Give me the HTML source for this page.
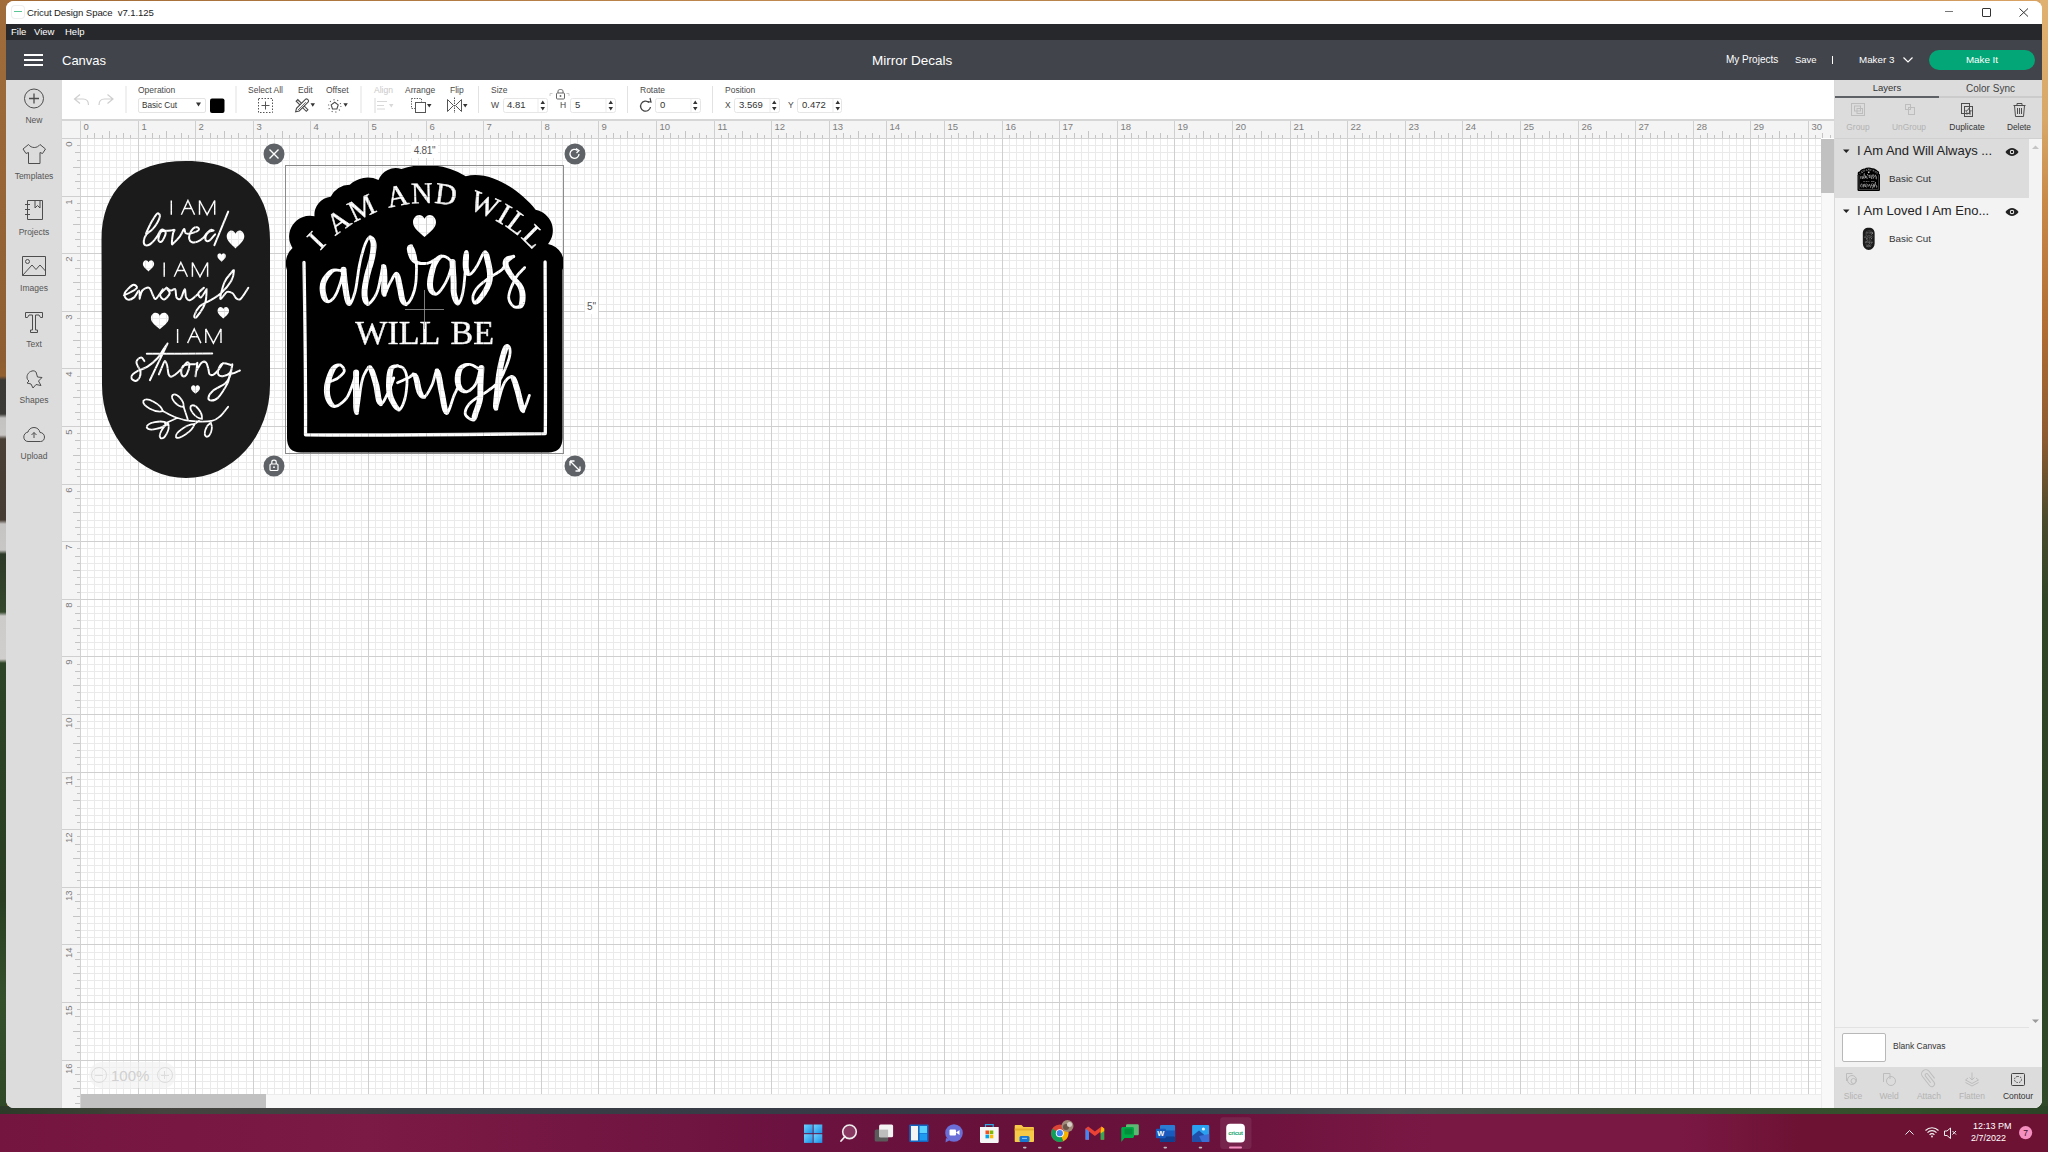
<!DOCTYPE html>
<html><head><meta charset="utf-8">
<style>
*{box-sizing:border-box;margin:0;padding:0}
html,body{width:2048px;height:1152px;overflow:hidden}
body{position:relative;font-family:"Liberation Sans",sans-serif;background:#5b4a3a}
.a{position:absolute}
.t{position:absolute;white-space:nowrap;line-height:1}
svg{position:absolute;overflow:visible}
#desk{left:0;top:0;width:2048px;height:1152px;background:linear-gradient(90deg,#a36a35 0%,#c08a50 40%,#b58048 60%,#c8905a 90%,#d9a565 100%)}
#deskL{left:0;top:0;width:7px;height:1152px;background:linear-gradient(180deg,#a06c3a 0px,#8e5e32 360px,#93602f 376px,#3a3936 380px,#3c3a37 414px,#c4c2c0 418px,#c8c6c4 435px,#4a4036 439px,#463c33 520px,#c6c4c2 524px,#c9c7c5 550px,#2e3a28 554px,#34482c 612px,#cdcbc9 616px,#d0cecc 659px,#2e4426 663px,#2a3f22 900px,#34502b 1000px,#2d4424 1152px)}
#deskR{left:2040px;top:0;width:8px;height:1152px;background:linear-gradient(180deg,#e0b070 0px,#d8a868 120px,#c98a48 200px,#b06c32 330px,#8c5a30 440px,#4a4a2c 520px,#304526 600px,#2c4224 900px,#324a2a 1152px)}
#deskB{left:0;top:1106px;width:2048px;height:10px;background:linear-gradient(90deg,#2c3a28 0%,#45443e 8%,#3a3d44 20%,#353a46 45%,#3c4048 62%,#4a4c4e 68%,#3d4a34 80%,#34502b 92%,#2c4426 100%)}
#win{left:6px;top:1px;width:2036px;height:1107px;border-radius:8px;background:#fff}
#title{left:6px;top:1px;width:2036px;height:23px;background:#fff;border-radius:8px 8px 0 0}
#menu{left:6px;top:24px;width:2036px;height:16px;background:#27282c}
#hdr{left:6px;top:40px;width:2036px;height:40px;background:#41444b}
#side{left:6px;top:80px;width:56px;height:1028px;background:#dcdcdc;border-radius:0 0 0 8px}
#tool{left:62px;top:80px;width:1773px;height:40px;background:#fff}
#panel{left:1835px;top:80px;width:207px;height:1028px;background:#f3f3f3;border-radius:0 0 8px 0}
#task{left:0;top:1114px;width:2048px;height:38px;background:#6c1232}
.wt{color:#fff}
.lbl{font-size:8.5px;color:#4a4a4a}
.sl{font-size:8.5px;color:#555;text-align:center;width:56px;left:6px}
</style></head><body>
<div class="a" id="desk"></div><div class="a" id="deskL"></div><div class="a" id="deskR"></div><div class="a" id="deskB"></div>
<div class="a" id="win"></div>
<div class="a" id="title"></div>
<div class="a" id="menu"></div>
<div class="a" id="hdr"></div>
<div class="a" id="side"></div>
<div class="a" id="tool"></div>
<div class="a" id="panel"></div>
<div class="a" id="task"></div>

<!-- title bar -->
<div class="a" style="left:12px;top:6px;width:12px;height:12px;border-radius:3px;background:#fff;box-shadow:0 0 0 1px #eee"></div>
<div class="a" style="left:14px;top:11px;width:8px;height:1.2px;background:#5cc596"></div>
<div class="t" style="left:27px;top:8px;font-size:9.6px;color:#222;letter-spacing:-0.1px">Cricut Design Space&nbsp; v7.1.125</div>
<div class="a" style="left:1945px;top:11px;width:8px;height:1px;background:#777"></div>
<div class="a" style="left:1982px;top:8px;width:9px;height:9px;border:1px solid #333;border-radius:1px"></div>
<svg style="left:2019px;top:8px" width="10" height="9"><path d="M0.5 0.5L9 8.5M9 0.5L0.5 8.5" stroke="#333" stroke-width="1"/></svg>
<!-- menu -->
<div class="t wt" style="left:11px;top:27px;font-size:9.5px">File</div>
<div class="t wt" style="left:34px;top:27px;font-size:9.5px">View</div>
<div class="t wt" style="left:65px;top:27px;font-size:9.5px">Help</div>
<!-- header -->
<div class="a" style="left:24px;top:54px;width:19px;height:2px;background:#fff"></div>
<div class="a" style="left:24px;top:59px;width:19px;height:2px;background:#fff"></div>
<div class="a" style="left:24px;top:64px;width:19px;height:2px;background:#fff"></div>
<div class="t wt" style="left:62px;top:54px;font-size:13px">Canvas</div>
<div class="t wt" style="left:872px;top:54px;font-size:13.5px">Mirror Decals</div>
<div class="t wt" style="left:1726px;top:55px;font-size:10px">My Projects</div>
<div class="t wt" style="left:1795px;top:55px;font-size:9.5px">Save</div>
<div class="a" style="left:1832px;top:56px;width:1px;height:8px;background:#fff"></div>
<div class="t wt" style="left:1859px;top:55px;font-size:9.8px">Maker 3</div>
<svg style="left:1903px;top:57px" width="10" height="6"><path d="M0.5 0.5L5 5L9.5 0.5" stroke="#fff" stroke-width="1.2" fill="none"/></svg>
<div class="a" style="left:1929px;top:50px;width:106px;height:20px;border-radius:10px;background:#03a676"></div>
<div class="t wt" style="left:1929px;top:55px;width:106px;text-align:center;font-size:9.8px">Make It</div>

<!-- left sidebar -->
<svg style="left:0;top:0" width="70" height="470" fill="none" stroke="#4d4d4d" stroke-width="1">
<circle cx="34" cy="98.5" r="9.5"/>
<path d="M34 93.5V103.5M29 98.5H39" stroke-width="1.3"/>
<path d="M28.5 144.5L23 149L26 153.5L28.5 152.5V163.5H40V152.5L42.5 153.5L45.5 149L40 144.5C38.5 146.5 36.5 147.5 34.25 147.5C32 147.5 30 146.5 28.5 144.5Z"/>
<path d="M27.5 200.5H42.5V219.5H27.5Z M25 204.5H30 M25 209.5H30 M25 214.5H30 M35 200.5V208L37.5 205.5L40 208V200.5"/>
<path d="M22.5 256.5H45.5V275.5H22.5Z M22.5 275.5L32 265L36 269.5L40 265L45.5 271"/>
<circle cx="27.5" cy="261.5" r="2"/>
<path d="M25.5 312.5H42.5V317.5H40.5L39 315H35.5V330H37.5V332.5H30.5V330H32.5V315H29L27.5 317.5H25.5Z"/>
<path d="M32 371C28 372 26 376 27.5 379.5L29 381L27 383L31 384L33 388L36 384.5L41 385.5L38.5 381L42 377.5L37.5 377L36 372C35 371 33.5 370.5 32 371Z"/>
<path d="M28 441.5H40.5C43 441.5 44.5 439.5 44.5 437C44.5 434.5 42.5 432.5 40 432.5C39.5 429.5 37 427.5 34 427.5C31 427.5 28.5 429.5 28 432C25.5 432.5 23.8 434.5 23.8 437C23.8 439.5 25.5 441.5 28 441.5Z M34 438V432.5 M31.5 435L34 432.5L36.5 435"/>
</svg>
<div class="t sl" style="top:116px">New</div>
<div class="t sl" style="top:172px">Templates</div>
<div class="t sl" style="top:228px">Projects</div>
<div class="t sl" style="top:284px">Images</div>
<div class="t sl" style="top:340px">Text</div>
<div class="t sl" style="top:396px">Shapes</div>
<div class="t sl" style="top:452px">Upload</div>

<!-- toolbar -->
<svg style="left:0;top:0" width="900" height="120" fill="none" stroke-width="1">
<path d="M80 94.5L74.5 99L80 103.5 M74.5 99H83C86.5 99 88.5 101 88.5 105" stroke="#cfcfcf" stroke-width="1.2"/>
<path d="M107.5 94.5L113 99L107.5 103.5 M113 99H104.5C101 99 99 101 99 105" stroke="#cfcfcf" stroke-width="1.2"/>
<rect x="125.5" y="86" width="1" height="27" fill="#e2e2e2" stroke="none"/>
<rect x="235.5" y="86" width="1" height="27" fill="#e2e2e2" stroke="none"/>
<rect x="360.5" y="86" width="1" height="27" fill="#e2e2e2" stroke="none"/>
<rect x="478" y="86" width="1" height="27" fill="#e2e2e2" stroke="none"/>
<rect x="627" y="86" width="1" height="27" fill="#e2e2e2" stroke="none"/>
<rect x="712" y="86" width="1" height="27" fill="#e2e2e2" stroke="none"/>
<!-- dropdown -->
<rect x="138.5" y="98.5" width="67" height="14" rx="1.5" stroke="#e4e4e4"/>
<path d="M196 102.5H201L198.5 106.5Z" fill="#333" stroke="none"/>
<rect x="210" y="98.5" width="14.5" height="14.5" rx="2" fill="#000" stroke="none"/>
<!-- select all -->
<rect x="258.5" y="98.5" width="14" height="14" stroke="#555" stroke-dasharray="1.5 1.5"/>
<path d="M265.5 101.5V109.5M261.5 105.5H269.5" stroke="#555"/>
<!-- edit: pencil & ruler crossed -->
<g stroke="#4a4a4a" stroke-width="1.1" fill="#fff">
<path d="M296.2 101.2L297.8 99.6L307.9 109.7L306.3 111.3Z"/>
<path d="M295.6 111.8L296.5 108.3L305.4 99.4C306 98.8 307 98.8 307.6 99.4L308.1 99.9C308.7 100.5 308.7 101.5 308.1 102.1L299.2 111Z"/>
</g>
<path d="M298 110L305.8 102.2 M297.5 100.2L298.7 101.4" stroke="#4a4a4a" stroke-width="0.8"/>
<path d="M310.5 103.2H315L312.75 106.8Z" fill="#333" stroke="none"/>
<!-- offset -->
<path d="M334.7 102.3L338.2 104.9L336.9 109H332.5L331.2 104.9Z" stroke="#4a4a4a" stroke-width="1.1"/>
<circle cx="334.7" cy="105.9" r="6.2" stroke="#4a4a4a" stroke-width="1.2" stroke-dasharray="0.9 3" />
<path d="M343.4 103.2H347.8L345.6 106.8Z" fill="#333" stroke="none"/>
<!-- align disabled -->
<path d="M375 98V113 M377 101.5H387 M377 105.5H384 M377 109H385" stroke="#d8d8d8"/>
<path d="M389 104H393.5L391.25 107.5Z" fill="#d8d8d8" stroke="none"/>
<!-- arrange -->
<rect x="411.5" y="98.5" width="10" height="10" stroke="#555" stroke-dasharray="1.3 1.3"/>
<rect x="415.5" y="102.5" width="10" height="10" fill="#fff" stroke="#555"/>
<path d="M427 104H431.5L429.25 107.5Z" fill="#333" stroke="none"/>
<!-- flip -->
<path d="M447.5 99.5L453.5 105.5L447.5 111.5Z M461.5 99.5L455.5 105.5L461.5 111.5Z" stroke="#555"/>
<path d="M454.5 97.5V113" stroke="#555" stroke-dasharray="1.5 1"/>
<path d="M463 104H467.5L465.25 107.5Z" fill="#333" stroke="none"/>
<!-- lock -->
<path d="M550 96V93.5H552.5 M569 96V93.5H566.5" stroke="#ccc"/>
<rect x="556.5" y="93" width="8" height="6" rx="1" stroke="#666"/>
<path d="M558 93V91C558 89 563 89 563 91V93" stroke="#666"/>
<circle cx="560.5" cy="96" r="0.9" fill="#666" stroke="none"/>
<!-- inputs -->
<rect x="503.5" y="98.5" width="44" height="14" rx="2" stroke="#e6e6e6"/>
<rect x="570.5" y="98.5" width="45" height="14" rx="2" stroke="#e6e6e6"/>
<rect x="655.5" y="98.5" width="45" height="14" rx="2" stroke="#e6e6e6"/>
<rect x="734.5" y="98.5" width="45" height="14" rx="2" stroke="#e6e6e6"/>
<rect x="797.5" y="98.5" width="44" height="14" rx="2" stroke="#e6e6e6"/>
<rect x="537.5" y="99" width="1" height="13" fill="#ececec" stroke="none"/>
<rect x="605.5" y="99" width="1" height="13" fill="#ececec" stroke="none"/>
<rect x="690.5" y="99" width="1" height="13" fill="#ececec" stroke="none"/>
<rect x="769.5" y="99" width="1" height="13" fill="#ececec" stroke="none"/>
<rect x="832.5" y="99" width="1" height="13" fill="#ececec" stroke="none"/>
<g fill="#333" stroke="none">
<path d="M540.5 104H545L542.75 100.5Z M540.5 107H545L542.75 110.5Z"/>
<path d="M608.5 104H613L610.75 100.5Z M608.5 107H613L610.75 110.5Z"/>
<path d="M693 104H697.5L695.25 100.5Z M693 107H697.5L695.25 110.5Z"/>
<path d="M772 104H776.5L774.25 100.5Z M772 107H776.5L774.25 110.5Z"/>
<path d="M835.5 104H840L837.75 100.5Z M835.5 107H840L837.75 110.5Z"/>
</g>
<!-- rotate icon -->
<path d="M649 102.5A5 5 0 1 0 650.5 107" stroke="#444" stroke-width="1.3"/>
<path d="M646.5 101.5L651 102L650 98" stroke="#444" stroke-width="1.2"/>
</svg>
<div class="t lbl" style="left:138px;top:86px">Operation</div>
<div class="t" style="left:142px;top:102px;font-size:8.2px;color:#333">Basic Cut</div>
<div class="t lbl" style="left:248px;top:86px">Select All</div>
<div class="t lbl" style="left:298px;top:86px">Edit</div>
<div class="t lbl" style="left:326px;top:86px">Offset</div>
<div class="t lbl" style="left:374px;top:86px;color:#c8c8c8">Align</div>
<div class="t lbl" style="left:405px;top:86px">Arrange</div>
<div class="t lbl" style="left:450px;top:86px">Flip</div>
<div class="t lbl" style="left:491px;top:86px">Size</div>
<div class="t lbl" style="left:640px;top:86px">Rotate</div>
<div class="t lbl" style="left:725px;top:86px">Position</div>
<div class="t" style="left:491px;top:101px;font-size:8.5px;color:#444">W</div>
<div class="t" style="left:507px;top:100px;font-size:9.5px;color:#333">4.81</div>
<div class="t" style="left:560px;top:101px;font-size:8.5px;color:#444">H</div>
<div class="t" style="left:575px;top:100px;font-size:9.5px;color:#333">5</div>
<div class="t" style="left:660px;top:100px;font-size:9.5px;color:#333">0</div>
<div class="t" style="left:725px;top:101px;font-size:8.5px;color:#444">X</div>
<div class="t" style="left:739px;top:100px;font-size:9.5px;color:#333">3.569</div>
<div class="t" style="left:788px;top:101px;font-size:8.5px;color:#444">Y</div>
<div class="t" style="left:802px;top:100px;font-size:9.5px;color:#333">0.472</div>

<div class="a" style="left:81px;top:138px;width:1740px;height:956px;background:#fff"></div>
<svg style="left:81px;top:139px" width="1740" height="955"><rect x="6" y="0" width="1" height="955" fill="#eaeaea"/><rect x="13" y="0" width="1" height="955" fill="#eaeaea"/><rect x="21" y="0" width="1" height="955" fill="#eaeaea"/><rect x="28" y="0" width="1" height="955" fill="#eaeaea"/><rect x="35" y="0" width="1" height="955" fill="#eaeaea"/><rect x="42" y="0" width="1" height="955" fill="#eaeaea"/><rect x="49" y="0" width="1" height="955" fill="#eaeaea"/><rect x="64" y="0" width="1" height="955" fill="#eaeaea"/><rect x="71" y="0" width="1" height="955" fill="#eaeaea"/><rect x="78" y="0" width="1" height="955" fill="#eaeaea"/><rect x="85" y="0" width="1" height="955" fill="#eaeaea"/><rect x="93" y="0" width="1" height="955" fill="#eaeaea"/><rect x="100" y="0" width="1" height="955" fill="#eaeaea"/><rect x="107" y="0" width="1" height="955" fill="#eaeaea"/><rect x="121" y="0" width="1" height="955" fill="#eaeaea"/><rect x="129" y="0" width="1" height="955" fill="#eaeaea"/><rect x="136" y="0" width="1" height="955" fill="#eaeaea"/><rect x="143" y="0" width="1" height="955" fill="#eaeaea"/><rect x="150" y="0" width="1" height="955" fill="#eaeaea"/><rect x="157" y="0" width="1" height="955" fill="#eaeaea"/><rect x="165" y="0" width="1" height="955" fill="#eaeaea"/><rect x="179" y="0" width="1" height="955" fill="#eaeaea"/><rect x="186" y="0" width="1" height="955" fill="#eaeaea"/><rect x="193" y="0" width="1" height="955" fill="#eaeaea"/><rect x="201" y="0" width="1" height="955" fill="#eaeaea"/><rect x="208" y="0" width="1" height="955" fill="#eaeaea"/><rect x="215" y="0" width="1" height="955" fill="#eaeaea"/><rect x="222" y="0" width="1" height="955" fill="#eaeaea"/><rect x="237" y="0" width="1" height="955" fill="#eaeaea"/><rect x="244" y="0" width="1" height="955" fill="#eaeaea"/><rect x="251" y="0" width="1" height="955" fill="#eaeaea"/><rect x="258" y="0" width="1" height="955" fill="#eaeaea"/><rect x="265" y="0" width="1" height="955" fill="#eaeaea"/><rect x="273" y="0" width="1" height="955" fill="#eaeaea"/><rect x="280" y="0" width="1" height="955" fill="#eaeaea"/><rect x="294" y="0" width="1" height="955" fill="#eaeaea"/><rect x="301" y="0" width="1" height="955" fill="#eaeaea"/><rect x="309" y="0" width="1" height="955" fill="#eaeaea"/><rect x="316" y="0" width="1" height="955" fill="#eaeaea"/><rect x="323" y="0" width="1" height="955" fill="#eaeaea"/><rect x="330" y="0" width="1" height="955" fill="#eaeaea"/><rect x="337" y="0" width="1" height="955" fill="#eaeaea"/><rect x="352" y="0" width="1" height="955" fill="#eaeaea"/><rect x="359" y="0" width="1" height="955" fill="#eaeaea"/><rect x="366" y="0" width="1" height="955" fill="#eaeaea"/><rect x="373" y="0" width="1" height="955" fill="#eaeaea"/><rect x="381" y="0" width="1" height="955" fill="#eaeaea"/><rect x="388" y="0" width="1" height="955" fill="#eaeaea"/><rect x="395" y="0" width="1" height="955" fill="#eaeaea"/><rect x="409" y="0" width="1" height="955" fill="#eaeaea"/><rect x="417" y="0" width="1" height="955" fill="#eaeaea"/><rect x="424" y="0" width="1" height="955" fill="#eaeaea"/><rect x="431" y="0" width="1" height="955" fill="#eaeaea"/><rect x="438" y="0" width="1" height="955" fill="#eaeaea"/><rect x="445" y="0" width="1" height="955" fill="#eaeaea"/><rect x="453" y="0" width="1" height="955" fill="#eaeaea"/><rect x="467" y="0" width="1" height="955" fill="#eaeaea"/><rect x="474" y="0" width="1" height="955" fill="#eaeaea"/><rect x="481" y="0" width="1" height="955" fill="#eaeaea"/><rect x="489" y="0" width="1" height="955" fill="#eaeaea"/><rect x="496" y="0" width="1" height="955" fill="#eaeaea"/><rect x="503" y="0" width="1" height="955" fill="#eaeaea"/><rect x="510" y="0" width="1" height="955" fill="#eaeaea"/><rect x="525" y="0" width="1" height="955" fill="#eaeaea"/><rect x="532" y="0" width="1" height="955" fill="#eaeaea"/><rect x="539" y="0" width="1" height="955" fill="#eaeaea"/><rect x="546" y="0" width="1" height="955" fill="#eaeaea"/><rect x="553" y="0" width="1" height="955" fill="#eaeaea"/><rect x="561" y="0" width="1" height="955" fill="#eaeaea"/><rect x="568" y="0" width="1" height="955" fill="#eaeaea"/><rect x="582" y="0" width="1" height="955" fill="#eaeaea"/><rect x="589" y="0" width="1" height="955" fill="#eaeaea"/><rect x="597" y="0" width="1" height="955" fill="#eaeaea"/><rect x="604" y="0" width="1" height="955" fill="#eaeaea"/><rect x="611" y="0" width="1" height="955" fill="#eaeaea"/><rect x="618" y="0" width="1" height="955" fill="#eaeaea"/><rect x="625" y="0" width="1" height="955" fill="#eaeaea"/><rect x="640" y="0" width="1" height="955" fill="#eaeaea"/><rect x="647" y="0" width="1" height="955" fill="#eaeaea"/><rect x="654" y="0" width="1" height="955" fill="#eaeaea"/><rect x="661" y="0" width="1" height="955" fill="#eaeaea"/><rect x="669" y="0" width="1" height="955" fill="#eaeaea"/><rect x="676" y="0" width="1" height="955" fill="#eaeaea"/><rect x="683" y="0" width="1" height="955" fill="#eaeaea"/><rect x="697" y="0" width="1" height="955" fill="#eaeaea"/><rect x="705" y="0" width="1" height="955" fill="#eaeaea"/><rect x="712" y="0" width="1" height="955" fill="#eaeaea"/><rect x="719" y="0" width="1" height="955" fill="#eaeaea"/><rect x="726" y="0" width="1" height="955" fill="#eaeaea"/><rect x="733" y="0" width="1" height="955" fill="#eaeaea"/><rect x="741" y="0" width="1" height="955" fill="#eaeaea"/><rect x="755" y="0" width="1" height="955" fill="#eaeaea"/><rect x="762" y="0" width="1" height="955" fill="#eaeaea"/><rect x="769" y="0" width="1" height="955" fill="#eaeaea"/><rect x="777" y="0" width="1" height="955" fill="#eaeaea"/><rect x="784" y="0" width="1" height="955" fill="#eaeaea"/><rect x="791" y="0" width="1" height="955" fill="#eaeaea"/><rect x="798" y="0" width="1" height="955" fill="#eaeaea"/><rect x="813" y="0" width="1" height="955" fill="#eaeaea"/><rect x="820" y="0" width="1" height="955" fill="#eaeaea"/><rect x="827" y="0" width="1" height="955" fill="#eaeaea"/><rect x="834" y="0" width="1" height="955" fill="#eaeaea"/><rect x="841" y="0" width="1" height="955" fill="#eaeaea"/><rect x="849" y="0" width="1" height="955" fill="#eaeaea"/><rect x="856" y="0" width="1" height="955" fill="#eaeaea"/><rect x="870" y="0" width="1" height="955" fill="#eaeaea"/><rect x="877" y="0" width="1" height="955" fill="#eaeaea"/><rect x="885" y="0" width="1" height="955" fill="#eaeaea"/><rect x="892" y="0" width="1" height="955" fill="#eaeaea"/><rect x="899" y="0" width="1" height="955" fill="#eaeaea"/><rect x="906" y="0" width="1" height="955" fill="#eaeaea"/><rect x="913" y="0" width="1" height="955" fill="#eaeaea"/><rect x="928" y="0" width="1" height="955" fill="#eaeaea"/><rect x="935" y="0" width="1" height="955" fill="#eaeaea"/><rect x="942" y="0" width="1" height="955" fill="#eaeaea"/><rect x="949" y="0" width="1" height="955" fill="#eaeaea"/><rect x="957" y="0" width="1" height="955" fill="#eaeaea"/><rect x="964" y="0" width="1" height="955" fill="#eaeaea"/><rect x="971" y="0" width="1" height="955" fill="#eaeaea"/><rect x="985" y="0" width="1" height="955" fill="#eaeaea"/><rect x="993" y="0" width="1" height="955" fill="#eaeaea"/><rect x="1000" y="0" width="1" height="955" fill="#eaeaea"/><rect x="1007" y="0" width="1" height="955" fill="#eaeaea"/><rect x="1014" y="0" width="1" height="955" fill="#eaeaea"/><rect x="1021" y="0" width="1" height="955" fill="#eaeaea"/><rect x="1029" y="0" width="1" height="955" fill="#eaeaea"/><rect x="1043" y="0" width="1" height="955" fill="#eaeaea"/><rect x="1050" y="0" width="1" height="955" fill="#eaeaea"/><rect x="1057" y="0" width="1" height="955" fill="#eaeaea"/><rect x="1065" y="0" width="1" height="955" fill="#eaeaea"/><rect x="1072" y="0" width="1" height="955" fill="#eaeaea"/><rect x="1079" y="0" width="1" height="955" fill="#eaeaea"/><rect x="1086" y="0" width="1" height="955" fill="#eaeaea"/><rect x="1101" y="0" width="1" height="955" fill="#eaeaea"/><rect x="1108" y="0" width="1" height="955" fill="#eaeaea"/><rect x="1115" y="0" width="1" height="955" fill="#eaeaea"/><rect x="1122" y="0" width="1" height="955" fill="#eaeaea"/><rect x="1129" y="0" width="1" height="955" fill="#eaeaea"/><rect x="1137" y="0" width="1" height="955" fill="#eaeaea"/><rect x="1144" y="0" width="1" height="955" fill="#eaeaea"/><rect x="1158" y="0" width="1" height="955" fill="#eaeaea"/><rect x="1165" y="0" width="1" height="955" fill="#eaeaea"/><rect x="1173" y="0" width="1" height="955" fill="#eaeaea"/><rect x="1180" y="0" width="1" height="955" fill="#eaeaea"/><rect x="1187" y="0" width="1" height="955" fill="#eaeaea"/><rect x="1194" y="0" width="1" height="955" fill="#eaeaea"/><rect x="1201" y="0" width="1" height="955" fill="#eaeaea"/><rect x="1216" y="0" width="1" height="955" fill="#eaeaea"/><rect x="1223" y="0" width="1" height="955" fill="#eaeaea"/><rect x="1230" y="0" width="1" height="955" fill="#eaeaea"/><rect x="1237" y="0" width="1" height="955" fill="#eaeaea"/><rect x="1245" y="0" width="1" height="955" fill="#eaeaea"/><rect x="1252" y="0" width="1" height="955" fill="#eaeaea"/><rect x="1259" y="0" width="1" height="955" fill="#eaeaea"/><rect x="1273" y="0" width="1" height="955" fill="#eaeaea"/><rect x="1281" y="0" width="1" height="955" fill="#eaeaea"/><rect x="1288" y="0" width="1" height="955" fill="#eaeaea"/><rect x="1295" y="0" width="1" height="955" fill="#eaeaea"/><rect x="1302" y="0" width="1" height="955" fill="#eaeaea"/><rect x="1309" y="0" width="1" height="955" fill="#eaeaea"/><rect x="1317" y="0" width="1" height="955" fill="#eaeaea"/><rect x="1331" y="0" width="1" height="955" fill="#eaeaea"/><rect x="1338" y="0" width="1" height="955" fill="#eaeaea"/><rect x="1345" y="0" width="1" height="955" fill="#eaeaea"/><rect x="1353" y="0" width="1" height="955" fill="#eaeaea"/><rect x="1360" y="0" width="1" height="955" fill="#eaeaea"/><rect x="1367" y="0" width="1" height="955" fill="#eaeaea"/><rect x="1374" y="0" width="1" height="955" fill="#eaeaea"/><rect x="1389" y="0" width="1" height="955" fill="#eaeaea"/><rect x="1396" y="0" width="1" height="955" fill="#eaeaea"/><rect x="1403" y="0" width="1" height="955" fill="#eaeaea"/><rect x="1410" y="0" width="1" height="955" fill="#eaeaea"/><rect x="1417" y="0" width="1" height="955" fill="#eaeaea"/><rect x="1425" y="0" width="1" height="955" fill="#eaeaea"/><rect x="1432" y="0" width="1" height="955" fill="#eaeaea"/><rect x="1446" y="0" width="1" height="955" fill="#eaeaea"/><rect x="1453" y="0" width="1" height="955" fill="#eaeaea"/><rect x="1461" y="0" width="1" height="955" fill="#eaeaea"/><rect x="1468" y="0" width="1" height="955" fill="#eaeaea"/><rect x="1475" y="0" width="1" height="955" fill="#eaeaea"/><rect x="1482" y="0" width="1" height="955" fill="#eaeaea"/><rect x="1489" y="0" width="1" height="955" fill="#eaeaea"/><rect x="1504" y="0" width="1" height="955" fill="#eaeaea"/><rect x="1511" y="0" width="1" height="955" fill="#eaeaea"/><rect x="1518" y="0" width="1" height="955" fill="#eaeaea"/><rect x="1525" y="0" width="1" height="955" fill="#eaeaea"/><rect x="1533" y="0" width="1" height="955" fill="#eaeaea"/><rect x="1540" y="0" width="1" height="955" fill="#eaeaea"/><rect x="1547" y="0" width="1" height="955" fill="#eaeaea"/><rect x="1561" y="0" width="1" height="955" fill="#eaeaea"/><rect x="1569" y="0" width="1" height="955" fill="#eaeaea"/><rect x="1576" y="0" width="1" height="955" fill="#eaeaea"/><rect x="1583" y="0" width="1" height="955" fill="#eaeaea"/><rect x="1590" y="0" width="1" height="955" fill="#eaeaea"/><rect x="1597" y="0" width="1" height="955" fill="#eaeaea"/><rect x="1605" y="0" width="1" height="955" fill="#eaeaea"/><rect x="1619" y="0" width="1" height="955" fill="#eaeaea"/><rect x="1626" y="0" width="1" height="955" fill="#eaeaea"/><rect x="1633" y="0" width="1" height="955" fill="#eaeaea"/><rect x="1641" y="0" width="1" height="955" fill="#eaeaea"/><rect x="1648" y="0" width="1" height="955" fill="#eaeaea"/><rect x="1655" y="0" width="1" height="955" fill="#eaeaea"/><rect x="1662" y="0" width="1" height="955" fill="#eaeaea"/><rect x="1677" y="0" width="1" height="955" fill="#eaeaea"/><rect x="1684" y="0" width="1" height="955" fill="#eaeaea"/><rect x="1691" y="0" width="1" height="955" fill="#eaeaea"/><rect x="1698" y="0" width="1" height="955" fill="#eaeaea"/><rect x="1705" y="0" width="1" height="955" fill="#eaeaea"/><rect x="1713" y="0" width="1" height="955" fill="#eaeaea"/><rect x="1720" y="0" width="1" height="955" fill="#eaeaea"/><rect x="1734" y="0" width="1" height="955" fill="#eaeaea"/><rect x="0" y="6" width="1740" height="1" fill="#eaeaea"/><rect x="0" y="13" width="1740" height="1" fill="#eaeaea"/><rect x="0" y="21" width="1740" height="1" fill="#eaeaea"/><rect x="0" y="28" width="1740" height="1" fill="#eaeaea"/><rect x="0" y="35" width="1740" height="1" fill="#eaeaea"/><rect x="0" y="42" width="1740" height="1" fill="#eaeaea"/><rect x="0" y="49" width="1740" height="1" fill="#eaeaea"/><rect x="0" y="64" width="1740" height="1" fill="#eaeaea"/><rect x="0" y="71" width="1740" height="1" fill="#eaeaea"/><rect x="0" y="78" width="1740" height="1" fill="#eaeaea"/><rect x="0" y="85" width="1740" height="1" fill="#eaeaea"/><rect x="0" y="93" width="1740" height="1" fill="#eaeaea"/><rect x="0" y="100" width="1740" height="1" fill="#eaeaea"/><rect x="0" y="107" width="1740" height="1" fill="#eaeaea"/><rect x="0" y="121" width="1740" height="1" fill="#eaeaea"/><rect x="0" y="129" width="1740" height="1" fill="#eaeaea"/><rect x="0" y="136" width="1740" height="1" fill="#eaeaea"/><rect x="0" y="143" width="1740" height="1" fill="#eaeaea"/><rect x="0" y="150" width="1740" height="1" fill="#eaeaea"/><rect x="0" y="157" width="1740" height="1" fill="#eaeaea"/><rect x="0" y="165" width="1740" height="1" fill="#eaeaea"/><rect x="0" y="179" width="1740" height="1" fill="#eaeaea"/><rect x="0" y="186" width="1740" height="1" fill="#eaeaea"/><rect x="0" y="193" width="1740" height="1" fill="#eaeaea"/><rect x="0" y="201" width="1740" height="1" fill="#eaeaea"/><rect x="0" y="208" width="1740" height="1" fill="#eaeaea"/><rect x="0" y="215" width="1740" height="1" fill="#eaeaea"/><rect x="0" y="222" width="1740" height="1" fill="#eaeaea"/><rect x="0" y="237" width="1740" height="1" fill="#eaeaea"/><rect x="0" y="244" width="1740" height="1" fill="#eaeaea"/><rect x="0" y="251" width="1740" height="1" fill="#eaeaea"/><rect x="0" y="258" width="1740" height="1" fill="#eaeaea"/><rect x="0" y="265" width="1740" height="1" fill="#eaeaea"/><rect x="0" y="273" width="1740" height="1" fill="#eaeaea"/><rect x="0" y="280" width="1740" height="1" fill="#eaeaea"/><rect x="0" y="294" width="1740" height="1" fill="#eaeaea"/><rect x="0" y="301" width="1740" height="1" fill="#eaeaea"/><rect x="0" y="309" width="1740" height="1" fill="#eaeaea"/><rect x="0" y="316" width="1740" height="1" fill="#eaeaea"/><rect x="0" y="323" width="1740" height="1" fill="#eaeaea"/><rect x="0" y="330" width="1740" height="1" fill="#eaeaea"/><rect x="0" y="337" width="1740" height="1" fill="#eaeaea"/><rect x="0" y="352" width="1740" height="1" fill="#eaeaea"/><rect x="0" y="359" width="1740" height="1" fill="#eaeaea"/><rect x="0" y="366" width="1740" height="1" fill="#eaeaea"/><rect x="0" y="373" width="1740" height="1" fill="#eaeaea"/><rect x="0" y="381" width="1740" height="1" fill="#eaeaea"/><rect x="0" y="388" width="1740" height="1" fill="#eaeaea"/><rect x="0" y="395" width="1740" height="1" fill="#eaeaea"/><rect x="0" y="409" width="1740" height="1" fill="#eaeaea"/><rect x="0" y="417" width="1740" height="1" fill="#eaeaea"/><rect x="0" y="424" width="1740" height="1" fill="#eaeaea"/><rect x="0" y="431" width="1740" height="1" fill="#eaeaea"/><rect x="0" y="438" width="1740" height="1" fill="#eaeaea"/><rect x="0" y="445" width="1740" height="1" fill="#eaeaea"/><rect x="0" y="453" width="1740" height="1" fill="#eaeaea"/><rect x="0" y="467" width="1740" height="1" fill="#eaeaea"/><rect x="0" y="474" width="1740" height="1" fill="#eaeaea"/><rect x="0" y="481" width="1740" height="1" fill="#eaeaea"/><rect x="0" y="489" width="1740" height="1" fill="#eaeaea"/><rect x="0" y="496" width="1740" height="1" fill="#eaeaea"/><rect x="0" y="503" width="1740" height="1" fill="#eaeaea"/><rect x="0" y="510" width="1740" height="1" fill="#eaeaea"/><rect x="0" y="525" width="1740" height="1" fill="#eaeaea"/><rect x="0" y="532" width="1740" height="1" fill="#eaeaea"/><rect x="0" y="539" width="1740" height="1" fill="#eaeaea"/><rect x="0" y="546" width="1740" height="1" fill="#eaeaea"/><rect x="0" y="553" width="1740" height="1" fill="#eaeaea"/><rect x="0" y="561" width="1740" height="1" fill="#eaeaea"/><rect x="0" y="568" width="1740" height="1" fill="#eaeaea"/><rect x="0" y="582" width="1740" height="1" fill="#eaeaea"/><rect x="0" y="589" width="1740" height="1" fill="#eaeaea"/><rect x="0" y="597" width="1740" height="1" fill="#eaeaea"/><rect x="0" y="604" width="1740" height="1" fill="#eaeaea"/><rect x="0" y="611" width="1740" height="1" fill="#eaeaea"/><rect x="0" y="618" width="1740" height="1" fill="#eaeaea"/><rect x="0" y="625" width="1740" height="1" fill="#eaeaea"/><rect x="0" y="640" width="1740" height="1" fill="#eaeaea"/><rect x="0" y="647" width="1740" height="1" fill="#eaeaea"/><rect x="0" y="654" width="1740" height="1" fill="#eaeaea"/><rect x="0" y="661" width="1740" height="1" fill="#eaeaea"/><rect x="0" y="669" width="1740" height="1" fill="#eaeaea"/><rect x="0" y="676" width="1740" height="1" fill="#eaeaea"/><rect x="0" y="683" width="1740" height="1" fill="#eaeaea"/><rect x="0" y="697" width="1740" height="1" fill="#eaeaea"/><rect x="0" y="705" width="1740" height="1" fill="#eaeaea"/><rect x="0" y="712" width="1740" height="1" fill="#eaeaea"/><rect x="0" y="719" width="1740" height="1" fill="#eaeaea"/><rect x="0" y="726" width="1740" height="1" fill="#eaeaea"/><rect x="0" y="733" width="1740" height="1" fill="#eaeaea"/><rect x="0" y="741" width="1740" height="1" fill="#eaeaea"/><rect x="0" y="755" width="1740" height="1" fill="#eaeaea"/><rect x="0" y="762" width="1740" height="1" fill="#eaeaea"/><rect x="0" y="769" width="1740" height="1" fill="#eaeaea"/><rect x="0" y="777" width="1740" height="1" fill="#eaeaea"/><rect x="0" y="784" width="1740" height="1" fill="#eaeaea"/><rect x="0" y="791" width="1740" height="1" fill="#eaeaea"/><rect x="0" y="798" width="1740" height="1" fill="#eaeaea"/><rect x="0" y="813" width="1740" height="1" fill="#eaeaea"/><rect x="0" y="820" width="1740" height="1" fill="#eaeaea"/><rect x="0" y="827" width="1740" height="1" fill="#eaeaea"/><rect x="0" y="834" width="1740" height="1" fill="#eaeaea"/><rect x="0" y="841" width="1740" height="1" fill="#eaeaea"/><rect x="0" y="849" width="1740" height="1" fill="#eaeaea"/><rect x="0" y="856" width="1740" height="1" fill="#eaeaea"/><rect x="0" y="870" width="1740" height="1" fill="#eaeaea"/><rect x="0" y="877" width="1740" height="1" fill="#eaeaea"/><rect x="0" y="885" width="1740" height="1" fill="#eaeaea"/><rect x="0" y="892" width="1740" height="1" fill="#eaeaea"/><rect x="0" y="899" width="1740" height="1" fill="#eaeaea"/><rect x="0" y="906" width="1740" height="1" fill="#eaeaea"/><rect x="0" y="913" width="1740" height="1" fill="#eaeaea"/><rect x="0" y="928" width="1740" height="1" fill="#eaeaea"/><rect x="0" y="935" width="1740" height="1" fill="#eaeaea"/><rect x="0" y="942" width="1740" height="1" fill="#eaeaea"/><rect x="0" y="949" width="1740" height="1" fill="#eaeaea"/><rect x="57" y="0" width="1" height="955" fill="#cfcfcf"/><rect x="114" y="0" width="1" height="955" fill="#cfcfcf"/><rect x="172" y="0" width="1" height="955" fill="#cfcfcf"/><rect x="229" y="0" width="1" height="955" fill="#cfcfcf"/><rect x="287" y="0" width="1" height="955" fill="#cfcfcf"/><rect x="345" y="0" width="1" height="955" fill="#cfcfcf"/><rect x="402" y="0" width="1" height="955" fill="#cfcfcf"/><rect x="460" y="0" width="1" height="955" fill="#cfcfcf"/><rect x="517" y="0" width="1" height="955" fill="#cfcfcf"/><rect x="575" y="0" width="1" height="955" fill="#cfcfcf"/><rect x="633" y="0" width="1" height="955" fill="#cfcfcf"/><rect x="690" y="0" width="1" height="955" fill="#cfcfcf"/><rect x="748" y="0" width="1" height="955" fill="#cfcfcf"/><rect x="805" y="0" width="1" height="955" fill="#cfcfcf"/><rect x="863" y="0" width="1" height="955" fill="#cfcfcf"/><rect x="921" y="0" width="1" height="955" fill="#cfcfcf"/><rect x="978" y="0" width="1" height="955" fill="#cfcfcf"/><rect x="1036" y="0" width="1" height="955" fill="#cfcfcf"/><rect x="1093" y="0" width="1" height="955" fill="#cfcfcf"/><rect x="1151" y="0" width="1" height="955" fill="#cfcfcf"/><rect x="1209" y="0" width="1" height="955" fill="#cfcfcf"/><rect x="1266" y="0" width="1" height="955" fill="#cfcfcf"/><rect x="1324" y="0" width="1" height="955" fill="#cfcfcf"/><rect x="1381" y="0" width="1" height="955" fill="#cfcfcf"/><rect x="1439" y="0" width="1" height="955" fill="#cfcfcf"/><rect x="1497" y="0" width="1" height="955" fill="#cfcfcf"/><rect x="1554" y="0" width="1" height="955" fill="#cfcfcf"/><rect x="1612" y="0" width="1" height="955" fill="#cfcfcf"/><rect x="1669" y="0" width="1" height="955" fill="#cfcfcf"/><rect x="1727" y="0" width="1" height="955" fill="#cfcfcf"/><rect x="0" y="57" width="1740" height="1" fill="#cfcfcf"/><rect x="0" y="114" width="1740" height="1" fill="#cfcfcf"/><rect x="0" y="172" width="1740" height="1" fill="#cfcfcf"/><rect x="0" y="229" width="1740" height="1" fill="#cfcfcf"/><rect x="0" y="287" width="1740" height="1" fill="#cfcfcf"/><rect x="0" y="345" width="1740" height="1" fill="#cfcfcf"/><rect x="0" y="402" width="1740" height="1" fill="#cfcfcf"/><rect x="0" y="460" width="1740" height="1" fill="#cfcfcf"/><rect x="0" y="517" width="1740" height="1" fill="#cfcfcf"/><rect x="0" y="575" width="1740" height="1" fill="#cfcfcf"/><rect x="0" y="633" width="1740" height="1" fill="#cfcfcf"/><rect x="0" y="690" width="1740" height="1" fill="#cfcfcf"/><rect x="0" y="748" width="1740" height="1" fill="#cfcfcf"/><rect x="0" y="805" width="1740" height="1" fill="#cfcfcf"/><rect x="0" y="863" width="1740" height="1" fill="#cfcfcf"/><rect x="0" y="921" width="1740" height="1" fill="#cfcfcf"/></svg>
<div class="a" style="left:62px;top:119px;width:1773px;height:2px;background:#d6d6d6"></div>
<div class="a" style="left:62px;top:121px;width:1772px;height:17px;background:#f4f4f4"></div>
<div class="a" style="left:62px;top:121px;width:18px;height:987px;background:#f4f4f4"></div>
<div class="a" style="left:62px;top:138px;width:1759px;height:1px;background:#d2d2d2"></div>
<div class="a" style="left:80px;top:121px;width:1px;height:987px;background:#d2d2d2"></div>
<div class="a" style="left:61px;top:119px;width:1px;height:989px;background:#d8d8d8"></div>
<svg style="left:0;top:0" width="2048" height="1152" font-family="Liberation Sans"><rect x="80" y="121" width="1" height="17" fill="#cfcfcf"/><text x="83.5" y="130" font-size="9.5" fill="#7d7d7d">0</text><rect x="87" y="135" width="1" height="3" fill="#c4c4c4"/><rect x="94" y="133" width="1" height="5" fill="#c4c4c4"/><rect x="102" y="135" width="1" height="3" fill="#c4c4c4"/><rect x="109" y="131" width="1" height="7" fill="#c4c4c4"/><rect x="116" y="135" width="1" height="3" fill="#c4c4c4"/><rect x="123" y="133" width="1" height="5" fill="#c4c4c4"/><rect x="130" y="135" width="1" height="3" fill="#c4c4c4"/><rect x="138" y="121" width="1" height="17" fill="#cfcfcf"/><text x="141.5" y="130" font-size="9.5" fill="#7d7d7d">1</text><rect x="145" y="135" width="1" height="3" fill="#c4c4c4"/><rect x="152" y="133" width="1" height="5" fill="#c4c4c4"/><rect x="159" y="135" width="1" height="3" fill="#c4c4c4"/><rect x="166" y="131" width="1" height="7" fill="#c4c4c4"/><rect x="174" y="135" width="1" height="3" fill="#c4c4c4"/><rect x="181" y="133" width="1" height="5" fill="#c4c4c4"/><rect x="188" y="135" width="1" height="3" fill="#c4c4c4"/><rect x="195" y="121" width="1" height="17" fill="#cfcfcf"/><text x="198.5" y="130" font-size="9.5" fill="#7d7d7d">2</text><rect x="202" y="135" width="1" height="3" fill="#c4c4c4"/><rect x="210" y="133" width="1" height="5" fill="#c4c4c4"/><rect x="217" y="135" width="1" height="3" fill="#c4c4c4"/><rect x="224" y="131" width="1" height="7" fill="#c4c4c4"/><rect x="231" y="135" width="1" height="3" fill="#c4c4c4"/><rect x="238" y="133" width="1" height="5" fill="#c4c4c4"/><rect x="246" y="135" width="1" height="3" fill="#c4c4c4"/><rect x="253" y="121" width="1" height="17" fill="#cfcfcf"/><text x="256.5" y="130" font-size="9.5" fill="#7d7d7d">3</text><rect x="260" y="135" width="1" height="3" fill="#c4c4c4"/><rect x="267" y="133" width="1" height="5" fill="#c4c4c4"/><rect x="274" y="135" width="1" height="3" fill="#c4c4c4"/><rect x="282" y="131" width="1" height="7" fill="#c4c4c4"/><rect x="289" y="135" width="1" height="3" fill="#c4c4c4"/><rect x="296" y="133" width="1" height="5" fill="#c4c4c4"/><rect x="303" y="135" width="1" height="3" fill="#c4c4c4"/><rect x="310" y="121" width="1" height="17" fill="#cfcfcf"/><text x="313.5" y="130" font-size="9.5" fill="#7d7d7d">4</text><rect x="318" y="135" width="1" height="3" fill="#c4c4c4"/><rect x="325" y="133" width="1" height="5" fill="#c4c4c4"/><rect x="332" y="135" width="1" height="3" fill="#c4c4c4"/><rect x="339" y="131" width="1" height="7" fill="#c4c4c4"/><rect x="346" y="135" width="1" height="3" fill="#c4c4c4"/><rect x="354" y="133" width="1" height="5" fill="#c4c4c4"/><rect x="361" y="135" width="1" height="3" fill="#c4c4c4"/><rect x="368" y="121" width="1" height="17" fill="#cfcfcf"/><text x="371.5" y="130" font-size="9.5" fill="#7d7d7d">5</text><rect x="375" y="135" width="1" height="3" fill="#c4c4c4"/><rect x="382" y="133" width="1" height="5" fill="#c4c4c4"/><rect x="390" y="135" width="1" height="3" fill="#c4c4c4"/><rect x="397" y="131" width="1" height="7" fill="#c4c4c4"/><rect x="404" y="135" width="1" height="3" fill="#c4c4c4"/><rect x="411" y="133" width="1" height="5" fill="#c4c4c4"/><rect x="418" y="135" width="1" height="3" fill="#c4c4c4"/><rect x="426" y="121" width="1" height="17" fill="#cfcfcf"/><text x="429.5" y="130" font-size="9.5" fill="#7d7d7d">6</text><rect x="433" y="135" width="1" height="3" fill="#c4c4c4"/><rect x="440" y="133" width="1" height="5" fill="#c4c4c4"/><rect x="447" y="135" width="1" height="3" fill="#c4c4c4"/><rect x="454" y="131" width="1" height="7" fill="#c4c4c4"/><rect x="462" y="135" width="1" height="3" fill="#c4c4c4"/><rect x="469" y="133" width="1" height="5" fill="#c4c4c4"/><rect x="476" y="135" width="1" height="3" fill="#c4c4c4"/><rect x="483" y="121" width="1" height="17" fill="#cfcfcf"/><text x="486.5" y="130" font-size="9.5" fill="#7d7d7d">7</text><rect x="490" y="135" width="1" height="3" fill="#c4c4c4"/><rect x="498" y="133" width="1" height="5" fill="#c4c4c4"/><rect x="505" y="135" width="1" height="3" fill="#c4c4c4"/><rect x="512" y="131" width="1" height="7" fill="#c4c4c4"/><rect x="519" y="135" width="1" height="3" fill="#c4c4c4"/><rect x="526" y="133" width="1" height="5" fill="#c4c4c4"/><rect x="534" y="135" width="1" height="3" fill="#c4c4c4"/><rect x="541" y="121" width="1" height="17" fill="#cfcfcf"/><text x="544.5" y="130" font-size="9.5" fill="#7d7d7d">8</text><rect x="548" y="135" width="1" height="3" fill="#c4c4c4"/><rect x="555" y="133" width="1" height="5" fill="#c4c4c4"/><rect x="562" y="135" width="1" height="3" fill="#c4c4c4"/><rect x="570" y="131" width="1" height="7" fill="#c4c4c4"/><rect x="577" y="135" width="1" height="3" fill="#c4c4c4"/><rect x="584" y="133" width="1" height="5" fill="#c4c4c4"/><rect x="591" y="135" width="1" height="3" fill="#c4c4c4"/><rect x="598" y="121" width="1" height="17" fill="#cfcfcf"/><text x="601.5" y="130" font-size="9.5" fill="#7d7d7d">9</text><rect x="606" y="135" width="1" height="3" fill="#c4c4c4"/><rect x="613" y="133" width="1" height="5" fill="#c4c4c4"/><rect x="620" y="135" width="1" height="3" fill="#c4c4c4"/><rect x="627" y="131" width="1" height="7" fill="#c4c4c4"/><rect x="634" y="135" width="1" height="3" fill="#c4c4c4"/><rect x="642" y="133" width="1" height="5" fill="#c4c4c4"/><rect x="649" y="135" width="1" height="3" fill="#c4c4c4"/><rect x="656" y="121" width="1" height="17" fill="#cfcfcf"/><text x="659.5" y="130" font-size="9.5" fill="#7d7d7d">10</text><rect x="663" y="135" width="1" height="3" fill="#c4c4c4"/><rect x="670" y="133" width="1" height="5" fill="#c4c4c4"/><rect x="678" y="135" width="1" height="3" fill="#c4c4c4"/><rect x="685" y="131" width="1" height="7" fill="#c4c4c4"/><rect x="692" y="135" width="1" height="3" fill="#c4c4c4"/><rect x="699" y="133" width="1" height="5" fill="#c4c4c4"/><rect x="706" y="135" width="1" height="3" fill="#c4c4c4"/><rect x="714" y="121" width="1" height="17" fill="#cfcfcf"/><text x="717.5" y="130" font-size="9.5" fill="#7d7d7d">11</text><rect x="721" y="135" width="1" height="3" fill="#c4c4c4"/><rect x="728" y="133" width="1" height="5" fill="#c4c4c4"/><rect x="735" y="135" width="1" height="3" fill="#c4c4c4"/><rect x="742" y="131" width="1" height="7" fill="#c4c4c4"/><rect x="750" y="135" width="1" height="3" fill="#c4c4c4"/><rect x="757" y="133" width="1" height="5" fill="#c4c4c4"/><rect x="764" y="135" width="1" height="3" fill="#c4c4c4"/><rect x="771" y="121" width="1" height="17" fill="#cfcfcf"/><text x="774.5" y="130" font-size="9.5" fill="#7d7d7d">12</text><rect x="778" y="135" width="1" height="3" fill="#c4c4c4"/><rect x="786" y="133" width="1" height="5" fill="#c4c4c4"/><rect x="793" y="135" width="1" height="3" fill="#c4c4c4"/><rect x="800" y="131" width="1" height="7" fill="#c4c4c4"/><rect x="807" y="135" width="1" height="3" fill="#c4c4c4"/><rect x="814" y="133" width="1" height="5" fill="#c4c4c4"/><rect x="822" y="135" width="1" height="3" fill="#c4c4c4"/><rect x="829" y="121" width="1" height="17" fill="#cfcfcf"/><text x="832.5" y="130" font-size="9.5" fill="#7d7d7d">13</text><rect x="836" y="135" width="1" height="3" fill="#c4c4c4"/><rect x="843" y="133" width="1" height="5" fill="#c4c4c4"/><rect x="850" y="135" width="1" height="3" fill="#c4c4c4"/><rect x="858" y="131" width="1" height="7" fill="#c4c4c4"/><rect x="865" y="135" width="1" height="3" fill="#c4c4c4"/><rect x="872" y="133" width="1" height="5" fill="#c4c4c4"/><rect x="879" y="135" width="1" height="3" fill="#c4c4c4"/><rect x="886" y="121" width="1" height="17" fill="#cfcfcf"/><text x="889.5" y="130" font-size="9.5" fill="#7d7d7d">14</text><rect x="894" y="135" width="1" height="3" fill="#c4c4c4"/><rect x="901" y="133" width="1" height="5" fill="#c4c4c4"/><rect x="908" y="135" width="1" height="3" fill="#c4c4c4"/><rect x="915" y="131" width="1" height="7" fill="#c4c4c4"/><rect x="922" y="135" width="1" height="3" fill="#c4c4c4"/><rect x="930" y="133" width="1" height="5" fill="#c4c4c4"/><rect x="937" y="135" width="1" height="3" fill="#c4c4c4"/><rect x="944" y="121" width="1" height="17" fill="#cfcfcf"/><text x="947.5" y="130" font-size="9.5" fill="#7d7d7d">15</text><rect x="951" y="135" width="1" height="3" fill="#c4c4c4"/><rect x="958" y="133" width="1" height="5" fill="#c4c4c4"/><rect x="966" y="135" width="1" height="3" fill="#c4c4c4"/><rect x="973" y="131" width="1" height="7" fill="#c4c4c4"/><rect x="980" y="135" width="1" height="3" fill="#c4c4c4"/><rect x="987" y="133" width="1" height="5" fill="#c4c4c4"/><rect x="994" y="135" width="1" height="3" fill="#c4c4c4"/><rect x="1002" y="121" width="1" height="17" fill="#cfcfcf"/><text x="1005.5" y="130" font-size="9.5" fill="#7d7d7d">16</text><rect x="1009" y="135" width="1" height="3" fill="#c4c4c4"/><rect x="1016" y="133" width="1" height="5" fill="#c4c4c4"/><rect x="1023" y="135" width="1" height="3" fill="#c4c4c4"/><rect x="1030" y="131" width="1" height="7" fill="#c4c4c4"/><rect x="1038" y="135" width="1" height="3" fill="#c4c4c4"/><rect x="1045" y="133" width="1" height="5" fill="#c4c4c4"/><rect x="1052" y="135" width="1" height="3" fill="#c4c4c4"/><rect x="1059" y="121" width="1" height="17" fill="#cfcfcf"/><text x="1062.5" y="130" font-size="9.5" fill="#7d7d7d">17</text><rect x="1066" y="135" width="1" height="3" fill="#c4c4c4"/><rect x="1074" y="133" width="1" height="5" fill="#c4c4c4"/><rect x="1081" y="135" width="1" height="3" fill="#c4c4c4"/><rect x="1088" y="131" width="1" height="7" fill="#c4c4c4"/><rect x="1095" y="135" width="1" height="3" fill="#c4c4c4"/><rect x="1102" y="133" width="1" height="5" fill="#c4c4c4"/><rect x="1110" y="135" width="1" height="3" fill="#c4c4c4"/><rect x="1117" y="121" width="1" height="17" fill="#cfcfcf"/><text x="1120.5" y="130" font-size="9.5" fill="#7d7d7d">18</text><rect x="1124" y="135" width="1" height="3" fill="#c4c4c4"/><rect x="1131" y="133" width="1" height="5" fill="#c4c4c4"/><rect x="1138" y="135" width="1" height="3" fill="#c4c4c4"/><rect x="1146" y="131" width="1" height="7" fill="#c4c4c4"/><rect x="1153" y="135" width="1" height="3" fill="#c4c4c4"/><rect x="1160" y="133" width="1" height="5" fill="#c4c4c4"/><rect x="1167" y="135" width="1" height="3" fill="#c4c4c4"/><rect x="1174" y="121" width="1" height="17" fill="#cfcfcf"/><text x="1177.5" y="130" font-size="9.5" fill="#7d7d7d">19</text><rect x="1182" y="135" width="1" height="3" fill="#c4c4c4"/><rect x="1189" y="133" width="1" height="5" fill="#c4c4c4"/><rect x="1196" y="135" width="1" height="3" fill="#c4c4c4"/><rect x="1203" y="131" width="1" height="7" fill="#c4c4c4"/><rect x="1210" y="135" width="1" height="3" fill="#c4c4c4"/><rect x="1218" y="133" width="1" height="5" fill="#c4c4c4"/><rect x="1225" y="135" width="1" height="3" fill="#c4c4c4"/><rect x="1232" y="121" width="1" height="17" fill="#cfcfcf"/><text x="1235.5" y="130" font-size="9.5" fill="#7d7d7d">20</text><rect x="1239" y="135" width="1" height="3" fill="#c4c4c4"/><rect x="1246" y="133" width="1" height="5" fill="#c4c4c4"/><rect x="1254" y="135" width="1" height="3" fill="#c4c4c4"/><rect x="1261" y="131" width="1" height="7" fill="#c4c4c4"/><rect x="1268" y="135" width="1" height="3" fill="#c4c4c4"/><rect x="1275" y="133" width="1" height="5" fill="#c4c4c4"/><rect x="1282" y="135" width="1" height="3" fill="#c4c4c4"/><rect x="1290" y="121" width="1" height="17" fill="#cfcfcf"/><text x="1293.5" y="130" font-size="9.5" fill="#7d7d7d">21</text><rect x="1297" y="135" width="1" height="3" fill="#c4c4c4"/><rect x="1304" y="133" width="1" height="5" fill="#c4c4c4"/><rect x="1311" y="135" width="1" height="3" fill="#c4c4c4"/><rect x="1318" y="131" width="1" height="7" fill="#c4c4c4"/><rect x="1326" y="135" width="1" height="3" fill="#c4c4c4"/><rect x="1333" y="133" width="1" height="5" fill="#c4c4c4"/><rect x="1340" y="135" width="1" height="3" fill="#c4c4c4"/><rect x="1347" y="121" width="1" height="17" fill="#cfcfcf"/><text x="1350.5" y="130" font-size="9.5" fill="#7d7d7d">22</text><rect x="1354" y="135" width="1" height="3" fill="#c4c4c4"/><rect x="1362" y="133" width="1" height="5" fill="#c4c4c4"/><rect x="1369" y="135" width="1" height="3" fill="#c4c4c4"/><rect x="1376" y="131" width="1" height="7" fill="#c4c4c4"/><rect x="1383" y="135" width="1" height="3" fill="#c4c4c4"/><rect x="1390" y="133" width="1" height="5" fill="#c4c4c4"/><rect x="1398" y="135" width="1" height="3" fill="#c4c4c4"/><rect x="1405" y="121" width="1" height="17" fill="#cfcfcf"/><text x="1408.5" y="130" font-size="9.5" fill="#7d7d7d">23</text><rect x="1412" y="135" width="1" height="3" fill="#c4c4c4"/><rect x="1419" y="133" width="1" height="5" fill="#c4c4c4"/><rect x="1426" y="135" width="1" height="3" fill="#c4c4c4"/><rect x="1434" y="131" width="1" height="7" fill="#c4c4c4"/><rect x="1441" y="135" width="1" height="3" fill="#c4c4c4"/><rect x="1448" y="133" width="1" height="5" fill="#c4c4c4"/><rect x="1455" y="135" width="1" height="3" fill="#c4c4c4"/><rect x="1462" y="121" width="1" height="17" fill="#cfcfcf"/><text x="1465.5" y="130" font-size="9.5" fill="#7d7d7d">24</text><rect x="1470" y="135" width="1" height="3" fill="#c4c4c4"/><rect x="1477" y="133" width="1" height="5" fill="#c4c4c4"/><rect x="1484" y="135" width="1" height="3" fill="#c4c4c4"/><rect x="1491" y="131" width="1" height="7" fill="#c4c4c4"/><rect x="1498" y="135" width="1" height="3" fill="#c4c4c4"/><rect x="1506" y="133" width="1" height="5" fill="#c4c4c4"/><rect x="1513" y="135" width="1" height="3" fill="#c4c4c4"/><rect x="1520" y="121" width="1" height="17" fill="#cfcfcf"/><text x="1523.5" y="130" font-size="9.5" fill="#7d7d7d">25</text><rect x="1527" y="135" width="1" height="3" fill="#c4c4c4"/><rect x="1534" y="133" width="1" height="5" fill="#c4c4c4"/><rect x="1542" y="135" width="1" height="3" fill="#c4c4c4"/><rect x="1549" y="131" width="1" height="7" fill="#c4c4c4"/><rect x="1556" y="135" width="1" height="3" fill="#c4c4c4"/><rect x="1563" y="133" width="1" height="5" fill="#c4c4c4"/><rect x="1570" y="135" width="1" height="3" fill="#c4c4c4"/><rect x="1578" y="121" width="1" height="17" fill="#cfcfcf"/><text x="1581.5" y="130" font-size="9.5" fill="#7d7d7d">26</text><rect x="1585" y="135" width="1" height="3" fill="#c4c4c4"/><rect x="1592" y="133" width="1" height="5" fill="#c4c4c4"/><rect x="1599" y="135" width="1" height="3" fill="#c4c4c4"/><rect x="1606" y="131" width="1" height="7" fill="#c4c4c4"/><rect x="1614" y="135" width="1" height="3" fill="#c4c4c4"/><rect x="1621" y="133" width="1" height="5" fill="#c4c4c4"/><rect x="1628" y="135" width="1" height="3" fill="#c4c4c4"/><rect x="1635" y="121" width="1" height="17" fill="#cfcfcf"/><text x="1638.5" y="130" font-size="9.5" fill="#7d7d7d">27</text><rect x="1642" y="135" width="1" height="3" fill="#c4c4c4"/><rect x="1650" y="133" width="1" height="5" fill="#c4c4c4"/><rect x="1657" y="135" width="1" height="3" fill="#c4c4c4"/><rect x="1664" y="131" width="1" height="7" fill="#c4c4c4"/><rect x="1671" y="135" width="1" height="3" fill="#c4c4c4"/><rect x="1678" y="133" width="1" height="5" fill="#c4c4c4"/><rect x="1686" y="135" width="1" height="3" fill="#c4c4c4"/><rect x="1693" y="121" width="1" height="17" fill="#cfcfcf"/><text x="1696.5" y="130" font-size="9.5" fill="#7d7d7d">28</text><rect x="1700" y="135" width="1" height="3" fill="#c4c4c4"/><rect x="1707" y="133" width="1" height="5" fill="#c4c4c4"/><rect x="1714" y="135" width="1" height="3" fill="#c4c4c4"/><rect x="1722" y="131" width="1" height="7" fill="#c4c4c4"/><rect x="1729" y="135" width="1" height="3" fill="#c4c4c4"/><rect x="1736" y="133" width="1" height="5" fill="#c4c4c4"/><rect x="1743" y="135" width="1" height="3" fill="#c4c4c4"/><rect x="1750" y="121" width="1" height="17" fill="#cfcfcf"/><text x="1753.5" y="130" font-size="9.5" fill="#7d7d7d">29</text><rect x="1758" y="135" width="1" height="3" fill="#c4c4c4"/><rect x="1765" y="133" width="1" height="5" fill="#c4c4c4"/><rect x="1772" y="135" width="1" height="3" fill="#c4c4c4"/><rect x="1779" y="131" width="1" height="7" fill="#c4c4c4"/><rect x="1786" y="135" width="1" height="3" fill="#c4c4c4"/><rect x="1794" y="133" width="1" height="5" fill="#c4c4c4"/><rect x="1801" y="135" width="1" height="3" fill="#c4c4c4"/><rect x="1808" y="121" width="1" height="17" fill="#cfcfcf"/><text x="1811.5" y="130" font-size="9.5" fill="#7d7d7d">30</text><rect x="1815" y="135" width="1" height="3" fill="#c4c4c4"/><rect x="1822" y="133" width="1" height="5" fill="#c4c4c4"/><rect x="1830" y="135" width="1" height="3" fill="#c4c4c4"/><rect x="62" y="138" width="18" height="1" fill="#cfcfcf"/><text transform="translate(72,141.5) rotate(-90)" font-size="9.5" fill="#7d7d7d" text-anchor="end">0</text><rect x="77" y="145" width="3" height="1" fill="#c4c4c4"/><rect x="75" y="152" width="5" height="1" fill="#c4c4c4"/><rect x="77" y="160" width="3" height="1" fill="#c4c4c4"/><rect x="73" y="167" width="7" height="1" fill="#c4c4c4"/><rect x="77" y="174" width="3" height="1" fill="#c4c4c4"/><rect x="75" y="181" width="5" height="1" fill="#c4c4c4"/><rect x="77" y="188" width="3" height="1" fill="#c4c4c4"/><rect x="62" y="196" width="18" height="1" fill="#cfcfcf"/><text transform="translate(72,199.5) rotate(-90)" font-size="9.5" fill="#7d7d7d" text-anchor="end">1</text><rect x="77" y="203" width="3" height="1" fill="#c4c4c4"/><rect x="75" y="210" width="5" height="1" fill="#c4c4c4"/><rect x="77" y="217" width="3" height="1" fill="#c4c4c4"/><rect x="73" y="224" width="7" height="1" fill="#c4c4c4"/><rect x="77" y="232" width="3" height="1" fill="#c4c4c4"/><rect x="75" y="239" width="5" height="1" fill="#c4c4c4"/><rect x="77" y="246" width="3" height="1" fill="#c4c4c4"/><rect x="62" y="253" width="18" height="1" fill="#cfcfcf"/><text transform="translate(72,256.5) rotate(-90)" font-size="9.5" fill="#7d7d7d" text-anchor="end">2</text><rect x="77" y="260" width="3" height="1" fill="#c4c4c4"/><rect x="75" y="268" width="5" height="1" fill="#c4c4c4"/><rect x="77" y="275" width="3" height="1" fill="#c4c4c4"/><rect x="73" y="282" width="7" height="1" fill="#c4c4c4"/><rect x="77" y="289" width="3" height="1" fill="#c4c4c4"/><rect x="75" y="296" width="5" height="1" fill="#c4c4c4"/><rect x="77" y="304" width="3" height="1" fill="#c4c4c4"/><rect x="62" y="311" width="18" height="1" fill="#cfcfcf"/><text transform="translate(72,314.5) rotate(-90)" font-size="9.5" fill="#7d7d7d" text-anchor="end">3</text><rect x="77" y="318" width="3" height="1" fill="#c4c4c4"/><rect x="75" y="325" width="5" height="1" fill="#c4c4c4"/><rect x="77" y="332" width="3" height="1" fill="#c4c4c4"/><rect x="73" y="340" width="7" height="1" fill="#c4c4c4"/><rect x="77" y="347" width="3" height="1" fill="#c4c4c4"/><rect x="75" y="354" width="5" height="1" fill="#c4c4c4"/><rect x="77" y="361" width="3" height="1" fill="#c4c4c4"/><rect x="62" y="368" width="18" height="1" fill="#cfcfcf"/><text transform="translate(72,371.5) rotate(-90)" font-size="9.5" fill="#7d7d7d" text-anchor="end">4</text><rect x="77" y="376" width="3" height="1" fill="#c4c4c4"/><rect x="75" y="383" width="5" height="1" fill="#c4c4c4"/><rect x="77" y="390" width="3" height="1" fill="#c4c4c4"/><rect x="73" y="397" width="7" height="1" fill="#c4c4c4"/><rect x="77" y="404" width="3" height="1" fill="#c4c4c4"/><rect x="75" y="412" width="5" height="1" fill="#c4c4c4"/><rect x="77" y="419" width="3" height="1" fill="#c4c4c4"/><rect x="62" y="426" width="18" height="1" fill="#cfcfcf"/><text transform="translate(72,429.5) rotate(-90)" font-size="9.5" fill="#7d7d7d" text-anchor="end">5</text><rect x="77" y="433" width="3" height="1" fill="#c4c4c4"/><rect x="75" y="440" width="5" height="1" fill="#c4c4c4"/><rect x="77" y="448" width="3" height="1" fill="#c4c4c4"/><rect x="73" y="455" width="7" height="1" fill="#c4c4c4"/><rect x="77" y="462" width="3" height="1" fill="#c4c4c4"/><rect x="75" y="469" width="5" height="1" fill="#c4c4c4"/><rect x="77" y="476" width="3" height="1" fill="#c4c4c4"/><rect x="62" y="484" width="18" height="1" fill="#cfcfcf"/><text transform="translate(72,487.5) rotate(-90)" font-size="9.5" fill="#7d7d7d" text-anchor="end">6</text><rect x="77" y="491" width="3" height="1" fill="#c4c4c4"/><rect x="75" y="498" width="5" height="1" fill="#c4c4c4"/><rect x="77" y="505" width="3" height="1" fill="#c4c4c4"/><rect x="73" y="512" width="7" height="1" fill="#c4c4c4"/><rect x="77" y="520" width="3" height="1" fill="#c4c4c4"/><rect x="75" y="527" width="5" height="1" fill="#c4c4c4"/><rect x="77" y="534" width="3" height="1" fill="#c4c4c4"/><rect x="62" y="541" width="18" height="1" fill="#cfcfcf"/><text transform="translate(72,544.5) rotate(-90)" font-size="9.5" fill="#7d7d7d" text-anchor="end">7</text><rect x="77" y="548" width="3" height="1" fill="#c4c4c4"/><rect x="75" y="556" width="5" height="1" fill="#c4c4c4"/><rect x="77" y="563" width="3" height="1" fill="#c4c4c4"/><rect x="73" y="570" width="7" height="1" fill="#c4c4c4"/><rect x="77" y="577" width="3" height="1" fill="#c4c4c4"/><rect x="75" y="584" width="5" height="1" fill="#c4c4c4"/><rect x="77" y="592" width="3" height="1" fill="#c4c4c4"/><rect x="62" y="599" width="18" height="1" fill="#cfcfcf"/><text transform="translate(72,602.5) rotate(-90)" font-size="9.5" fill="#7d7d7d" text-anchor="end">8</text><rect x="77" y="606" width="3" height="1" fill="#c4c4c4"/><rect x="75" y="613" width="5" height="1" fill="#c4c4c4"/><rect x="77" y="620" width="3" height="1" fill="#c4c4c4"/><rect x="73" y="628" width="7" height="1" fill="#c4c4c4"/><rect x="77" y="635" width="3" height="1" fill="#c4c4c4"/><rect x="75" y="642" width="5" height="1" fill="#c4c4c4"/><rect x="77" y="649" width="3" height="1" fill="#c4c4c4"/><rect x="62" y="656" width="18" height="1" fill="#cfcfcf"/><text transform="translate(72,659.5) rotate(-90)" font-size="9.5" fill="#7d7d7d" text-anchor="end">9</text><rect x="77" y="664" width="3" height="1" fill="#c4c4c4"/><rect x="75" y="671" width="5" height="1" fill="#c4c4c4"/><rect x="77" y="678" width="3" height="1" fill="#c4c4c4"/><rect x="73" y="685" width="7" height="1" fill="#c4c4c4"/><rect x="77" y="692" width="3" height="1" fill="#c4c4c4"/><rect x="75" y="700" width="5" height="1" fill="#c4c4c4"/><rect x="77" y="707" width="3" height="1" fill="#c4c4c4"/><rect x="62" y="714" width="18" height="1" fill="#cfcfcf"/><text transform="translate(72,717.5) rotate(-90)" font-size="9.5" fill="#7d7d7d" text-anchor="end">10</text><rect x="77" y="721" width="3" height="1" fill="#c4c4c4"/><rect x="75" y="728" width="5" height="1" fill="#c4c4c4"/><rect x="77" y="736" width="3" height="1" fill="#c4c4c4"/><rect x="73" y="743" width="7" height="1" fill="#c4c4c4"/><rect x="77" y="750" width="3" height="1" fill="#c4c4c4"/><rect x="75" y="757" width="5" height="1" fill="#c4c4c4"/><rect x="77" y="764" width="3" height="1" fill="#c4c4c4"/><rect x="62" y="772" width="18" height="1" fill="#cfcfcf"/><text transform="translate(72,775.5) rotate(-90)" font-size="9.5" fill="#7d7d7d" text-anchor="end">11</text><rect x="77" y="779" width="3" height="1" fill="#c4c4c4"/><rect x="75" y="786" width="5" height="1" fill="#c4c4c4"/><rect x="77" y="793" width="3" height="1" fill="#c4c4c4"/><rect x="73" y="800" width="7" height="1" fill="#c4c4c4"/><rect x="77" y="808" width="3" height="1" fill="#c4c4c4"/><rect x="75" y="815" width="5" height="1" fill="#c4c4c4"/><rect x="77" y="822" width="3" height="1" fill="#c4c4c4"/><rect x="62" y="829" width="18" height="1" fill="#cfcfcf"/><text transform="translate(72,832.5) rotate(-90)" font-size="9.5" fill="#7d7d7d" text-anchor="end">12</text><rect x="77" y="836" width="3" height="1" fill="#c4c4c4"/><rect x="75" y="844" width="5" height="1" fill="#c4c4c4"/><rect x="77" y="851" width="3" height="1" fill="#c4c4c4"/><rect x="73" y="858" width="7" height="1" fill="#c4c4c4"/><rect x="77" y="865" width="3" height="1" fill="#c4c4c4"/><rect x="75" y="872" width="5" height="1" fill="#c4c4c4"/><rect x="77" y="880" width="3" height="1" fill="#c4c4c4"/><rect x="62" y="887" width="18" height="1" fill="#cfcfcf"/><text transform="translate(72,890.5) rotate(-90)" font-size="9.5" fill="#7d7d7d" text-anchor="end">13</text><rect x="77" y="894" width="3" height="1" fill="#c4c4c4"/><rect x="75" y="901" width="5" height="1" fill="#c4c4c4"/><rect x="77" y="908" width="3" height="1" fill="#c4c4c4"/><rect x="73" y="916" width="7" height="1" fill="#c4c4c4"/><rect x="77" y="923" width="3" height="1" fill="#c4c4c4"/><rect x="75" y="930" width="5" height="1" fill="#c4c4c4"/><rect x="77" y="937" width="3" height="1" fill="#c4c4c4"/><rect x="62" y="944" width="18" height="1" fill="#cfcfcf"/><text transform="translate(72,947.5) rotate(-90)" font-size="9.5" fill="#7d7d7d" text-anchor="end">14</text><rect x="77" y="952" width="3" height="1" fill="#c4c4c4"/><rect x="75" y="959" width="5" height="1" fill="#c4c4c4"/><rect x="77" y="966" width="3" height="1" fill="#c4c4c4"/><rect x="73" y="973" width="7" height="1" fill="#c4c4c4"/><rect x="77" y="980" width="3" height="1" fill="#c4c4c4"/><rect x="75" y="988" width="5" height="1" fill="#c4c4c4"/><rect x="77" y="995" width="3" height="1" fill="#c4c4c4"/><rect x="62" y="1002" width="18" height="1" fill="#cfcfcf"/><text transform="translate(72,1005.5) rotate(-90)" font-size="9.5" fill="#7d7d7d" text-anchor="end">15</text><rect x="77" y="1009" width="3" height="1" fill="#c4c4c4"/><rect x="75" y="1016" width="5" height="1" fill="#c4c4c4"/><rect x="77" y="1024" width="3" height="1" fill="#c4c4c4"/><rect x="73" y="1031" width="7" height="1" fill="#c4c4c4"/><rect x="77" y="1038" width="3" height="1" fill="#c4c4c4"/><rect x="75" y="1045" width="5" height="1" fill="#c4c4c4"/><rect x="77" y="1052" width="3" height="1" fill="#c4c4c4"/><rect x="62" y="1060" width="18" height="1" fill="#cfcfcf"/><text transform="translate(72,1063.5) rotate(-90)" font-size="9.5" fill="#7d7d7d" text-anchor="end">16</text><rect x="77" y="1067" width="3" height="1" fill="#c4c4c4"/><rect x="75" y="1074" width="5" height="1" fill="#c4c4c4"/><rect x="77" y="1081" width="3" height="1" fill="#c4c4c4"/><rect x="73" y="1088" width="7" height="1" fill="#c4c4c4"/><rect x="77" y="1096" width="3" height="1" fill="#c4c4c4"/><rect x="75" y="1103" width="5" height="1" fill="#c4c4c4"/></svg>
<div class="a" style="left:1821px;top:139px;width:13px;height:969px;background:#f8f8f8;border-left:1px solid #ececec"></div>
<div class="a" style="left:1821px;top:139px;width:13px;height:54px;background:#c1c1c1"></div>
<div class="a" style="left:81px;top:1094px;width:1740px;height:14px;background:#f8f8f8;border-top:1px solid #ececec"></div>
<div class="a" style="left:81px;top:1094px;width:185px;height:14px;background:#c1c1c1"></div>
<div class="a" style="left:89px;top:1062px;width:87px;height:26px;border-radius:13px;background:rgba(240,240,240,0.6)"></div>
<div class="a" style="left:91px;top:1067px;width:16px;height:16px;border-radius:50%;border:1px solid #ddd"></div>
<div class="a" style="left:95px;top:1075px;width:8px;height:1px;background:#ddd"></div>
<div class="a" style="left:157px;top:1067px;width:16px;height:16px;border-radius:50%;border:1px solid #ddd"></div>
<div class="a" style="left:161px;top:1075px;width:8px;height:1px;background:#ddd"></div>
<div class="a" style="left:164px;top:1071px;width:1px;height:8px;background:#ddd"></div>
<div class="t" style="left:111px;top:1068px;font-size:15px;color:#d0d0d0">100%</div>
<svg style="left:0;top:0" width="2048" height="1152" font-family="Liberation Serif">
<defs>
<mask id="mL" maskUnits="userSpaceOnUse" x="0" y="0" width="700" height="600"><rect x="0" y="0" width="700" height="600" fill="#fff"/><g fill="#000">
<path d="M171.3 200.5V214.7 M181.3 214.7L187.95000000000002 200.5L194.60000000000002 214.7 M183.70000000000002 208.39999999999998H192.20000000000002 M199.5 214.7V200.5L207.1 214.7L214.7 200.5V214.7 M164.2 262.5V276.7 M174.2 276.7L180.85 262.5L187.5 276.7 M176.6 270.4H185.1 M192.39999999999998 276.7V262.5L199.99999999999997 276.7L207.59999999999997 262.5V276.7 M177.6 328.90000000000003V343.1 M187.6 343.1L194.25 328.90000000000003L200.9 343.1 M190.0 336.8H198.5 M205.79999999999998 343.1V328.90000000000003L213.39999999999998 343.1L220.99999999999997 328.90000000000003V343.1" fill="none" stroke="#000" stroke-width="1.45"/>
<path d="M146.0 233.5C146.8 231.8 149.1 226.5 150.8 223.3C152.5 220.2 154.9 216.2 156.2 214.6C157.5 213.0 157.8 213.2 158.4 213.5C159.0 213.8 160.1 214.8 159.9 216.4C159.7 218.0 158.3 221.1 157.0 223.3C155.7 225.6 153.7 228.1 151.9 229.9C150.1 231.7 147.8 232.5 146.4 234.3C145.1 236.1 144.0 239.0 143.8 240.8C143.6 242.6 144.3 244.6 145.3 245.2C146.3 245.8 148.2 245.3 149.7 244.5C151.2 243.7 153.0 241.7 154.4 240.1C155.8 238.5 157.0 236.6 158.0 235.0C159.0 233.4 159.7 231.4 160.6 230.6C161.5 229.8 162.7 229.4 163.5 229.9C164.3 230.4 166.0 231.6 165.7 233.5C165.4 235.4 162.9 240.5 161.7 241.6C160.5 242.7 158.7 241.4 158.4 240.1C158.1 238.8 159.4 235.0 159.9 233.5C160.4 232.0 160.7 231.8 161.7 231.3C162.7 230.9 164.5 230.9 166.0 230.8C167.5 230.7 169.4 230.8 170.8 230.6C172.2 230.4 174.1 229.4 174.5 229.9C174.9 230.4 173.4 231.2 173.0 233.5C172.6 235.8 171.8 242.1 171.9 243.7C172.0 245.3 172.4 244.2 173.7 243.0C175.0 241.8 178.2 238.7 179.9 236.4C181.6 234.1 183.1 229.8 184.0 229.2C184.9 228.6 184.7 232.0 185.4 232.8C186.1 233.6 187.2 233.7 188.0 233.8C188.8 233.9 188.8 233.9 190.3 233.5C191.8 233.1 195.5 232.0 196.9 231.3C198.3 230.6 199.0 229.9 199.0 229.2C199.0 228.5 197.9 227.4 196.9 227.3C195.9 227.2 194.4 227.4 193.2 228.4C192.0 229.4 190.6 231.7 189.9 233.5C189.2 235.3 188.8 237.5 189.2 239.0C189.6 240.5 190.7 241.9 192.1 242.3C193.5 242.7 195.8 242.3 197.6 241.6C199.4 240.9 201.6 239.2 203.1 237.9C204.6 236.6 205.4 234.8 206.7 233.5C208.0 232.2 209.5 230.4 210.7 229.9C211.8 229.4 213.1 230.5 213.6 230.6 M213.6 230.6C212.8 230.8 209.8 231.1 208.5 232.1C207.2 233.1 206.0 234.9 205.6 236.4C205.2 237.9 205.6 240.2 206.3 240.8C207.0 241.4 208.5 241.2 210.0 240.1C211.5 239.0 214.2 235.3 215.1 234.3 M228.2 211.6C225.9 217.2 216.7 239.6 214.4 245.2" fill="none" stroke="#000" stroke-width="2.0" stroke-linecap="round" stroke-linejoin="round"/>
<path d="M123.9 295.3C124.9 294.8 127.8 293.8 130.0 292.5C132.2 291.2 136.4 289.1 136.9 287.8C137.4 286.6 134.9 284.1 132.8 285.0C130.8 285.9 125.5 290.9 124.6 293.3C123.7 295.7 125.7 298.7 127.3 299.4C128.9 300.1 132.2 298.9 134.1 297.4C136.0 295.9 138.0 290.3 138.9 290.5C139.8 290.7 139.5 297.3 139.6 298.7 M139.6 298.7C140.1 297.3 140.7 292.3 142.3 290.5C143.9 288.7 147.4 286.9 149.2 287.8C151.0 288.7 152.2 294.2 153.3 296.0C154.4 297.8 154.4 299.8 156.0 298.7C157.6 297.6 161.7 290.8 162.8 289.2 M166.3 287.8C165.3 288.9 160.4 292.7 160.1 294.6C159.8 296.5 162.6 299.6 164.2 299.4C165.8 299.2 169.3 295.2 169.7 293.3C170.0 291.4 166.1 288.3 166.3 287.8C166.5 287.3 169.5 290.3 171.0 290.5C172.5 290.7 174.3 288.1 175.2 289.2C176.1 290.3 175.6 295.8 176.5 297.4C177.4 299.0 179.2 300.1 180.6 298.7C182.0 297.3 183.8 289.4 184.7 289.2C185.6 289.0 185.2 295.6 186.1 297.4C187.0 299.2 188.2 300.7 190.2 300.1C192.2 299.5 196.7 295.0 198.0 294.0 M203.9 287.8C203.0 288.7 198.9 291.7 198.4 293.3C197.9 294.9 199.7 298.1 201.1 297.4C202.5 296.7 205.7 290.6 206.6 289.2 M206.6 289.2C206.4 291.5 206.8 298.2 205.2 302.8C203.6 307.4 198.8 314.3 197.0 316.5C195.2 318.7 193.8 317.5 194.3 315.8C194.8 314.1 197.1 308.9 199.8 306.3C202.5 303.7 207.2 302.3 210.7 300.1C214.2 297.9 217.6 296.5 221.0 293.3C224.4 290.1 229.0 284.8 231.2 281.0C233.3 277.2 233.9 272.1 233.9 270.7C233.9 269.3 232.8 270.9 231.2 272.8C229.6 274.7 226.2 278.0 224.4 282.3C222.6 286.6 219.9 297.1 220.3 298.7C220.8 300.3 225.1 292.8 227.1 291.9C229.1 291.0 231.0 292.2 232.6 293.3C234.2 294.4 235.3 297.8 236.7 298.7C238.1 299.6 238.9 300.5 240.8 298.7C242.7 296.9 247.1 289.6 248.3 287.8" fill="none" stroke="#000" stroke-width="2.0" stroke-linecap="round" stroke-linejoin="round"/>
<path d="M146.8 353.7C157.7 353.7 201.3 353.6 212.2 353.6 M144.4 361.1C143.9 360.5 142.5 357.7 141.3 357.6C140.1 357.5 137.8 359.3 137.0 360.3C136.2 361.3 136.3 362.1 136.6 363.4C136.9 364.7 138.2 366.8 138.9 368.1C139.6 369.4 140.4 369.8 140.5 371.3C140.6 372.8 140.5 375.5 139.7 377.1C138.9 378.7 137.2 380.8 135.8 381.0C134.4 381.2 132.0 379.4 131.5 378.3C131.0 377.2 131.6 375.6 132.7 374.4C133.8 373.2 135.3 372.2 137.8 370.9C140.3 369.6 144.2 368.8 147.5 366.6C150.8 364.5 155.1 360.8 157.7 358.0C160.3 355.2 161.4 352.4 163.0 350.0C164.6 347.6 166.8 344.6 167.5 343.5 M167.5 343.5C164.6 349.6 152.8 374.1 149.9 380.2 M158.9 374.4C159.4 373.2 161.0 369.2 162.0 367.0C163.0 364.8 163.9 361.4 164.7 361.1C165.5 360.8 166.3 362.8 167.0 365.0C167.7 367.2 167.9 372.4 168.6 374.4C169.3 376.3 169.9 376.6 171.0 376.7C172.1 376.8 173.3 376.1 175.0 374.8C176.7 373.5 179.2 371.2 181.2 369.1C183.2 367.0 185.6 363.0 186.9 362.4C188.2 361.8 189.3 363.4 189.3 365.3C189.3 367.2 187.9 372.1 186.9 373.9C185.9 375.7 184.1 376.6 183.1 376.3C182.1 376.0 181.2 373.7 181.2 372.0C181.2 370.3 181.7 367.3 183.0 366.0C184.3 364.7 187.3 364.6 189.3 364.3C191.3 364.0 193.8 364.5 195.1 364.3C196.4 364.1 197.0 363.1 197.4 362.9 M197.4 362.9C197.1 365.1 195.8 374.1 195.5 376.3 M195.8 372.0C196.7 370.5 199.6 364.5 201.3 362.9C203.0 361.3 204.8 361.4 206.0 362.4C207.2 363.4 207.8 367.2 208.4 369.1C209.0 371.0 208.6 372.9 209.4 373.9C210.2 374.8 211.8 375.4 213.2 374.8C214.6 374.2 216.4 372.4 218.0 370.5C219.6 368.6 222.0 364.6 222.8 363.4 M232.3 365.3C230.7 365.0 225.0 362.9 222.8 363.4C220.5 363.9 219.7 366.4 218.9 368.1C218.1 369.9 217.4 372.5 218.0 373.9C218.6 375.3 220.8 376.5 222.8 376.3C224.7 376.1 228.3 374.7 229.9 372.9C231.5 371.1 231.9 366.6 232.3 365.3 M232.3 364.3C231.9 366.3 231.1 373.1 229.9 376.3C228.7 379.5 227.9 381.0 225.1 383.4C222.3 385.8 216.0 388.2 213.2 390.6C210.4 393.0 208.7 396.1 208.4 397.8C208.1 399.5 209.7 400.6 211.3 400.6C212.9 400.6 215.3 400.7 218.0 397.8C220.7 394.9 225.5 387.2 227.5 383.4C229.5 379.6 228.7 376.6 229.9 374.8C231.1 373.1 233.0 373.6 234.7 372.9C236.4 372.2 239.0 370.9 239.9 370.5" fill="none" stroke="#000" stroke-width="2.0" stroke-linecap="round" stroke-linejoin="round"/>
<path d="M163.0 411.2C165.2 412.2 171.5 415.9 176.0 417.5C180.5 419.1 184.1 420.3 190.1 420.9C196.1 421.5 206.7 421.8 211.8 420.9C217.0 420.0 218.3 417.9 221.0 415.5C223.7 413.1 226.9 408.2 228.1 406.8 M187.9 419.8C187.2 417.6 184.3 409.0 183.6 406.8 M176.0 418.5C174.2 419.3 166.8 422.7 165.0 423.5 M194.5 424.2C195.2 423.7 198.2 421.5 199.0 421.0 M210.7 423.1C210.7 422.8 210.5 421.4 210.5 421.0" fill="none" stroke="#000" stroke-width="1.8" stroke-linecap="round" stroke-linejoin="round"/>
<path fill="none" stroke="#000" stroke-width="1.8" d="M143.4 400.8C141.9 406.0 155.6 413.3 163.0 411.2C160.6 403.9 146.9 396.7 143.4 400.8Z M172.7 394.9C169.8 398.6 177.4 407.0 183.6 406.8C184.3 400.7 176.7 392.4 172.7 394.9Z M191.2 405.7C188.2 409.3 195.7 418.5 202.0 418.8C202.9 412.6 195.3 403.4 191.2 405.7Z M146.7 427.4C148.7 431.7 163.1 428.7 167.3 423.1C161.2 419.6 146.8 422.6 146.7 427.4Z M160.8 438.3C164.7 439.5 170.0 429.6 168.4 424.2C163.0 425.8 157.6 435.7 160.8 438.3Z M176.0 437.2C179.4 440.1 192.4 431.0 194.5 424.2C187.4 423.9 174.4 433.0 176.0 437.2Z M206.4 436.7C210.5 437.2 213.5 427.7 210.7 423.1C205.8 425.3 202.8 434.8 206.4 436.7Z"/>
<path transform="translate(235.5,239.5) scale(0.8800000000000001,0.9)" d="M0 10C-4 6 -10 2 -10 -3.5C-10 -7.5 -7 -10 -4.8 -10C-2.5 -10 -0.8 -8.5 0 -6.5C0.8 -8.5 2.5 -10 4.8 -10C7 -10 10 -7.5 10 -3.5C10 2 4 6 0 10Z"/><path transform="translate(221.6,257.5) scale(0.425,0.425)" d="M0 10C-4 6 -10 2 -10 -3.5C-10 -7.5 -7 -10 -4.8 -10C-2.5 -10 -0.8 -8.5 0 -6.5C0.8 -8.5 2.5 -10 4.8 -10C7 -10 10 -7.5 10 -3.5C10 2 4 6 0 10Z"/><path transform="translate(148.5,265.8) scale(0.5650000000000001,0.5650000000000001)" d="M0 10C-4 6 -10 2 -10 -3.5C-10 -7.5 -7 -10 -4.8 -10C-2.5 -10 -0.8 -8.5 0 -6.5C0.8 -8.5 2.5 -10 4.8 -10C7 -10 10 -7.5 10 -3.5C10 2 4 6 0 10Z"/><path transform="translate(223.3,312.8) scale(0.58,0.58)" d="M0 10C-4 6 -10 2 -10 -3.5C-10 -7.5 -7 -10 -4.8 -10C-2.5 -10 -0.8 -8.5 0 -6.5C0.8 -8.5 2.5 -10 4.8 -10C7 -10 10 -7.5 10 -3.5C10 2 4 6 0 10Z"/><path transform="translate(159.8,321) scale(0.89,0.82)" d="M0 10C-4 6 -10 2 -10 -3.5C-10 -7.5 -7 -10 -4.8 -10C-2.5 -10 -0.8 -8.5 0 -6.5C0.8 -8.5 2.5 -10 4.8 -10C7 -10 10 -7.5 10 -3.5C10 2 4 6 0 10Z"/><path transform="translate(195.5,389.5) scale(0.45,0.43)" d="M0 10C-4 6 -10 2 -10 -3.5C-10 -7.5 -7 -10 -4.8 -10C-2.5 -10 -0.8 -8.5 0 -6.5C0.8 -8.5 2.5 -10 4.8 -10C7 -10 10 -7.5 10 -3.5C10 2 4 6 0 10Z"/>
</g></mask>
<mask id="mR" maskUnits="userSpaceOnUse" x="0" y="0" width="700" height="600"><rect x="0" y="0" width="700" height="600" fill="#fff"/><g fill="#000">
<path id="arcp" d="M284 346A143 143 0 0 1 570 346" fill="none"/>
<text font-size="30" letter-spacing="1.2" word-spacing="3" stroke="#000" stroke-width="0.5"><textPath href="#arcp" startOffset="50%" text-anchor="middle">I AM AND WILL</textPath></text>
<path transform="translate(424.5,226) scale(1.15,1.1)" d="M0 10C-4 6 -10 2 -10 -3.5C-10 -7.5 -7 -10 -4.8 -10C-2.5 -10 -0.8 -8.5 0 -6.5C0.8 -8.5 2.5 -10 4.8 -10C7 -10 10 -7.5 10 -3.5C10 2 4 6 0 10Z"/>
<path fill="#000" d="M341.7 272.3L342.1 269.5L343.0 269.6ZM342.6 272.4L341.7 272.3L343.0 269.6ZM340.4 272.0L340.9 269.3L342.1 269.5ZM341.7 272.3L340.4 272.0L342.1 269.5ZM339.0 271.7L339.4 269.0L340.9 269.3ZM340.4 272.0L339.0 271.7L340.9 269.3ZM337.4 271.5L337.7 268.7L339.4 269.0ZM339.0 271.7L337.4 271.5L339.4 269.0ZM336.0 271.5L336.0 268.5L337.7 268.7ZM337.4 271.5L336.0 271.5L337.7 268.7ZM334.7 271.7L334.1 268.5L336.0 268.5ZM336.0 271.5L334.7 271.7L336.0 268.5ZM333.7 272.3L332.3 268.7L334.1 268.5ZM334.7 271.7L333.7 272.3L334.1 268.5ZM332.9 273.0L330.5 269.5L332.3 268.7ZM333.7 272.3L332.9 273.0L332.3 268.7ZM332.0 274.0L328.9 270.5L330.5 269.5ZM332.9 273.0L332.0 274.0L330.5 269.5ZM330.9 275.2L327.4 271.8L328.9 270.5ZM332.0 274.0L330.9 275.2L328.9 270.5ZM329.9 276.5L326.0 273.2L327.4 271.8ZM330.9 275.2L329.9 276.5L327.4 271.8ZM328.9 277.8L324.7 274.7L326.0 273.2ZM329.9 276.5L328.9 277.8L326.0 273.2ZM328.1 279.2L323.6 276.2L324.7 274.7ZM328.9 277.8L328.1 279.2L324.7 274.7ZM327.4 280.4L322.6 277.6L323.6 276.2ZM328.1 279.2L327.4 280.4L323.6 276.2ZM326.8 281.5L321.8 279.0L322.6 277.6ZM327.4 280.4L326.8 281.5L322.6 277.6ZM326.5 282.5L321.1 280.5L321.8 279.0ZM326.8 281.5L326.5 282.5L321.8 279.0ZM326.1 283.6L320.6 281.9L321.1 280.5ZM326.5 282.5L326.1 283.6L321.1 280.5ZM325.9 284.7L320.1 283.4L320.6 281.9ZM326.1 283.6L325.9 284.7L320.6 281.9ZM325.8 285.8L319.9 284.9L320.1 283.4ZM325.9 284.7L325.8 285.8L320.1 283.4ZM325.6 286.9L319.7 286.4L319.9 284.9ZM325.8 285.8L325.6 286.9L319.9 284.9ZM325.6 288.0L319.6 288.0L319.7 286.4ZM325.6 286.9L325.6 288.0L319.7 286.4ZM325.6 289.3L319.6 289.6L319.6 288.0ZM325.6 288.0L325.6 289.3L319.6 288.0ZM325.7 290.6L319.8 291.3L319.6 289.6ZM325.6 289.3L325.7 290.6L319.6 289.6ZM325.9 292.1L320.0 293.0L319.8 291.3ZM325.7 290.6L325.9 292.1L319.8 291.3ZM326.2 293.5L320.4 294.7L320.0 293.0ZM325.9 292.1L326.2 293.5L320.0 293.0ZM326.5 294.8L320.8 296.4L320.4 294.7ZM326.2 293.5L326.5 294.8L320.4 294.7ZM326.8 295.9L321.3 297.9L320.8 296.4ZM326.5 294.8L326.8 295.9L320.8 296.4ZM327.0 296.8L322.0 299.2L321.3 297.9ZM326.8 295.9L327.0 296.8L321.3 297.9ZM327.3 297.5L322.7 300.3L322.0 299.2ZM327.0 296.8L327.3 297.5L322.0 299.2ZM327.6 298.2L323.5 301.3L322.7 300.3ZM327.3 297.5L327.6 298.2L322.7 300.3ZM327.8 298.7L324.5 302.1L323.5 301.3ZM327.6 298.2L327.8 298.7L323.5 301.3ZM328.0 299.2L325.6 302.8L324.5 302.1ZM327.8 298.7L328.0 299.2L324.5 302.1ZM328.2 299.6L326.8 303.1L325.6 302.8ZM328.0 299.2L328.2 299.6L325.6 302.8ZM328.4 299.9L328.1 303.2L326.8 303.1ZM328.2 299.6L328.4 299.9L326.8 303.1ZM328.7 300.0L329.3 303.0L328.1 303.2ZM328.4 299.9L328.7 300.0L328.1 303.2ZM329.2 299.9L330.4 302.5L329.3 303.0ZM328.7 300.0L329.2 299.9L329.3 303.0ZM329.9 299.6L331.4 301.9L330.4 302.5ZM329.2 299.9L329.9 299.6L330.4 302.5ZM330.6 299.0L332.4 301.2L331.4 301.9ZM329.9 299.6L330.6 299.0L331.4 301.9ZM331.4 298.3L333.4 300.3L332.4 301.2ZM330.6 299.0L331.4 298.3L332.4 301.2ZM332.2 297.4L334.4 299.2L333.4 300.3ZM331.4 298.3L332.2 297.4L333.4 300.3ZM333.1 296.4L335.3 298.0L334.4 299.2ZM332.2 297.4L333.1 296.4L334.4 299.2ZM333.8 295.3L336.2 296.7L335.3 298.0ZM333.1 296.4L333.8 295.3L335.3 298.0ZM334.5 294.0L337.0 295.3L336.2 296.7ZM333.8 295.3L334.5 294.0L336.2 296.7ZM335.3 292.5L337.8 293.7L337.0 295.3ZM334.5 294.0L335.3 292.5L337.0 295.3ZM336.0 290.9L338.6 292.0L337.8 293.7ZM335.3 292.5L336.0 290.9L337.8 293.7ZM336.7 289.1L339.3 290.1L338.6 292.0ZM336.0 290.9L336.7 289.1L338.6 292.0ZM337.4 287.3L340.0 288.2L339.3 290.1ZM336.7 289.1L337.4 287.3L339.3 290.1ZM338.0 285.4L340.7 286.3L340.0 288.2ZM337.4 287.3L338.0 285.4L340.0 288.2ZM338.7 283.6L341.3 284.4L340.7 286.3ZM338.0 285.4L338.7 283.6L340.7 286.3ZM339.3 281.6L342.0 282.4L341.3 284.4ZM338.7 283.6L339.3 281.6L341.3 284.4ZM339.9 279.4L342.6 280.1L342.0 282.4ZM339.3 281.6L339.9 279.4L342.0 282.4ZM340.4 277.1L343.1 277.7L342.6 280.1ZM339.9 279.4L340.4 277.1L342.6 280.1ZM341.0 274.8L343.7 275.4L343.1 277.7ZM340.4 277.1L341.0 274.8L343.1 277.7ZM341.4 272.7L344.2 273.3L343.7 275.4ZM341.0 274.8L341.4 272.7L343.7 275.4ZM341.8 271.0L344.6 271.6L344.2 273.3ZM341.4 272.7L341.8 271.0L344.2 273.3ZM342.1 269.7L344.9 270.3L344.6 271.6ZM341.8 271.0L342.1 269.7L344.6 271.6ZM341.4 271.0a1.4 1.4 0 1 1 2.8 0a1.4 1.4 0 1 1 -2.8 0ZM342.1 270.0a1.4 1.4 0 1 1 2.8 0a1.4 1.4 0 1 1 -2.8 0ZM346.6 270.8L340.6 271.3L340.5 270.0ZM346.5 269.4L346.6 270.8L340.5 270.0ZM346.8 272.7L340.8 273.2L340.6 271.3ZM346.6 270.8L346.8 272.7L340.6 271.3ZM347.0 274.9L341.0 275.5L340.8 273.2ZM346.8 272.7L347.0 274.9L340.8 273.2ZM347.2 277.4L341.2 277.9L341.0 275.5ZM347.0 274.9L347.2 277.4L341.0 275.5ZM347.4 279.9L341.5 280.5L341.2 277.9ZM347.2 277.4L347.4 279.9L341.2 277.9ZM347.7 282.4L341.7 283.0L341.5 280.5ZM347.4 279.9L347.7 282.4L341.5 280.5ZM348.0 284.6L342.0 285.4L341.7 283.0ZM347.7 282.4L348.0 284.6L341.7 283.0ZM348.3 286.8L342.4 287.7L342.0 285.4ZM348.0 284.6L348.3 286.8L342.0 285.4ZM348.6 289.2L342.7 290.1L342.4 287.7ZM348.3 286.8L348.6 289.2L342.4 287.7ZM349.0 291.6L343.1 292.5L342.7 290.1ZM348.6 289.2L349.0 291.6L342.7 290.1ZM349.3 293.9L343.5 294.9L343.1 292.5ZM349.0 291.6L349.3 293.9L343.1 292.5ZM349.7 296.0L343.9 297.1L343.5 294.9ZM349.3 293.9L349.7 296.0L343.5 294.9ZM350.1 297.8L344.3 299.1L343.9 297.1ZM349.7 296.0L350.1 297.8L343.9 297.1ZM350.4 299.2L344.8 300.8L344.3 299.1ZM350.1 297.8L350.4 299.2L344.3 299.1ZM350.7 300.4L345.2 302.1L344.8 300.8ZM350.4 299.2L350.7 300.4L344.8 300.8ZM351.0 301.3L345.7 303.3L345.2 302.1ZM350.7 300.4L351.0 301.3L345.2 302.1ZM351.1 302.0L346.4 304.4L345.7 303.3ZM351.0 301.3L351.1 302.0L345.7 303.3ZM350.8 302.2L347.4 305.3L346.4 304.4ZM351.1 302.0L350.8 302.2L346.4 304.4ZM349.9 302.2L349.1 305.9L347.4 305.3ZM347.4 305.3L349.9 302.2L350.8 302.2ZM349.2 302.6L350.8 305.4L349.1 305.9ZM349.1 305.9L349.2 302.6L349.9 302.2ZM349.4 302.6L351.6 304.4L350.8 305.4ZM349.2 302.6L349.4 302.6L350.8 305.4ZM349.9 301.9L352.3 303.3L351.6 304.4ZM349.4 302.6L349.9 301.9L351.6 304.4ZM350.5 300.6L353.1 301.8L352.3 303.3ZM349.9 301.9L350.5 300.6L352.3 303.3ZM351.3 299.0L353.8 300.0L353.1 301.8ZM350.5 300.6L351.3 299.0L353.1 301.8ZM352.0 297.0L354.6 298.0L353.8 300.0ZM351.3 299.0L352.0 297.0L353.8 300.0ZM352.7 294.8L355.4 295.6L354.6 298.0ZM352.0 297.0L352.7 294.8L354.6 298.0ZM353.5 292.3L356.2 293.0L355.4 295.6ZM352.7 294.8L353.5 292.3L355.4 295.6ZM354.1 289.7L356.9 290.3L356.2 293.0ZM353.5 292.3L354.1 289.7L356.2 293.0ZM354.7 286.7L357.5 287.2L356.9 290.3ZM354.1 289.7L354.7 286.7L356.9 290.3ZM355.3 283.3L358.1 283.7L357.5 287.2ZM354.7 286.7L355.3 283.3L357.5 287.2ZM355.8 279.6L358.6 280.0L358.1 283.7ZM355.3 283.3L355.8 279.6L358.1 283.7ZM356.4 275.7L359.2 276.1L358.6 280.0ZM355.8 279.6L356.4 275.7L358.6 280.0ZM356.9 271.8L359.7 272.2L359.2 276.1ZM356.4 275.7L356.9 271.8L359.2 276.1ZM357.5 268.1L360.3 268.6L359.7 272.2ZM356.9 271.8L357.5 268.1L359.7 272.2ZM358.1 264.7L360.9 265.3L360.3 268.6ZM357.5 268.1L358.1 264.7L360.3 268.6ZM358.8 261.6L361.5 262.2L360.9 265.3ZM358.1 264.7L358.8 261.6L360.9 265.3ZM359.5 258.5L362.2 259.1L361.5 262.2ZM358.8 261.6L359.5 258.5L361.5 262.2ZM360.2 255.5L362.9 256.2L362.2 259.1ZM359.5 258.5L360.2 255.5L362.2 259.1ZM361.0 252.7L363.7 253.5L362.9 256.2ZM360.2 255.5L361.0 252.7L362.9 256.2ZM361.7 250.1L364.4 250.9L363.7 253.5ZM361.0 252.7L361.7 250.1L363.7 253.5ZM362.4 247.7L365.1 248.5L364.4 250.9ZM361.7 250.1L362.4 247.7L364.4 250.9ZM363.2 245.5L365.8 246.5L365.1 248.5ZM362.4 247.7L363.2 245.5L365.1 248.5ZM363.9 243.6L366.5 244.6L365.8 246.5ZM363.2 245.5L363.9 243.6L365.8 246.5ZM364.7 241.8L367.2 243.0L366.5 244.6ZM363.9 243.6L364.7 241.8L366.5 244.6ZM365.5 240.2L367.9 241.5L367.2 243.0ZM364.7 241.8L365.5 240.2L367.2 243.0ZM366.2 238.8L368.6 240.3L367.9 241.5ZM365.5 240.2L366.2 238.8L367.9 241.5ZM367.1 237.7L369.2 239.5L368.6 240.3ZM366.2 238.8L367.1 237.7L368.6 240.3ZM367.9 236.7L369.7 239.0L369.2 239.5ZM367.1 237.7L367.9 236.7L369.2 239.5ZM369.1 236.0L369.9 239.0L369.7 239.0ZM367.9 236.7L369.1 236.0L369.7 239.0ZM369.9 239.0L369.6 239.3L370.7 235.7ZM369.1 236.0L370.7 235.7L369.9 239.0ZM372.2 236.2L369.5 239.6L369.6 239.3ZM370.7 235.7L372.2 236.2L369.6 239.3ZM373.5 237.0L369.6 240.2L369.5 239.6ZM372.2 236.2L373.5 237.0L369.5 239.6ZM374.6 238.2L369.9 240.9L369.6 240.2ZM373.5 237.0L374.6 238.2L369.6 240.2ZM375.4 239.7L370.2 241.8L369.9 240.9ZM374.6 238.2L375.4 239.7L369.9 240.9ZM376.0 241.3L370.4 242.8L370.2 241.8ZM375.4 239.7L376.0 241.3L370.2 241.8ZM376.4 243.1L370.6 243.9L370.4 242.8ZM376.0 241.3L376.4 243.1L370.4 242.8ZM376.6 245.0L370.6 245.2L370.6 243.9ZM376.4 243.1L376.6 245.0L370.6 243.9ZM376.6 247.1L370.6 246.8L370.6 245.2ZM376.6 245.0L376.6 247.1L370.6 245.2ZM376.4 249.2L370.4 248.7L370.6 246.8ZM376.6 247.1L376.4 249.2L370.6 246.8ZM376.1 251.5L370.2 250.7L370.4 248.7ZM376.4 249.2L376.1 251.5L370.4 248.7ZM375.8 253.8L369.9 252.9L370.2 250.7ZM376.1 251.5L375.8 253.8L370.2 250.7ZM375.4 256.2L369.5 255.1L369.9 252.9ZM375.8 253.8L375.4 256.2L369.9 252.9ZM374.9 258.6L369.1 257.4L369.5 255.1ZM375.4 256.2L374.9 258.6L369.5 255.1ZM374.3 261.1L368.6 259.7L369.1 257.4ZM374.9 258.6L374.3 261.1L369.1 257.4ZM373.6 263.8L367.9 262.1L368.6 259.7ZM374.3 261.1L373.6 263.8L368.6 259.7ZM372.8 266.4L367.2 264.7L367.9 262.1ZM373.6 263.8L372.8 266.4L367.9 262.1ZM371.9 269.1L366.4 267.4L367.2 264.7ZM372.8 266.4L371.9 269.1L367.2 264.7ZM371.2 271.7L365.5 270.1L366.4 267.4ZM371.9 269.1L371.2 271.7L366.4 267.4ZM370.5 274.3L364.8 272.8L365.5 270.1ZM371.2 271.7L370.5 274.3L365.5 270.1ZM369.9 276.7L364.1 275.3L364.8 272.8ZM370.5 274.3L369.9 276.7L364.8 272.8ZM369.4 279.0L363.6 277.8L364.1 275.3ZM369.9 276.7L369.4 279.0L364.1 275.3ZM368.9 281.5L363.1 280.4L363.6 277.8ZM369.4 279.0L368.9 281.5L363.6 277.8ZM368.5 283.8L362.6 282.8L363.1 280.4ZM368.9 281.5L368.5 283.8L363.1 280.4ZM368.1 286.1L362.2 285.3L362.6 282.8ZM368.5 283.8L368.1 286.1L362.6 282.8ZM367.8 288.3L361.9 287.6L362.2 285.3ZM368.1 286.1L367.8 288.3L362.2 285.3ZM367.6 290.3L361.6 289.8L361.9 287.6ZM367.8 288.3L367.6 290.3L361.9 287.6ZM367.5 292.1L361.5 291.9L361.6 289.8ZM367.6 290.3L367.5 292.1L361.6 289.8ZM367.5 293.7L361.5 293.8L361.5 291.9ZM367.5 292.1L367.5 293.7L361.5 291.9ZM367.5 295.2L361.6 295.7L361.5 293.8ZM367.5 293.7L367.5 295.2L361.5 293.8ZM367.7 296.5L361.8 297.4L361.6 295.7ZM367.5 295.2L367.7 296.5L361.6 295.7ZM367.9 297.7L362.1 298.9L361.8 297.4ZM367.7 296.5L367.9 297.7L361.8 297.4ZM368.1 298.8L362.5 300.4L362.1 298.9ZM367.9 297.7L368.1 298.8L362.1 298.9ZM368.3 299.6L362.9 301.6L362.5 300.4ZM368.1 298.8L368.3 299.6L362.5 300.4ZM368.5 300.3L363.5 302.7L362.9 301.6ZM368.3 299.6L368.5 300.3L362.9 301.6ZM368.7 300.9L364.1 303.6L363.5 302.7ZM368.5 300.3L368.7 300.9L363.5 302.7ZM368.8 301.3L364.9 304.5L364.1 303.6ZM368.7 300.9L368.8 301.3L364.1 303.6ZM368.7 301.7L366.0 305.1L364.9 304.5ZM368.8 301.3L368.7 301.7L364.9 304.5ZM368.5 302.0L367.3 305.5L366.0 305.1ZM366.0 305.1L368.5 302.0L368.7 301.7ZM368.3 302.2L368.7 305.4L367.3 305.5ZM367.3 305.5L368.3 302.2L368.5 302.0ZM368.5 302.3L369.9 304.8L368.7 305.4ZM368.3 302.2L368.5 302.3L368.7 305.4ZM369.1 301.9L370.9 304.1L369.9 304.8ZM368.5 302.3L369.1 301.9L369.9 304.8ZM369.9 301.1L371.9 303.1L370.9 304.1ZM369.1 301.9L369.9 301.1L370.9 304.1ZM370.9 300.0L373.0 301.8L371.9 303.1ZM369.9 301.1L370.9 300.0L371.9 303.1ZM371.9 298.6L374.2 300.3L373.0 301.8ZM370.9 300.0L371.9 298.6L373.0 301.8ZM373.1 297.0L375.4 298.5L374.2 300.3ZM371.9 298.6L373.1 297.0L374.2 300.3ZM374.2 295.1L376.6 296.4L375.4 298.5ZM373.1 297.0L374.2 295.1L375.4 298.5ZM375.2 292.9L377.8 294.1L376.6 296.4ZM374.2 295.1L375.2 292.9L376.6 296.4ZM376.2 290.5L378.8 291.5L377.8 294.1ZM375.2 292.9L376.2 290.5L377.8 294.1ZM377.1 287.5L379.8 288.2L378.8 291.5ZM376.2 290.5L377.1 287.5L378.8 291.5ZM378.0 283.6L380.7 284.2L379.8 288.2ZM377.1 287.5L378.0 283.6L379.8 288.2ZM378.8 279.2L381.6 279.8L380.7 284.2ZM378.0 283.6L378.8 279.2L380.7 284.2ZM379.7 274.9L382.4 275.4L381.6 279.8ZM378.8 279.2L379.7 274.9L381.6 279.8ZM380.4 271.0L383.2 271.5L382.4 275.4ZM379.7 274.9L380.4 271.0L382.4 275.4ZM381.0 267.8L383.9 268.6L383.2 271.5ZM380.4 271.0L381.0 267.8L383.2 271.5ZM381.4 265.7L384.6 267.3L383.9 268.6ZM381.0 267.8L381.4 265.7L383.9 268.6ZM384.6 267.3L382.1 268.0L384.7 264.4ZM381.4 265.7L384.7 264.4L384.6 267.3ZM382.1 268.0L381.2 267.6L386.3 266.5ZM384.7 264.4L386.3 266.5L382.1 268.0ZM386.8 268.4L381.1 269.0L381.2 267.6ZM386.3 266.5L386.8 268.4L381.2 267.6ZM387.1 270.7L381.1 271.0L381.1 269.0ZM386.8 268.4L387.1 270.7L381.1 269.0ZM387.2 273.2L381.2 273.5L381.1 271.0ZM387.1 270.7L387.2 273.2L381.1 271.0ZM387.3 275.7L381.3 275.9L381.2 273.5ZM387.2 273.2L387.3 275.7L381.2 273.5ZM387.4 277.9L381.4 278.1L381.3 275.9ZM387.3 275.7L387.4 277.9L381.3 275.9ZM387.4 280.3L381.4 280.2L381.4 278.1ZM387.4 277.9L387.4 280.3L381.4 278.1ZM387.3 283.1L381.3 282.9L381.4 280.2ZM387.4 280.3L387.3 283.1L381.4 280.2ZM387.2 286.1L381.2 285.8L381.3 282.9ZM387.3 283.1L387.2 286.1L381.3 282.9ZM387.1 288.9L381.1 288.7L381.2 285.8ZM387.2 286.1L387.1 288.9L381.2 285.8ZM386.9 291.2L381.1 291.3L381.1 288.7ZM387.1 288.9L386.9 291.2L381.1 288.7ZM386.8 292.7L381.5 293.4L381.1 291.3ZM386.9 291.2L386.8 292.7L381.1 291.3ZM386.0 292.4L382.8 295.6L381.5 293.4ZM381.5 293.4L386.0 292.4L386.8 292.7ZM383.6 292.6L386.2 295.1L382.8 295.6ZM382.8 295.6L383.6 292.6L386.0 292.4ZM384.2 292.1L386.9 293.5L386.2 295.1ZM383.6 292.6L384.2 292.1L386.2 295.1ZM385.1 290.5L387.7 291.7L386.9 293.5ZM384.2 292.1L385.1 290.5L386.9 293.5ZM386.0 288.5L388.5 289.5L387.7 291.7ZM385.1 290.5L386.0 288.5L387.7 291.7ZM386.9 286.2L389.5 287.3L388.5 289.5ZM386.0 288.5L386.9 286.2L388.5 289.5ZM387.9 284.1L390.4 285.3L389.5 287.3ZM386.9 286.2L387.9 284.1L389.5 287.3ZM388.8 282.3L391.2 283.7L390.4 285.3ZM387.9 284.1L388.8 282.3L390.4 285.3ZM389.6 280.7L392.1 282.1L391.2 283.7ZM388.8 282.3L389.6 280.7L391.2 283.7ZM390.6 278.9L393.1 280.2L392.1 282.1ZM389.6 280.7L390.6 278.9L392.1 282.1ZM391.5 277.1L394.0 278.4L393.1 280.2ZM390.6 278.9L391.5 277.1L393.1 280.2ZM392.5 275.3L394.9 276.8L394.0 278.4ZM391.5 277.1L392.5 275.3L394.0 278.4ZM393.5 273.8L395.8 275.7L394.9 276.8ZM392.5 275.3L393.5 273.8L394.9 276.8ZM394.7 272.5L396.3 275.5L395.8 275.7ZM393.5 273.8L394.7 272.5L395.8 275.7ZM396.3 275.5L395.3 275.8L397.2 272.0ZM394.7 272.5L397.2 272.0L396.3 275.5ZM395.3 275.8L394.7 275.9L399.1 273.5ZM397.2 272.0L399.1 273.5L395.3 275.8ZM400.2 275.5L394.9 277.1L394.7 275.9ZM399.1 273.5L400.2 275.5L394.7 275.9ZM400.9 277.8L395.3 279.1L394.9 277.1ZM400.2 275.5L400.9 277.8L394.9 277.1ZM401.5 280.3L395.7 281.5L395.3 279.1ZM400.9 277.8L401.5 280.3L395.3 279.1ZM402.0 282.9L396.2 284.0L395.7 281.5ZM401.5 280.3L402.0 282.9L395.7 281.5ZM402.5 285.3L396.6 286.5L396.2 284.0ZM402.0 282.9L402.5 285.3L396.2 284.0ZM402.9 287.4L397.1 288.6L396.6 286.5ZM402.5 285.3L402.9 287.4L396.6 286.5ZM403.3 289.3L397.5 290.5L397.1 288.6ZM402.9 287.4L403.3 289.3L397.1 288.6ZM403.7 291.3L397.8 292.3L397.5 290.5ZM403.3 289.3L403.7 291.3L397.5 290.5ZM404.0 293.2L398.1 294.2L397.8 292.3ZM403.7 291.3L404.0 293.2L397.8 292.3ZM404.3 295.0L398.5 296.0L398.1 294.2ZM404.0 293.2L404.3 295.0L398.1 294.2ZM404.6 296.6L398.8 297.8L398.5 296.0ZM404.3 295.0L404.6 296.6L398.5 296.0ZM404.9 297.9L399.3 299.5L398.8 297.8ZM404.6 296.6L404.9 297.9L398.8 297.8ZM405.2 298.9L399.8 301.1L399.3 299.5ZM404.9 297.9L405.2 298.9L399.3 299.5ZM405.5 299.8L400.5 302.3L399.8 301.1ZM405.2 298.9L405.5 299.8L399.8 301.1ZM405.8 300.6L401.3 303.5L400.5 302.3ZM405.5 299.8L405.8 300.6L400.5 302.3ZM406.0 301.3L402.2 304.4L401.3 303.5ZM405.8 300.6L406.0 301.3L401.3 303.5ZM406.2 301.7L403.3 305.2L402.2 304.4ZM406.0 301.3L406.2 301.7L402.2 304.4ZM406.2 302.1L404.6 305.7L403.3 305.2ZM406.2 301.7L406.2 302.1L403.3 305.2ZM406.2 302.4L405.9 305.7L404.6 305.7ZM406.2 302.1L406.2 302.4L404.6 305.7ZM406.2 302.6L407.2 305.4L405.9 305.7ZM406.2 302.4L406.2 302.6L405.9 305.7ZM406.6 302.5L408.2 304.8L407.2 305.4ZM406.2 302.6L406.6 302.5L407.2 305.4ZM407.2 302.0L409.2 304.0L408.2 304.8ZM406.6 302.5L407.2 302.0L408.2 304.8ZM407.9 301.2L410.1 303.0L409.2 304.0ZM407.2 302.0L407.9 301.2L409.2 304.0ZM408.6 300.2L410.9 301.8L410.1 303.0ZM407.9 301.2L408.6 300.2L410.1 303.0ZM409.4 299.1L411.8 300.5L410.9 301.8ZM408.6 300.2L409.4 299.1L410.9 301.8ZM410.1 297.8L412.6 299.1L411.8 300.5ZM409.4 299.1L410.1 297.8L411.8 300.5ZM410.7 296.4L413.3 297.6L412.6 299.1ZM410.1 297.8L410.7 296.4L412.6 299.1ZM411.3 295.0L413.9 296.0L413.3 297.6ZM410.7 296.4L411.3 295.0L413.3 297.6ZM411.9 293.3L414.6 294.3L413.9 296.0ZM411.3 295.0L411.9 293.3L413.9 296.0ZM412.5 291.6L415.2 292.4L414.6 294.3ZM411.9 293.3L412.5 291.6L414.6 294.3ZM413.1 289.7L415.8 290.4L415.2 292.4ZM412.5 291.6L413.1 289.7L415.2 292.4ZM413.5 287.7L416.3 288.3L415.8 290.4ZM413.1 289.7L413.5 287.7L415.8 290.4ZM414.0 285.6L416.7 286.1L416.3 288.3ZM413.5 287.7L414.0 285.6L416.3 288.3ZM414.3 283.4L417.1 283.8L416.7 286.1ZM414.0 285.6L414.3 283.4L416.7 286.1ZM414.6 281.0L417.4 281.3L417.1 283.8ZM414.3 283.4L414.6 281.0L417.1 283.8ZM414.8 278.4L417.6 278.6L417.4 281.3ZM414.6 281.0L414.8 278.4L417.4 281.3ZM414.9 275.6L417.7 275.7L417.6 278.6ZM414.8 278.4L414.9 275.6L417.6 278.6ZM415.0 272.8L417.8 272.8L417.7 275.7ZM414.9 275.6L415.0 272.8L417.7 275.7ZM415.1 270.0L417.9 270.0L417.8 272.8ZM415.0 272.8L415.1 270.0L417.8 272.8ZM415.1 267.4L417.9 267.3L417.9 270.0ZM415.1 270.0L415.1 267.4L417.9 270.0ZM415.0 265.1L417.8 264.9L417.9 267.3ZM415.1 267.4L415.0 265.1L417.9 267.3ZM414.9 263.0L417.7 262.8L417.8 264.9ZM415.0 265.1L414.9 263.0L417.8 264.9ZM414.7 261.1L417.5 260.8L417.7 262.8ZM414.9 263.0L414.7 261.1L417.7 262.8ZM414.4 259.3L417.2 258.9L417.5 260.8ZM414.7 261.1L414.4 259.3L417.5 260.8ZM414.2 257.7L416.9 257.1L417.2 258.9ZM414.4 259.3L414.2 257.7L417.2 258.9ZM413.8 256.1L416.6 255.5L416.9 257.1ZM414.2 257.7L413.8 256.1L416.9 257.1ZM413.5 254.7L416.2 254.0L416.6 255.5ZM413.8 256.1L413.5 254.7L416.6 255.5ZM413.2 253.4L415.8 252.6L416.2 254.0ZM413.5 254.7L413.2 253.4L416.2 254.0ZM412.8 252.1L415.4 251.3L415.8 252.6ZM413.2 253.4L412.8 252.1L415.8 252.6ZM412.4 251.0L415.0 250.0L415.4 251.3ZM412.8 252.1L412.4 251.0L415.4 251.3ZM411.9 249.9L414.5 248.8L415.0 250.0ZM412.4 251.0L411.9 249.9L415.0 250.0ZM411.5 249.0L414.0 247.7L414.5 248.8ZM411.9 249.9L411.5 249.0L414.5 248.8ZM411.1 248.3L413.5 246.8L414.0 247.7ZM411.5 249.0L411.1 248.3L414.0 247.7ZM410.8 247.8L413.0 246.1L413.5 246.8ZM411.1 248.3L410.8 247.8L413.5 246.8ZM410.6 247.6L412.4 245.4L413.0 246.1ZM410.8 247.8L410.6 247.6L413.0 246.1ZM410.9 248.0L411.4 244.7L412.4 245.4ZM412.4 245.4L410.9 248.0L410.6 247.6ZM411.6 248.2L410.0 244.6L411.4 244.7ZM411.4 244.7L411.6 248.2L410.9 248.0ZM412.2 248.3L408.7 245.0L410.0 244.6ZM410.0 244.6L412.2 248.3L411.6 248.2ZM412.6 248.3L407.8 245.8L408.7 245.0ZM408.7 245.0L412.6 248.3L412.2 248.3ZM412.7 248.4L407.2 246.8L407.8 245.8ZM412.6 248.3L412.7 248.4L407.8 245.8ZM412.8 248.6L406.9 247.9L407.2 246.8ZM412.7 248.4L412.8 248.6L407.2 246.8ZM412.8 248.9L406.8 249.1L406.9 247.9ZM412.8 248.6L412.8 248.9L406.9 247.9ZM412.8 249.4L407.0 250.3L406.8 249.1ZM412.8 248.9L412.8 249.4L406.8 249.1ZM413.0 250.4L407.2 251.6L407.0 250.3ZM412.8 249.4L413.0 250.4L407.0 250.3ZM413.2 251.5L407.5 252.9L407.2 251.6ZM413.0 250.4L413.2 251.5L407.2 251.6ZM413.5 252.7L407.9 254.3L407.5 252.9ZM413.2 251.5L413.5 252.7L407.5 252.9ZM413.9 253.9L408.4 255.7L407.9 254.3ZM413.5 252.7L413.9 253.9L407.9 254.3ZM414.2 254.9L408.9 257.0L408.4 255.7ZM413.9 253.9L414.2 254.9L408.4 255.7ZM414.6 255.8L409.4 258.2L408.9 257.0ZM414.2 254.9L414.6 255.8L408.9 257.0ZM414.9 256.6L410.0 259.2L409.4 258.2ZM414.6 255.8L414.9 256.6L409.4 258.2ZM415.2 257.3L410.7 260.2L410.0 259.2ZM414.9 256.6L415.2 257.3L410.0 259.2ZM415.6 258.0L411.4 261.1L410.7 260.2ZM415.2 257.3L415.6 258.0L410.7 260.2ZM416.0 258.6L412.1 261.9L411.4 261.1ZM415.6 258.0L416.0 258.6L411.4 261.1ZM416.4 259.2L413.0 262.6L412.1 261.9ZM416.0 258.6L416.4 259.2L412.1 261.9ZM416.8 259.7L413.9 263.3L413.0 262.6ZM416.4 259.2L416.8 259.7L413.0 262.6ZM417.2 260.2L414.8 263.8L413.9 263.3ZM416.8 259.7L417.2 260.2L413.9 263.3ZM417.6 260.6L415.9 264.2L414.8 263.8ZM417.2 260.2L417.6 260.6L414.8 263.8ZM418.2 261.0L416.9 264.5L415.9 264.2ZM417.6 260.6L418.2 261.0L415.9 264.2ZM418.8 261.3L417.9 264.7L416.9 264.5ZM418.2 261.0L418.8 261.3L416.9 264.5ZM419.6 261.6L419.0 264.8L417.9 264.7ZM418.8 261.3L419.6 261.6L417.9 264.7ZM420.4 261.8L420.0 264.9L419.0 264.8ZM419.6 261.6L420.4 261.8L419.0 264.8ZM421.2 261.9L420.9 264.9L420.0 264.9ZM420.4 261.8L421.2 261.9L420.0 264.9ZM422.1 262.0L421.9 265.0L420.9 264.9ZM421.2 261.9L422.1 262.0L420.9 264.9ZM423.0 262.1L422.9 265.0L421.9 265.0ZM422.1 262.0L423.0 262.1L421.9 265.0ZM423.9 262.1L423.9 265.0L422.9 265.0ZM423.0 262.1L423.9 262.1L422.9 265.0ZM424.8 262.1L425.0 264.9L423.9 265.0ZM423.9 262.1L424.8 262.1L423.9 265.0ZM425.8 262.0L426.1 264.8L425.0 264.9ZM424.8 262.1L425.8 262.0L425.0 264.9ZM426.7 261.9L427.2 264.7L426.1 264.8ZM425.8 262.0L426.7 261.9L426.1 264.8ZM427.7 261.7L428.3 264.4L427.2 264.7ZM426.7 261.9L427.7 261.7L427.2 264.7ZM428.6 261.5L429.4 264.1L428.3 264.4ZM427.7 261.7L428.6 261.5L428.3 264.4ZM429.5 261.1L430.6 263.7L429.4 264.1ZM428.6 261.5L429.5 261.1L429.4 264.1ZM430.4 260.7L431.7 263.2L430.6 263.7ZM429.5 261.1L430.4 260.7L430.6 263.7ZM431.4 260.1L432.8 262.6L431.7 263.2ZM430.4 260.7L431.4 260.1L431.7 263.2ZM432.4 259.6L433.8 261.9L432.8 262.6ZM431.4 260.1L432.4 259.6L432.8 262.6ZM433.4 258.9L434.8 261.3L433.8 261.9ZM432.4 259.6L433.4 258.9L433.8 261.9ZM434.4 258.3L435.8 260.7L434.8 261.3ZM433.4 258.9L434.4 258.3L434.8 261.3ZM435.3 257.8L436.7 260.2L435.8 260.7ZM434.4 258.3L435.3 257.8L435.8 260.7ZM436.2 257.3L437.6 259.7L436.7 260.2ZM435.3 257.8L436.2 257.3L436.7 260.2ZM437.1 256.7L438.5 259.2L437.6 259.7ZM436.2 257.3L437.1 256.7L437.6 259.7ZM438.0 256.2L439.4 258.6L438.5 259.2ZM437.1 256.7L438.0 256.2L438.5 259.2ZM438.8 255.7L440.3 258.1L439.4 258.6ZM438.0 256.2L438.8 255.7L439.4 258.6ZM439.6 255.3L441.0 257.7L440.3 258.1ZM438.8 255.7L439.6 255.3L440.3 258.1ZM440.2 254.9L441.6 257.3L441.0 257.7ZM439.6 255.3L440.2 254.9L441.0 257.7ZM440.7 254.6L442.1 257.0L441.6 257.3ZM440.2 254.9L440.7 254.6L441.6 257.3ZM340.5 269.7a3.0 3.0 0 1 1 6.0 0a3.0 3.0 0 1 1 -6.0 0ZM440.0 255.8a1.4 1.4 0 1 1 2.8 0a1.4 1.4 0 1 1 -2.8 0ZM346.8 303.8a2.3 2.3 0 1 1 4.6 0a2.3 2.3 0 1 1 -4.6 0ZM347.6 304.1a1.9 1.9 0 1 1 3.8 0a1.9 1.9 0 1 1 -3.8 0ZM348.4 304.0a1.6 1.6 0 1 1 3.2 0a1.6 1.6 0 1 1 -3.2 0ZM367.9 237.5a1.6 1.6 0 1 1 3.2 0a1.6 1.6 0 1 1 -3.2 0ZM368.3 237.5a1.9 1.9 0 1 1 3.7 0a1.9 1.9 0 1 1 -3.7 0ZM366.0 303.7a1.9 1.9 0 1 1 3.7 0a1.9 1.9 0 1 1 -3.7 0ZM366.9 303.8a1.6 1.6 0 1 1 3.2 0a1.6 1.6 0 1 1 -3.2 0ZM381.2 266.5a1.8 1.8 0 1 1 3.5 0a1.8 1.8 0 1 1 -3.5 0ZM381.2 266.2a2.2 2.2 0 1 1 4.4 0a2.2 2.2 0 1 1 -4.4 0ZM381.1 267.0a2.6 2.6 0 1 1 5.3 0a2.6 2.6 0 1 1 -5.3 0ZM381.4 293.1a2.7 2.7 0 1 1 5.4 0a2.7 2.7 0 1 1 -5.4 0ZM382.1 294.0a2.3 2.3 0 1 1 4.5 0a2.3 2.3 0 1 1 -4.5 0ZM383.1 293.8a1.8 1.8 0 1 1 3.6 0a1.8 1.8 0 1 1 -3.6 0ZM393.8 274.0a1.7 1.7 0 1 1 3.4 0a1.7 1.7 0 1 1 -3.4 0ZM394.2 273.9a2.1 2.1 0 1 1 4.2 0a2.1 2.1 0 1 1 -4.2 0ZM394.4 274.7a2.5 2.5 0 1 1 5.0 0a2.5 2.5 0 1 1 -5.0 0ZM404.4 304.1a1.7 1.7 0 1 1 3.3 0a1.7 1.7 0 1 1 -3.3 0ZM410.0 246.5a1.5 1.5 0 1 1 2.9 0a1.5 1.5 0 1 1 -2.9 0ZM409.5 246.3a1.7 1.7 0 1 1 3.3 0a1.7 1.7 0 1 1 -3.3 0ZM408.8 246.4a2.0 2.0 0 1 1 4.0 0a2.0 2.0 0 1 1 -4.0 0ZM450.5 262.5L452.4 260.5L452.9 261.0ZM451.1 263.0L450.5 262.5L452.9 261.0ZM449.7 261.8L451.7 259.8L452.4 260.5ZM450.5 262.5L449.7 261.8L452.4 260.5ZM448.9 261.0L450.8 258.9L451.7 259.8ZM449.7 261.8L448.9 261.0L451.7 259.8ZM448.0 260.1L449.8 258.0L450.8 258.9ZM448.9 261.0L448.0 260.1L450.8 258.9ZM447.0 259.3L448.8 257.1L449.8 258.0ZM448.0 260.1L447.0 259.3L449.8 258.0ZM446.2 258.7L447.7 256.3L448.8 257.1ZM447.0 259.3L446.2 258.7L448.8 257.1ZM445.4 258.3L446.6 255.7L447.7 256.3ZM446.2 258.7L445.4 258.3L447.7 256.3ZM444.7 258.0L445.6 255.3L446.6 255.7ZM445.4 258.3L444.7 258.0L446.6 255.7ZM443.9 257.8L444.6 255.0L445.6 255.3ZM444.7 258.0L443.9 257.8L445.6 255.3ZM443.2 257.7L443.6 254.8L444.6 255.0ZM443.9 257.8L443.2 257.7L444.6 255.0ZM442.6 257.7L442.5 254.7L443.6 254.8ZM443.2 257.7L442.6 257.7L443.6 254.8ZM442.1 257.9L441.4 254.6L442.5 254.7ZM442.6 257.7L442.1 257.9L442.5 254.7ZM441.6 258.3L440.1 254.8L441.4 254.6ZM442.1 257.9L441.6 258.3L441.4 254.6ZM441.2 258.8L438.8 255.2L440.1 254.8ZM441.6 258.3L441.2 258.8L440.1 254.8ZM440.6 259.4L437.6 255.9L438.8 255.2ZM441.2 258.8L440.6 259.4L438.8 255.2ZM440.0 260.2L436.5 256.8L437.6 255.9ZM440.6 259.4L440.0 260.2L437.6 255.9ZM439.3 261.1L435.3 257.9L436.5 256.8ZM440.0 260.2L439.3 261.1L436.5 256.8ZM438.6 262.2L434.3 259.1L435.3 257.9ZM439.3 261.1L438.6 262.2L435.3 257.9ZM437.9 263.4L433.2 260.6L434.3 259.1ZM438.6 262.2L437.9 263.4L434.3 259.1ZM437.2 264.7L432.3 262.2L433.2 260.6ZM437.9 263.4L437.2 264.7L433.2 260.6ZM436.6 266.1L431.4 263.9L432.3 262.2ZM437.2 264.7L436.6 266.1L432.3 262.2ZM436.0 267.8L430.6 265.9L431.4 263.9ZM436.6 266.1L436.0 267.8L431.4 263.9ZM435.4 269.7L429.9 268.1L430.6 265.9ZM436.0 267.8L435.4 269.7L430.6 265.9ZM434.9 271.9L429.2 270.5L429.9 268.1ZM435.4 269.7L434.9 271.9L429.9 268.1ZM434.3 274.2L428.6 272.9L429.2 270.5ZM434.9 271.9L434.3 274.2L429.2 270.5ZM433.9 276.4L428.1 275.3L428.6 272.9ZM434.3 274.2L433.9 276.4L428.6 272.9ZM433.5 278.5L427.6 277.6L428.1 275.3ZM433.9 276.4L433.5 278.5L428.1 275.3ZM433.3 280.4L427.3 279.6L427.6 277.6ZM433.5 278.5L433.3 280.4L427.6 277.6ZM433.1 282.0L427.1 281.5L427.3 279.6ZM433.3 280.4L433.1 282.0L427.3 279.6ZM433.0 283.5L427.0 283.3L427.1 281.5ZM433.1 282.0L433.0 283.5L427.1 281.5ZM433.0 284.9L427.0 285.0L427.0 283.3ZM433.0 283.5L433.0 284.9L427.0 283.3ZM433.1 286.1L427.2 286.7L427.0 285.0ZM433.0 284.9L433.1 286.1L427.0 285.0ZM433.2 287.2L427.4 288.3L427.2 286.7ZM433.1 286.1L433.2 287.2L427.2 286.7ZM433.4 288.1L427.8 289.8L427.4 288.3ZM433.2 287.2L433.4 288.1L427.4 288.3ZM433.6 288.9L428.4 291.1L427.8 289.8ZM433.4 288.1L433.6 288.9L427.8 289.8ZM433.8 289.6L429.2 292.4L428.4 291.1ZM433.6 288.9L433.8 289.6L428.4 291.1ZM434.1 290.3L430.2 293.5L429.2 292.4ZM433.8 289.6L434.1 290.3L429.2 292.4ZM434.5 291.0L431.4 294.5L430.2 293.5ZM434.1 290.3L434.5 291.0L430.2 293.5ZM435.0 291.6L432.7 295.2L431.4 294.5ZM434.5 291.0L435.0 291.6L431.4 294.5ZM435.4 292.1L434.1 295.6L432.7 295.2ZM435.0 291.6L435.4 292.1L432.7 295.2ZM435.8 292.4L435.5 295.7L434.1 295.6ZM435.4 292.1L435.8 292.4L434.1 295.6ZM436.1 292.6L436.9 295.4L435.5 295.7ZM435.8 292.4L436.1 292.6L435.5 295.7ZM436.7 292.4L438.1 294.8L436.9 295.4ZM436.1 292.6L436.7 292.4L436.9 295.4ZM437.4 291.8L439.2 294.0L438.1 294.8ZM436.7 292.4L437.4 291.8L438.1 294.8ZM438.2 291.0L440.3 292.9L439.2 294.0ZM437.4 291.8L438.2 291.0L439.2 294.0ZM439.2 289.9L441.3 291.7L440.3 292.9ZM438.2 291.0L439.2 289.9L440.3 292.9ZM440.1 288.7L442.3 290.4L441.3 291.7ZM439.2 289.9L440.1 288.7L441.3 291.7ZM441.0 287.5L443.3 289.1L442.3 290.4ZM440.1 288.7L441.0 287.5L442.3 290.4ZM441.8 286.2L444.2 287.8L443.3 289.1ZM441.0 287.5L441.8 286.2L443.3 289.1ZM442.6 285.0L445.0 286.5L444.2 287.8ZM441.8 286.2L442.6 285.0L444.2 287.8ZM443.4 283.7L445.8 285.1L445.0 286.5ZM442.6 285.0L443.4 283.7L445.0 286.5ZM444.2 282.3L446.6 283.7L445.8 285.1ZM443.4 283.7L444.2 282.3L445.8 285.1ZM444.9 280.9L447.4 282.2L446.6 283.7ZM444.2 282.3L444.9 280.9L446.6 283.7ZM445.6 279.4L448.2 280.6L447.4 282.2ZM444.9 280.9L445.6 279.4L447.4 282.2ZM446.3 277.8L448.9 278.9L448.2 280.6ZM445.6 279.4L446.3 277.8L448.2 280.6ZM447.0 276.2L449.6 277.2L448.9 278.9ZM446.3 277.8L447.0 276.2L448.9 278.9ZM447.7 274.3L450.3 275.2L449.6 277.2ZM447.0 276.2L447.7 274.3L449.6 277.2ZM448.4 272.2L451.0 273.0L450.3 275.2ZM447.7 274.3L448.4 272.2L450.3 275.2ZM449.1 269.9L451.7 270.7L451.0 273.0ZM448.4 272.2L449.1 269.9L451.0 273.0ZM449.7 267.6L452.4 268.4L451.7 270.7ZM449.1 269.9L449.7 267.6L451.7 270.7ZM450.3 265.5L453.0 266.2L452.4 268.4ZM449.7 267.6L450.3 265.5L452.4 268.4ZM450.8 263.7L453.5 264.5L453.0 266.2ZM450.3 265.5L450.8 263.7L453.0 266.2ZM451.2 262.4L453.8 263.2L453.5 264.5ZM450.8 263.7L451.2 262.4L453.5 264.5ZM450.6 262.0a1.4 1.4 0 1 1 2.8 0a1.4 1.4 0 1 1 -2.8 0ZM451.1 262.8a1.4 1.4 0 1 1 2.8 0a1.4 1.4 0 1 1 -2.8 0ZM455.6 263.5L449.6 263.8L449.5 262.2ZM455.5 261.8L455.6 263.5L449.5 262.2ZM455.7 265.8L449.7 266.1L449.6 263.8ZM455.6 263.5L455.7 265.8L449.6 263.8ZM455.9 268.5L449.9 268.8L449.7 266.1ZM455.7 265.8L455.9 268.5L449.7 266.1ZM456.0 271.5L450.1 271.8L449.9 268.8ZM455.9 268.5L456.0 271.5L449.9 268.8ZM456.2 274.5L450.2 274.8L450.1 271.8ZM456.0 271.5L456.2 274.5L450.1 271.8ZM456.4 277.3L450.4 277.6L450.2 274.8ZM456.2 274.5L456.4 277.3L450.2 274.8ZM456.5 279.9L450.5 280.1L450.4 277.6ZM456.4 277.3L456.5 279.9L450.4 277.6ZM456.6 282.2L450.6 282.3L450.5 280.1ZM456.5 279.9L456.6 282.2L450.5 280.1ZM456.6 284.4L450.6 284.4L450.6 282.3ZM456.6 282.2L456.6 284.4L450.6 282.3ZM456.6 286.5L450.6 286.5L450.6 284.4ZM456.6 284.4L456.6 286.5L450.6 284.4ZM456.6 288.5L450.6 288.6L450.6 286.5ZM456.6 286.5L456.6 288.5L450.6 286.5ZM456.6 290.3L450.6 290.6L450.6 288.6ZM456.6 288.5L456.6 290.3L450.6 288.6ZM456.7 292.0L450.8 292.6L450.6 290.6ZM456.6 290.3L456.7 292.0L450.6 290.6ZM456.9 293.5L451.1 294.5L450.8 292.6ZM456.7 292.0L456.9 293.5L450.8 292.6ZM457.2 295.0L451.5 296.5L451.1 294.5ZM456.9 293.5L457.2 295.0L451.1 294.5ZM457.7 296.7L452.1 298.4L451.5 296.5ZM457.2 295.0L457.7 296.7L451.5 296.5ZM458.2 298.3L452.8 300.3L452.1 298.4ZM457.7 296.7L458.2 298.3L452.1 298.4ZM458.6 299.7L453.6 302.0L452.8 300.3ZM458.2 298.3L458.6 299.7L452.8 300.3ZM459.0 300.8L454.5 303.5L453.6 302.0ZM458.6 299.7L459.0 300.8L453.6 302.0ZM459.1 301.5L455.7 304.6L454.5 303.5ZM459.0 300.8L459.1 301.5L454.5 303.5ZM458.5 301.7L457.5 305.3L455.7 304.6ZM455.7 304.6L458.5 301.7L459.1 301.5ZM457.8 302.0L459.4 304.8L457.5 305.3ZM457.5 305.3L457.8 302.0L458.5 301.7ZM458.1 301.9L460.3 303.8L459.4 304.8ZM457.8 302.0L458.1 301.9L459.4 304.8ZM458.6 301.2L461.0 302.6L460.3 303.8ZM458.1 301.9L458.6 301.2L460.3 303.8ZM459.1 300.1L461.7 301.3L461.0 302.6ZM458.6 301.2L459.1 300.1L461.0 302.6ZM459.7 298.8L462.3 299.7L461.7 301.3ZM459.1 300.1L459.7 298.8L461.7 301.3ZM460.2 297.2L462.8 298.1L462.3 299.7ZM459.7 298.8L460.2 297.2L462.3 299.7ZM460.6 295.6L463.4 296.4L462.8 298.1ZM460.2 297.2L460.6 295.6L462.8 298.1ZM461.1 293.9L463.8 294.6L463.4 296.4ZM460.6 295.6L461.1 293.9L463.4 296.4ZM461.5 292.1L464.2 292.7L463.8 294.6ZM461.1 293.9L461.5 292.1L463.8 294.6ZM461.8 290.1L464.6 290.6L464.2 292.7ZM461.5 292.1L461.8 290.1L464.2 292.7ZM462.2 287.9L464.9 288.3L464.6 290.6ZM461.8 290.1L462.2 287.9L464.6 290.6ZM462.5 285.5L465.3 285.9L464.9 288.3ZM462.2 287.9L462.5 285.5L464.9 288.3ZM462.8 282.8L465.6 283.1L465.3 285.9ZM462.5 285.5L462.8 282.8L465.3 285.9ZM463.1 279.9L465.9 280.1L465.6 283.1ZM462.8 282.8L463.1 279.9L465.6 283.1ZM463.4 276.2L466.2 276.4L465.9 280.1ZM463.1 279.9L463.4 276.2L465.9 280.1ZM463.8 271.6L466.6 271.8L466.2 276.4ZM463.4 276.2L463.8 271.6L466.2 276.4ZM464.1 266.6L466.9 266.8L466.6 271.8ZM463.8 271.6L464.1 266.6L466.6 271.8ZM464.4 261.7L467.2 261.8L466.9 266.8ZM464.1 266.6L464.4 261.7L466.9 266.8ZM464.6 257.3L467.5 257.4L467.2 261.8ZM464.4 261.7L464.6 257.3L467.2 261.8ZM464.7 253.9L467.8 254.1L467.5 257.4ZM464.6 257.3L464.7 253.9L467.5 257.4ZM464.5 251.9L468.3 252.1L467.8 254.1ZM464.7 253.9L464.5 251.9L467.8 254.1ZM468.8 253.1L463.9 252.7L468.3 252.1ZM468.3 252.1L468.8 253.1L464.5 251.9ZM469.0 255.2L463.4 254.8L463.9 252.7ZM468.8 253.1L469.0 255.2L463.9 252.7ZM469.0 257.9L463.0 257.5L463.4 254.8ZM469.0 255.2L469.0 257.9L463.4 254.8ZM468.8 260.7L462.8 260.4L463.0 257.5ZM469.0 257.9L468.8 260.7L463.0 257.5ZM468.7 263.2L462.7 263.0L462.8 260.4ZM468.8 260.7L468.7 263.2L462.8 260.4ZM468.7 265.0L462.7 265.0L462.7 263.0ZM468.7 263.2L468.7 265.0L462.7 263.0ZM468.7 266.2L462.8 266.5L462.7 265.0ZM468.7 265.0L468.7 266.2L462.7 265.0ZM468.8 267.3L462.9 267.9L462.8 266.5ZM468.7 266.2L468.8 267.3L462.8 266.5ZM468.9 268.2L463.1 269.1L462.9 267.9ZM468.8 267.3L468.9 268.2L462.9 267.9ZM469.1 269.0L463.3 270.3L463.1 269.1ZM468.9 268.2L469.1 269.0L463.1 269.1ZM469.2 269.7L463.6 271.4L463.3 270.3ZM469.1 269.0L469.2 269.7L463.3 270.3ZM469.3 270.2L464.0 272.4L463.6 271.4ZM469.2 269.7L469.3 270.2L463.6 271.4ZM469.5 270.7L464.5 273.3L464.0 272.4ZM469.3 270.2L469.5 270.7L464.0 272.4ZM469.6 271.2L465.1 274.1L464.5 273.3ZM469.5 270.7L469.6 271.2L464.5 273.3ZM469.8 271.7L465.8 274.8L465.1 274.1ZM469.6 271.2L469.8 271.7L465.1 274.1ZM469.8 272.0L466.7 275.4L465.8 274.8ZM469.8 271.7L469.8 272.0L465.8 274.8ZM469.7 272.3L467.8 275.9L466.7 275.4ZM469.8 272.0L469.7 272.3L466.7 275.4ZM469.6 272.6L469.0 276.0L467.8 275.9ZM469.7 272.3L469.6 272.6L467.8 275.9ZM469.6 272.8L470.3 275.8L469.0 276.0ZM469.6 272.6L469.6 272.8L469.0 276.0ZM469.9 272.8L471.3 275.2L470.3 275.8ZM469.6 272.8L469.9 272.8L470.3 275.8ZM470.4 272.4L472.3 274.5L471.3 275.2ZM469.9 272.8L470.4 272.4L471.3 275.2ZM471.2 271.7L473.2 273.6L472.3 274.5ZM470.4 272.4L471.2 271.7L472.3 274.5ZM472.0 270.7L474.2 272.5L473.2 273.6ZM471.2 271.7L472.0 270.7L473.2 273.6ZM472.9 269.5L475.2 271.2L474.2 272.5ZM472.0 270.7L472.9 269.5L474.2 272.5ZM473.9 268.2L476.2 269.8L475.2 271.2ZM472.9 269.5L473.9 268.2L475.2 271.2ZM474.8 266.7L477.2 268.3L476.2 269.8ZM473.9 268.2L474.8 266.7L476.2 269.8ZM475.8 265.3L478.2 266.7L477.2 268.3ZM474.8 266.7L475.8 265.3L477.2 268.3ZM476.8 263.5L479.3 264.8L478.2 266.7ZM475.8 265.3L476.8 263.5L478.2 266.7ZM477.9 261.2L480.4 262.4L479.3 264.8ZM476.8 263.5L477.9 261.2L479.3 264.8ZM479.0 258.8L481.6 259.9L480.4 262.4ZM477.9 261.2L479.0 258.8L480.4 262.4ZM480.2 256.3L482.7 257.5L481.6 259.9ZM479.0 258.8L480.2 256.3L481.6 259.9ZM481.3 254.1L483.8 255.4L482.7 257.5ZM480.2 256.3L481.3 254.1L482.7 257.5ZM482.4 252.2L484.7 254.1L483.8 255.4ZM481.3 254.1L482.4 252.2L483.8 255.4ZM483.7 250.8L485.1 254.0L484.7 254.1ZM482.4 252.2L483.7 250.8L484.7 254.1ZM485.1 254.0L483.9 254.3L486.4 250.8ZM483.7 250.8L486.4 250.8L485.1 254.0ZM488.0 252.2L483.5 254.5L483.9 254.3ZM486.4 250.8L488.0 252.2L483.9 254.3ZM489.0 253.8L483.6 255.6L483.5 254.5ZM488.0 252.2L489.0 253.8L483.5 254.5ZM489.6 255.7L483.9 257.1L483.6 255.6ZM489.0 253.8L489.6 255.7L483.6 255.6ZM490.1 257.7L484.3 259.0L483.9 257.1ZM489.6 255.7L490.1 257.7L483.9 257.1ZM490.5 259.6L484.7 260.9L484.3 259.0ZM490.1 257.7L490.5 259.6L484.3 259.0ZM490.9 261.3L485.1 262.7L484.7 260.9ZM490.5 259.6L490.9 261.3L484.7 260.9ZM491.3 263.0L485.5 264.4L485.1 262.7ZM490.9 261.3L491.3 263.0L485.1 262.7ZM491.7 264.9L485.9 266.1L485.5 264.4ZM491.3 263.0L491.7 264.9L485.5 264.4ZM492.1 266.9L486.3 268.0L485.9 266.1ZM491.7 264.9L492.1 266.9L485.9 266.1ZM492.5 268.9L486.6 269.8L486.3 268.0ZM492.1 266.9L492.5 268.9L486.3 268.0ZM492.7 271.0L486.8 271.7L486.6 269.8ZM492.5 268.9L492.7 271.0L486.6 269.8ZM492.9 273.0L487.0 273.4L486.8 271.7ZM492.7 271.0L492.9 273.0L486.8 271.7ZM493.0 275.0L487.0 275.0L487.0 273.4ZM492.9 273.0L493.0 275.0L487.0 273.4ZM492.9 276.8L487.0 276.5L487.0 275.0ZM493.0 275.0L492.9 276.8L487.0 275.0ZM492.8 278.6L486.9 278.0L487.0 276.5ZM492.9 276.8L492.8 278.6L487.0 276.5ZM492.6 280.3L486.7 279.4L486.9 278.0ZM492.8 278.6L492.6 280.3L486.9 278.0ZM492.2 282.0L486.5 280.7L486.7 279.4ZM492.6 280.3L492.2 282.0L486.7 279.4ZM491.8 283.7L486.2 282.1L486.5 280.7ZM492.2 282.0L491.8 283.7L486.5 280.7ZM491.2 285.4L485.8 283.5L486.2 282.1ZM491.8 283.7L491.2 285.4L486.2 282.1ZM490.5 287.1L485.3 284.9L485.8 283.5ZM491.2 285.4L490.5 287.1L485.8 283.5ZM489.7 288.9L484.6 286.5L485.3 284.9ZM490.5 287.1L489.7 288.9L485.3 284.9ZM488.7 290.7L483.8 288.1L484.6 286.5ZM489.7 288.9L488.7 290.7L484.6 286.5ZM487.6 292.6L482.9 289.8L483.8 288.1ZM488.7 290.7L487.6 292.6L483.8 288.1ZM486.5 294.4L481.9 291.5L482.9 289.8ZM487.6 292.6L486.5 294.4L482.9 289.8ZM485.3 296.1L480.9 293.1L481.9 291.5ZM486.5 294.4L485.3 296.1L481.9 291.5ZM484.1 297.7L479.9 294.6L480.9 293.1ZM485.3 296.1L484.1 297.7L480.9 293.1ZM483.1 299.1L478.9 295.9L479.9 294.6ZM484.1 297.7L483.1 299.1L479.9 294.6ZM482.0 300.3L478.1 297.1L478.9 295.9ZM483.1 299.1L482.0 300.3L478.9 295.9ZM480.9 301.6L477.2 298.2L478.1 297.1ZM482.0 300.3L480.9 301.6L478.1 297.1ZM479.7 302.7L476.3 299.2L477.2 298.2ZM480.9 301.6L479.7 302.7L477.2 298.2ZM478.5 303.6L475.6 300.1L476.3 299.2ZM479.7 302.7L478.5 303.6L476.3 299.2ZM477.3 304.3L475.0 300.8L475.6 300.1ZM478.5 303.6L477.3 304.3L475.6 300.1ZM475.9 304.6L474.8 301.2L475.0 300.8ZM477.3 304.3L475.9 304.6L475.0 300.8ZM474.8 301.2L475.0 301.5L474.4 304.5ZM475.9 304.6L474.4 304.5L474.8 301.2ZM475.0 301.5L475.2 301.7L473.1 303.7ZM474.4 304.5L473.1 303.7L475.0 301.5ZM472.4 302.6L474.9 301.3L475.2 301.7ZM473.1 303.7L472.4 302.6L475.2 301.7ZM472.0 301.4L474.6 300.6L474.9 301.3ZM472.4 302.6L472.0 301.4L474.9 301.3ZM471.6 300.0L474.4 299.6L474.6 300.6ZM472.0 301.4L471.6 300.0L474.6 300.6ZM471.5 298.6L474.3 298.4L474.4 299.6ZM471.6 300.0L471.5 298.6L474.4 299.6ZM471.5 297.1L474.2 297.3L474.3 298.4ZM471.5 298.6L471.5 297.1L474.3 298.4ZM471.6 295.7L474.4 296.3L474.2 297.3ZM471.5 297.1L471.6 295.7L474.2 297.3ZM472.0 294.4L474.6 295.2L474.4 296.3ZM471.6 295.7L472.0 294.4L474.4 296.3ZM472.5 293.0L475.1 294.1L474.6 295.2ZM472.0 294.4L472.5 293.0L474.6 295.2ZM473.1 291.7L475.6 292.9L475.1 294.1ZM472.5 293.0L473.1 291.7L475.1 294.1ZM473.9 290.2L476.3 291.7L475.6 292.9ZM473.1 291.7L473.9 290.2L475.6 292.9ZM474.8 288.8L477.1 290.4L476.3 291.7ZM473.9 290.2L474.8 288.8L476.3 291.7ZM475.8 287.4L478.0 289.2L477.1 290.4ZM474.8 288.8L475.8 287.4L477.1 290.4ZM477.0 286.1L479.0 287.9L478.0 289.2ZM475.8 287.4L477.0 286.1L478.0 289.2ZM478.3 284.7L480.2 286.7L479.0 287.9ZM477.0 286.1L478.3 284.7L479.0 287.9ZM479.7 283.4L481.6 285.5L480.2 286.7ZM478.3 284.7L479.7 283.4L480.2 286.7ZM481.3 282.0L483.1 284.2L481.6 285.5ZM479.7 283.4L481.3 282.0L481.6 285.5ZM483.0 280.7L484.7 282.9L483.1 284.2ZM481.3 282.0L483.0 280.7L483.1 284.2ZM484.7 279.4L486.4 281.6L484.7 282.9ZM483.0 280.7L484.7 279.4L484.7 282.9ZM486.5 278.1L488.1 280.4L486.4 281.6ZM484.7 279.4L486.5 278.1L486.4 281.6ZM488.2 276.9L489.8 279.1L488.1 280.4ZM486.5 278.1L488.2 276.9L488.1 280.4ZM490.0 275.6L491.6 277.9L489.8 279.1ZM488.2 276.9L490.0 275.6L489.8 279.1ZM492.0 274.4L493.5 276.8L491.6 277.9ZM490.0 275.6L492.0 274.4L491.6 277.9ZM494.0 273.2L495.5 275.6L493.5 276.8ZM492.0 274.4L494.0 273.2L493.5 276.8ZM496.0 272.0L497.5 274.4L495.5 275.6ZM494.0 273.2L496.0 272.0L495.5 275.6ZM497.9 270.8L499.4 273.2L497.5 274.4ZM496.0 272.0L497.9 270.8L497.5 274.4ZM499.5 269.7L501.2 272.0L499.4 273.2ZM497.9 270.8L499.5 269.7L499.4 273.2ZM500.9 268.7L502.7 270.7L501.2 272.0ZM499.5 269.7L500.9 268.7L501.2 272.0ZM501.9 267.6L504.0 269.5L502.7 270.7ZM500.9 268.7L501.9 267.6L502.7 270.7ZM502.6 266.6L505.0 268.2L504.0 269.5ZM501.9 267.6L502.6 266.6L504.0 269.5ZM503.3 265.6L505.7 266.9L505.0 268.2ZM502.6 266.6L503.3 265.6L505.0 268.2ZM503.8 264.5L506.3 265.8L505.7 266.9ZM503.3 265.6L503.8 264.5L505.7 266.9ZM504.4 263.3L506.9 264.7L506.3 265.8ZM503.8 264.5L504.4 263.3L506.3 265.8ZM505.1 262.2L507.4 263.8L506.9 264.7ZM504.4 263.3L505.1 262.2L506.9 264.7ZM505.9 261.1L508.1 262.9L507.4 263.8ZM505.1 262.2L505.9 261.1L507.4 263.8ZM507.0 260.0L508.9 262.1L508.1 262.9ZM505.9 261.1L507.0 260.0L508.1 262.9ZM508.1 259.0L509.9 261.2L508.9 262.1ZM507.0 260.0L508.1 259.0L508.9 262.1ZM509.2 258.1L511.0 260.3L509.9 261.2ZM508.1 259.0L509.2 258.1L509.9 261.2ZM510.3 257.2L512.0 259.5L511.0 260.3ZM509.2 258.1L510.3 257.2L511.0 260.3ZM511.3 256.5L513.0 258.7L512.0 259.5ZM510.3 257.2L511.3 256.5L512.0 259.5ZM512.1 255.9L513.8 258.1L513.0 258.7ZM511.3 256.5L512.1 255.9L513.0 258.7ZM512.7 255.4L514.5 257.6L513.8 258.1ZM512.1 255.9L512.7 255.4L513.8 258.1ZM449.5 262.0a3.0 3.0 0 1 1 6.0 0a3.0 3.0 0 1 1 -6.0 0ZM512.2 256.5a1.4 1.4 0 1 1 2.8 0a1.4 1.4 0 1 1 -2.8 0ZM455.1 303.1a2.3 2.3 0 1 1 4.6 0a2.3 2.3 0 1 1 -4.6 0ZM456.1 303.5a1.9 1.9 0 1 1 3.8 0a1.9 1.9 0 1 1 -3.8 0ZM457.0 303.4a1.6 1.6 0 1 1 3.2 0a1.6 1.6 0 1 1 -3.2 0ZM464.5 252.0a1.9 1.9 0 1 1 3.9 0a1.9 1.9 0 1 1 -3.9 0ZM463.9 252.9a2.4 2.4 0 1 1 4.9 0a2.4 2.4 0 1 1 -4.9 0ZM482.7 252.4a1.7 1.7 0 1 1 3.5 0a1.7 1.7 0 1 1 -3.5 0ZM483.0 252.5a2.1 2.1 0 1 1 4.3 0a2.1 2.1 0 1 1 -4.3 0ZM473.5 302.9a1.8 1.8 0 1 1 3.6 0a1.8 1.8 0 1 1 -3.6 0ZM473.1 303.0a1.6 1.6 0 1 1 3.2 0a1.6 1.6 0 1 1 -3.2 0ZM472.7 302.7a1.4 1.4 0 1 1 2.9 0a1.4 1.4 0 1 1 -2.9 0ZM513.4 258.3L512.5 255.0L513.1 254.8ZM514.1 258.2L513.4 258.3L513.1 254.8ZM512.4 258.6L511.6 255.2L512.5 255.0ZM513.4 258.3L512.4 258.6L512.5 255.0ZM511.4 258.8L510.5 255.5L511.6 255.2ZM512.4 258.6L511.4 258.8L511.6 255.2ZM510.3 259.2L509.2 255.7L510.5 255.5ZM511.4 258.8L510.3 259.2L510.5 255.5ZM509.5 259.7L507.9 256.1L509.2 255.7ZM510.3 259.2L509.5 259.7L509.2 255.7ZM508.9 260.2L506.5 256.5L507.9 256.1ZM509.5 259.7L508.9 260.2L507.9 256.1ZM508.8 260.6L505.2 257.4L506.5 256.5ZM508.9 260.2L508.8 260.6L506.5 256.5ZM508.8 261.1L504.2 258.4L505.2 257.4ZM508.8 260.6L508.8 261.1L505.2 257.4ZM508.7 261.6L503.5 259.5L504.2 258.4ZM508.8 261.1L508.7 261.6L504.2 258.4ZM508.6 262.2L503.0 260.8L503.5 259.5ZM508.7 261.6L508.6 262.2L503.5 259.5ZM508.6 262.8L502.7 262.2L503.0 260.8ZM508.6 262.2L508.6 262.8L503.0 260.8ZM508.6 263.5L502.6 263.7L502.7 262.2ZM508.6 262.8L508.6 263.5L502.7 262.2ZM508.6 264.3L502.8 265.3L502.6 263.7ZM508.6 263.5L508.6 264.3L502.6 263.7ZM508.8 265.2L503.2 266.8L502.8 265.3ZM508.6 264.3L508.8 265.2L502.8 265.3ZM509.1 266.2L503.9 268.5L503.2 266.8ZM508.8 265.2L509.1 266.2L503.2 266.8ZM509.7 267.5L504.7 270.1L503.9 268.5ZM509.1 266.2L509.7 267.5L503.9 268.5ZM510.4 269.0L505.7 271.8L504.7 270.1ZM509.7 267.5L510.4 269.0L504.7 270.1ZM511.4 270.6L506.8 273.5L505.7 271.8ZM510.4 269.0L511.4 270.6L505.7 271.8ZM512.3 272.2L507.9 275.1L506.8 273.5ZM511.4 270.6L512.3 272.2L506.8 273.5ZM513.4 273.7L509.0 276.7L507.9 275.1ZM512.3 272.2L513.4 273.7L507.9 275.1ZM514.3 275.2L510.1 278.2L509.0 276.7ZM513.4 273.7L514.3 275.2L509.0 276.7ZM515.3 276.5L511.3 279.7L510.1 278.2ZM514.3 275.2L515.3 276.5L510.1 278.2ZM516.3 277.7L512.6 281.1L511.3 279.7ZM515.3 276.5L516.3 277.7L511.3 279.7ZM517.5 279.0L513.9 282.5L512.6 281.1ZM516.3 277.7L517.5 279.0L512.6 281.1ZM518.8 280.3L515.1 283.8L513.9 282.5ZM517.5 279.0L518.8 280.3L513.9 282.5ZM520.1 281.7L516.1 285.0L515.1 283.8ZM518.8 280.3L520.1 281.7L515.1 283.8ZM521.3 283.1L517.0 286.2L516.1 285.0ZM520.1 281.7L521.3 283.1L516.1 285.0ZM522.4 284.7L517.6 287.3L517.0 286.2ZM521.3 283.1L522.4 284.7L517.0 286.2ZM523.3 286.2L518.1 288.5L517.6 287.3ZM522.4 284.7L523.3 286.2L517.6 287.3ZM524.0 287.8L518.6 289.8L518.1 288.5ZM523.3 286.2L524.0 287.8L518.1 288.5ZM524.5 289.4L518.9 291.0L518.6 289.8ZM524.0 287.8L524.5 289.4L518.6 289.8ZM525.0 291.1L519.2 292.3L518.9 291.0ZM524.5 289.4L525.0 291.1L518.9 291.0ZM525.3 292.7L519.4 293.6L519.2 292.3ZM525.0 291.1L525.3 292.7L519.2 292.3ZM525.5 294.3L519.5 294.8L519.4 293.6ZM525.3 292.7L525.5 294.3L519.4 293.6ZM525.6 295.9L519.6 296.1L519.5 294.8ZM525.5 294.3L525.6 295.9L519.5 294.8ZM525.6 297.6L519.6 297.4L519.6 296.1ZM525.6 295.9L525.6 297.6L519.6 296.1ZM525.5 299.4L519.5 298.9L519.6 297.4ZM525.6 297.6L525.5 299.4L519.6 297.4ZM525.3 301.2L519.4 300.4L519.5 298.9ZM525.5 299.4L525.3 301.2L519.5 298.9ZM525.0 303.0L519.2 301.8L519.4 300.4ZM525.3 301.2L525.0 303.0L519.4 300.4ZM524.4 304.8L519.0 303.0L519.2 301.8ZM525.0 303.0L524.4 304.8L519.2 301.8ZM523.6 306.3L518.8 303.9L519.0 303.0ZM524.4 304.8L523.6 306.3L519.0 303.0ZM522.4 307.7L518.8 304.3L518.8 303.9ZM523.6 306.3L522.4 307.7L518.8 303.9ZM520.8 308.5L518.8 304.8L518.8 304.3ZM522.4 307.7L520.8 308.5L518.8 304.3ZM519.2 308.8L518.3 305.3L518.8 304.8ZM520.8 308.5L519.2 308.8L518.8 304.8ZM517.7 308.8L517.4 305.6L518.3 305.3ZM519.2 308.8L517.7 308.8L518.3 305.3ZM516.2 308.7L516.4 305.8L517.4 305.6ZM517.7 308.8L516.2 308.7L517.4 305.6ZM514.7 308.4L515.4 305.7L516.4 305.8ZM516.2 308.7L514.7 308.4L516.4 305.8ZM513.3 307.9L514.6 305.4L515.4 305.7ZM514.7 308.4L513.3 307.9L515.4 305.7ZM512.1 307.1L513.9 304.9L514.6 305.4ZM513.3 307.9L512.1 307.1L514.6 305.4ZM511.1 306.1L513.1 304.2L513.9 304.9ZM512.1 307.1L511.1 306.1L513.9 304.9ZM510.1 304.9L512.3 303.3L513.1 304.2ZM511.1 306.1L510.1 304.9L513.1 304.2ZM509.1 303.5L511.6 302.1L512.3 303.3ZM510.1 304.9L509.1 303.5L512.3 303.3ZM508.3 301.9L510.9 300.8L511.6 302.1ZM509.1 303.5L508.3 301.9L511.6 302.1ZM507.7 300.1L510.4 299.4L510.9 300.8ZM508.3 301.9L507.7 300.1L510.9 300.8ZM507.3 298.0L510.1 297.8L510.4 299.4ZM507.7 300.1L507.3 298.0L510.4 299.4ZM507.4 295.9L510.1 296.1L510.1 297.8ZM507.3 298.0L507.4 295.9L510.1 297.8ZM507.8 293.5L510.5 294.1L510.1 296.1ZM507.4 295.9L507.8 293.5L510.1 296.1ZM508.5 290.8L511.2 291.6L510.5 294.1ZM507.8 293.5L508.5 290.8L510.5 294.1ZM509.5 288.0L512.1 288.9L511.2 291.6ZM508.5 290.8L509.5 288.0L511.2 291.6ZM510.7 285.1L513.3 286.2L512.1 288.9ZM509.5 288.0L510.7 285.1L512.1 288.9ZM512.0 282.2L514.5 283.4L513.3 286.2ZM510.7 285.1L512.0 282.2L513.3 286.2ZM513.3 279.6L515.7 280.9L514.5 283.4ZM512.0 282.2L513.3 279.6L514.5 283.4ZM514.5 277.3L516.9 278.7L515.7 280.9ZM513.3 279.6L514.5 277.3L515.7 280.9ZM515.8 275.2L518.1 276.8L516.9 278.7ZM514.5 277.3L515.8 275.2L516.9 278.7ZM517.3 273.3L519.5 275.1L518.1 276.8ZM515.8 275.2L517.3 273.3L518.1 276.8ZM518.9 271.5L520.9 273.4L519.5 275.1ZM517.3 273.3L518.9 271.5L519.5 275.1ZM520.4 269.9L522.4 271.9L520.9 273.4ZM518.9 271.5L520.4 269.9L520.9 273.4ZM521.7 268.6L523.7 270.6L522.4 271.9ZM520.4 269.9L521.7 268.6L522.4 271.9ZM522.9 267.5L524.9 269.5L523.7 270.6ZM521.7 268.6L522.9 267.5L523.7 270.6ZM523.7 266.6L525.7 268.6L524.9 269.5ZM522.9 267.5L523.7 266.6L524.9 269.5ZM511.9 256.5a1.7 1.7 0 1 1 3.4 0a1.7 1.7 0 1 1 -3.4 0ZM523.3 267.6a1.4 1.4 0 1 1 2.8 0a1.4 1.4 0 1 1 -2.8 0Z"/>
<text x="355.3" y="344" font-size="34" word-spacing="3" stroke="#000" stroke-width="0.55">WILL BE</text>
<path fill="#000" d="M331.1 379.7L332.2 382.3L331.5 382.6ZM330.5 380.0L331.1 379.7L331.5 382.6ZM332.0 379.4L333.0 382.0L332.2 382.3ZM331.1 379.7L332.0 379.4L332.2 382.3ZM333.0 379.0L334.1 381.6L333.0 382.0ZM332.0 379.4L333.0 379.0L333.0 382.0ZM334.1 378.6L335.2 381.1L334.1 381.6ZM333.0 379.0L334.1 378.6L334.1 381.6ZM335.2 378.1L336.5 380.6L335.2 381.1ZM334.1 378.6L335.2 378.1L335.2 381.1ZM336.2 377.5L337.7 379.9L336.5 380.6ZM335.2 378.1L336.2 377.5L336.5 380.6ZM337.2 376.9L338.8 379.1L337.7 379.9ZM336.2 377.5L337.2 376.9L337.7 379.9ZM338.1 376.1L339.9 378.3L338.8 379.1ZM337.2 376.9L338.1 376.1L338.8 379.1ZM339.2 375.2L341.1 377.3L339.9 378.3ZM338.1 376.1L339.2 375.2L339.9 378.3ZM340.3 374.2L342.3 376.2L341.1 377.3ZM339.2 375.2L340.3 374.2L341.1 377.3ZM341.3 373.2L343.4 375.1L342.3 376.2ZM340.3 374.2L341.3 373.2L342.3 376.2ZM342.2 372.2L344.4 373.9L343.4 375.1ZM341.3 373.2L342.2 372.2L343.4 375.1ZM342.7 371.4L345.2 372.6L344.4 373.9ZM342.2 372.2L342.7 371.4L344.4 373.9ZM342.9 370.8L345.7 371.2L345.2 372.6ZM342.7 371.4L342.9 370.8L345.2 372.6ZM342.9 370.3L345.6 369.8L345.7 371.2ZM342.9 370.8L342.9 370.3L345.7 371.2ZM342.6 369.5L345.2 368.4L345.6 369.8ZM342.9 370.3L342.6 369.5L345.6 369.8ZM342.2 368.6L344.5 367.1L345.2 368.4ZM342.6 369.5L342.2 368.6L345.2 368.4ZM341.5 367.7L343.7 365.9L344.5 367.1ZM342.2 368.6L341.5 367.7L344.5 367.1ZM340.8 367.0L342.6 364.9L343.7 365.9ZM341.5 367.7L340.8 367.0L343.7 365.9ZM340.2 366.6L341.5 364.1L342.6 364.9ZM340.8 367.0L340.2 366.6L342.6 364.9ZM339.7 366.4L340.3 363.6L341.5 364.1ZM340.2 366.6L339.7 366.4L341.5 364.1ZM339.2 366.5L339.1 363.4L340.3 363.6ZM339.7 366.4L339.2 366.5L340.3 363.6ZM338.5 366.7L337.8 363.4L339.1 363.4ZM339.2 366.5L338.5 366.7L339.1 363.4ZM337.9 367.2L336.4 363.7L337.8 363.4ZM338.5 366.7L337.9 367.2L337.8 363.4ZM337.2 367.8L334.9 364.2L336.4 363.7ZM337.9 367.2L337.2 367.8L336.4 363.7ZM336.5 368.5L333.5 365.0L334.9 364.2ZM337.2 367.8L336.5 368.5L334.9 364.2ZM335.8 369.4L332.1 366.1L333.5 365.0ZM336.5 368.5L335.8 369.4L333.5 365.0ZM335.2 370.5L330.8 367.5L332.1 366.1ZM335.8 369.4L335.2 370.5L332.1 366.1ZM334.5 371.9L329.6 369.3L330.8 367.5ZM335.2 370.5L334.5 371.9L330.8 367.5ZM333.7 373.7L328.5 371.4L329.6 369.3ZM334.5 371.9L333.7 373.7L329.6 369.3ZM332.8 375.9L327.5 373.8L328.5 371.4ZM333.7 373.7L332.8 375.9L328.5 371.4ZM332.0 378.2L326.6 376.3L327.5 373.8ZM332.8 375.9L332.0 378.2L327.5 373.8ZM331.3 380.5L325.7 378.9L326.6 376.3ZM332.0 378.2L331.3 380.5L326.6 376.3ZM330.7 382.8L325.0 381.4L325.7 378.9ZM331.3 380.5L330.7 382.8L325.7 378.9ZM330.3 384.8L324.5 383.8L325.0 381.4ZM330.7 382.8L330.3 384.8L325.0 381.4ZM330.1 386.7L324.1 386.1L324.5 383.8ZM330.3 384.8L330.1 386.7L324.5 383.8ZM329.9 388.6L324.0 388.3L324.1 386.1ZM330.1 386.7L329.9 388.6L324.1 386.1ZM329.9 390.5L323.9 390.6L324.0 388.3ZM329.9 388.6L329.9 390.5L324.0 388.3ZM330.0 392.4L324.0 392.8L323.9 390.6ZM329.9 390.5L330.0 392.4L323.9 390.6ZM330.1 394.1L324.3 394.9L324.0 392.8ZM330.0 392.4L330.1 394.1L324.0 392.8ZM330.4 395.7L324.7 397.0L324.3 394.9ZM330.1 394.1L330.4 395.7L324.3 394.9ZM330.8 397.1L325.2 398.9L324.7 397.0ZM330.4 395.7L330.8 397.1L324.7 397.0ZM331.2 398.5L326.0 400.7L325.2 398.9ZM330.8 397.1L331.2 398.5L325.2 398.9ZM331.8 400.0L326.9 402.5L326.0 400.7ZM331.2 398.5L331.8 400.0L326.0 400.7ZM332.5 401.4L328.0 404.2L326.9 402.5ZM331.8 400.0L332.5 401.4L326.9 402.5ZM333.1 402.6L329.3 405.8L328.0 404.2ZM332.5 401.4L333.1 402.6L328.0 404.2ZM333.8 403.6L330.9 407.0L329.3 405.8ZM333.1 402.6L333.8 403.6L329.3 405.8ZM334.3 404.3L332.7 407.8L330.9 407.0ZM333.8 403.6L334.3 404.3L330.9 407.0ZM334.8 404.8L334.7 408.0L332.7 407.8ZM334.3 404.3L334.8 404.8L332.7 407.8ZM335.8 404.8L336.5 407.6L334.7 408.0ZM334.8 404.8L335.8 404.8L334.7 408.0ZM337.1 404.3L338.4 406.9L336.5 407.6ZM335.8 404.8L337.1 404.3L336.5 407.6ZM338.7 403.4L340.2 405.8L338.4 406.9ZM337.1 404.3L338.7 403.4L338.4 406.9ZM340.3 402.3L342.0 404.5L340.2 405.8ZM338.7 403.4L340.3 402.3L340.2 405.8ZM341.9 400.9L343.8 403.0L342.0 404.5ZM340.3 402.3L341.9 400.9L342.0 404.5ZM343.4 399.5L345.4 401.5L343.8 403.0ZM341.9 400.9L343.4 399.5L343.8 403.0ZM344.7 398.1L346.9 399.9L345.4 401.5ZM343.4 399.5L344.7 398.1L345.4 401.5ZM345.8 396.7L348.1 398.2L346.9 399.9ZM344.7 398.1L345.8 396.7L346.9 399.9ZM346.8 395.0L349.2 396.4L348.1 398.2ZM345.8 396.7L346.8 395.0L348.1 398.2ZM347.6 393.3L350.2 394.4L349.2 396.4ZM346.8 395.0L347.6 393.3L349.2 396.4ZM348.4 391.4L351.0 392.4L350.2 394.4ZM347.6 393.3L348.4 391.4L350.2 394.4ZM349.2 389.4L351.8 390.4L351.0 392.4ZM348.4 391.4L349.2 389.4L351.0 392.4ZM350.0 387.4L352.6 388.4L351.8 390.4ZM349.2 389.4L350.0 387.4L351.8 390.4ZM350.7 385.5L353.3 386.5L352.6 388.4ZM350.0 387.4L350.7 385.5L352.6 388.4ZM351.4 383.5L354.1 384.4L353.3 386.5ZM350.7 385.5L351.4 383.5L353.3 386.5ZM352.1 381.4L354.8 382.2L354.1 384.4ZM351.4 383.5L352.1 381.4L354.1 384.4ZM352.8 379.1L355.5 379.9L354.8 382.2ZM352.1 381.4L352.8 379.1L354.8 382.2ZM353.4 377.0L356.1 377.7L355.5 379.9ZM352.8 379.1L353.4 377.0L355.5 379.9ZM353.9 375.0L356.6 375.8L356.1 377.7ZM353.4 377.0L353.9 375.0L356.1 377.7ZM354.4 373.3L357.1 374.1L356.6 375.8ZM353.9 375.0L354.4 373.3L356.6 375.8ZM354.8 372.1L357.4 372.9L357.1 374.1ZM354.4 373.3L354.8 372.1L357.1 374.1ZM329.6 381.3a1.4 1.4 0 1 1 2.8 0a1.4 1.4 0 1 1 -2.8 0ZM354.7 372.5a1.4 1.4 0 1 1 2.8 0a1.4 1.4 0 1 1 -2.8 0ZM359.1 374.2L353.1 374.2L353.1 372.5ZM359.1 372.5L359.1 374.2L353.1 372.5ZM359.0 376.5L353.1 376.5L353.1 374.2ZM359.1 374.2L359.0 376.5L353.1 374.2ZM359.0 379.3L353.0 379.2L353.1 376.5ZM359.0 376.5L359.0 379.3L353.1 376.5ZM359.0 382.3L353.0 382.2L353.0 379.2ZM359.0 379.3L359.0 382.3L353.0 379.2ZM359.0 385.4L353.0 385.4L353.0 382.2ZM359.0 382.3L359.0 385.4L353.0 382.2ZM359.0 388.6L353.0 388.6L353.0 385.4ZM359.0 385.4L359.0 388.6L353.0 385.4ZM359.0 391.6L353.0 391.6L353.0 388.6ZM359.0 388.6L359.0 391.6L353.0 388.6ZM359.0 394.9L353.0 395.0L353.0 391.6ZM359.0 391.6L359.0 394.9L353.0 391.6ZM359.1 399.0L353.1 399.0L353.0 395.0ZM359.0 394.9L359.1 399.0L353.0 395.0ZM359.1 403.2L353.1 403.3L353.1 399.0ZM359.1 399.0L359.1 403.2L353.1 399.0ZM359.2 407.1L353.2 407.3L353.1 403.3ZM359.1 403.2L359.2 407.1L353.1 403.3ZM359.2 410.3L353.6 410.7L353.2 407.3ZM359.2 407.1L359.2 410.3L353.2 407.3ZM359.0 412.0L354.2 413.1L353.6 410.7ZM359.2 410.3L359.0 412.0L353.6 410.7ZM355.3 411.9L358.5 414.1L354.2 413.1ZM354.2 413.1L355.3 411.9L359.0 412.0ZM355.8 411.1L358.9 411.7L358.5 414.1ZM355.3 411.9L355.8 411.1L358.5 414.1ZM356.5 407.7L359.3 408.2L358.9 411.7ZM355.8 411.1L356.5 407.7L358.9 411.7ZM357.2 403.1L360.0 403.5L359.3 408.2ZM356.5 407.7L357.2 403.1L359.3 408.2ZM357.9 397.8L360.7 398.2L360.0 403.5ZM357.2 403.1L357.9 397.8L360.0 403.5ZM358.6 392.5L361.4 392.9L360.7 398.2ZM357.9 397.8L358.6 392.5L360.7 398.2ZM359.3 387.7L362.1 388.1L361.4 392.9ZM358.6 392.5L359.3 387.7L361.4 392.9ZM359.9 384.0L362.7 384.6L362.1 388.1ZM359.3 387.7L359.9 384.0L362.1 388.1ZM360.5 381.4L363.2 382.0L362.7 384.6ZM359.9 384.0L360.5 381.4L362.7 384.6ZM361.0 379.3L363.7 380.0L363.2 382.0ZM360.5 381.4L361.0 379.3L363.2 382.0ZM361.5 377.5L364.2 378.3L363.7 380.0ZM361.0 379.3L361.5 377.5L363.7 380.0ZM362.0 376.0L364.7 377.0L364.2 378.3ZM361.5 377.5L362.0 376.0L364.2 378.3ZM362.6 374.7L365.1 375.8L364.7 377.0ZM362.0 376.0L362.6 374.7L364.7 377.0ZM363.1 373.5L365.6 374.8L365.1 375.8ZM362.6 374.7L363.1 373.5L365.1 375.8ZM363.8 372.3L366.2 373.7L365.6 374.8ZM363.1 373.5L363.8 372.3L365.6 374.8ZM364.4 371.1L366.9 372.4L366.2 373.7ZM363.8 372.3L364.4 371.1L366.2 373.7ZM365.1 369.8L367.6 371.2L366.9 372.4ZM364.4 371.1L365.1 369.8L366.9 372.4ZM365.9 368.5L368.2 370.1L367.6 371.2ZM365.1 369.8L365.9 368.5L367.6 371.2ZM366.8 367.3L368.9 369.3L368.2 370.1ZM365.9 368.5L366.8 367.3L368.2 370.1ZM367.9 366.3L369.3 369.1L368.9 369.3ZM366.8 367.3L367.9 366.3L368.9 369.3ZM369.3 369.1L369.1 369.4L369.8 365.7ZM367.9 366.3L369.8 365.7L369.3 369.1ZM369.1 369.4L368.6 369.6L371.8 366.4ZM369.8 365.7L371.8 366.4L369.1 369.4ZM373.3 368.0L368.7 370.5L368.6 369.6ZM371.8 366.4L373.3 368.0L368.6 369.6ZM374.5 370.0L369.3 372.2L368.7 370.5ZM373.3 368.0L374.5 370.0L368.7 370.5ZM375.5 372.6L370.1 374.5L369.3 372.2ZM374.5 370.0L375.5 372.6L369.3 372.2ZM376.4 375.3L370.9 377.1L370.1 374.5ZM375.5 372.6L376.4 375.3L370.1 374.5ZM377.3 378.2L371.7 379.8L370.9 377.1ZM376.4 375.3L377.3 378.2L370.9 377.1ZM378.1 381.0L372.5 382.6L371.7 379.8ZM377.3 378.2L378.1 381.0L371.7 379.8ZM378.9 383.6L373.1 385.0L372.5 382.6ZM378.1 381.0L378.9 383.6L372.5 382.6ZM379.5 386.1L373.7 387.3L373.1 385.0ZM378.9 383.6L379.5 386.1L373.1 385.0ZM380.0 388.9L374.1 389.8L373.7 387.3ZM379.5 386.1L380.0 388.9L373.7 387.3ZM380.4 391.5L374.5 392.4L374.1 389.8ZM380.0 388.9L380.4 391.5L374.1 389.8ZM380.8 394.1L374.9 395.0L374.5 392.4ZM380.4 391.5L380.8 394.1L374.5 392.4ZM381.1 396.4L375.3 397.4L374.9 395.0ZM380.8 394.1L381.1 396.4L374.9 395.0ZM381.4 398.3L375.7 399.6L375.3 397.4ZM381.1 396.4L381.4 398.3L375.3 397.4ZM381.8 399.6L376.2 401.4L375.7 399.6ZM381.4 398.3L381.8 399.6L375.7 399.6ZM382.0 400.6L376.9 402.8L376.2 401.4ZM381.8 399.6L382.0 400.6L376.2 401.4ZM382.2 401.4L377.6 403.9L376.9 402.8ZM382.0 400.6L382.2 401.4L376.9 402.8ZM382.1 401.7L378.6 404.9L377.6 403.9ZM382.2 401.4L382.1 401.7L377.6 403.9ZM381.6 401.8L380.1 405.5L378.6 404.9ZM378.6 404.9L381.6 401.8L382.1 401.7ZM381.0 402.1L381.7 405.3L380.1 405.5ZM380.1 405.5L381.0 402.1L381.6 401.8ZM381.1 402.2L382.9 404.6L381.7 405.3ZM381.0 402.1L381.1 402.2L381.7 405.3ZM381.6 401.8L383.8 403.6L382.9 404.6ZM381.1 402.2L381.6 401.8L382.9 404.6ZM382.4 400.7L384.8 402.2L383.8 403.6ZM381.6 401.8L382.4 400.7L383.8 403.6ZM383.4 398.9L385.9 400.2L384.8 402.2ZM382.4 400.7L383.4 398.9L384.8 402.2ZM384.5 396.7L387.0 397.9L385.9 400.2ZM383.4 398.9L384.5 396.7L385.9 400.2ZM385.7 394.3L388.2 395.4L387.0 397.9ZM384.5 396.7L385.7 394.3L387.0 397.9ZM386.8 391.8L389.3 392.9L388.2 395.4ZM385.7 394.3L386.8 391.8L388.2 395.4ZM387.8 389.4L390.4 390.6L389.3 392.9ZM386.8 391.8L387.8 389.4L389.3 392.9ZM388.7 387.4L391.3 388.6L390.4 390.6ZM387.8 389.4L388.7 387.4L390.4 390.6ZM389.5 385.7L392.1 386.8L391.3 388.6ZM388.7 387.4L389.5 385.7L391.3 388.6ZM390.1 384.0L392.8 385.0L392.1 386.8ZM389.5 385.7L390.1 384.0L392.1 386.8ZM390.8 382.4L393.4 383.3L392.8 385.0ZM390.1 384.0L390.8 382.4L392.8 385.0ZM391.3 380.9L393.9 381.8L393.4 383.3ZM390.8 382.4L391.3 380.9L393.4 383.3ZM391.8 379.5L394.4 380.5L393.9 381.8ZM391.3 380.9L391.8 379.5L393.9 381.8ZM392.2 378.4L394.8 379.3L394.4 380.5ZM391.8 379.5L392.2 378.4L394.4 380.5ZM392.5 377.5L395.1 378.5L394.8 379.3ZM392.2 378.4L392.5 377.5L394.8 379.3ZM353.1 372.5a3.0 3.0 0 1 1 6.0 0a3.0 3.0 0 1 1 -6.0 0ZM392.4 378.0a1.4 1.4 0 1 1 2.8 0a1.4 1.4 0 1 1 -2.8 0ZM354.1 412.6a2.4 2.4 0 1 1 4.9 0a2.4 2.4 0 1 1 -4.9 0ZM355.0 413.0a1.9 1.9 0 1 1 3.9 0a1.9 1.9 0 1 1 -3.9 0ZM367.1 367.7a1.6 1.6 0 1 1 3.1 0a1.6 1.6 0 1 1 -3.1 0ZM367.5 367.5a1.9 1.9 0 1 1 3.7 0a1.9 1.9 0 1 1 -3.7 0ZM367.9 368.0a2.3 2.3 0 1 1 4.5 0a2.3 2.3 0 1 1 -4.5 0ZM378.9 403.7a2.0 2.0 0 1 1 3.9 0a2.0 2.0 0 1 1 -3.9 0ZM379.7 403.7a1.6 1.6 0 1 1 3.3 0a1.6 1.6 0 1 1 -3.3 0ZM397.2 367.6L396.5 364.3L397.0 364.2ZM398.0 367.4L397.2 367.6L397.0 364.2ZM396.3 367.8L395.7 364.5L396.5 364.3ZM397.2 367.6L396.3 367.8L396.5 364.3ZM395.3 368.0L394.5 364.6L395.7 364.5ZM396.3 367.8L395.3 368.0L395.7 364.5ZM394.5 368.4L393.2 364.8L394.5 364.6ZM395.3 368.0L394.5 368.4L394.5 364.6ZM393.9 369.0L391.6 365.3L393.2 364.8ZM394.5 368.4L393.9 369.0L393.2 364.8ZM393.6 369.6L389.9 366.2L391.6 365.3ZM393.9 369.0L393.6 369.6L391.6 365.3ZM393.4 370.2L388.6 367.8L389.9 366.2ZM393.6 369.6L393.4 370.2L389.9 366.2ZM393.2 371.3L387.7 369.7L388.6 367.8ZM393.4 370.2L393.2 371.3L388.6 367.8ZM392.9 373.0L387.1 371.9L387.7 369.7ZM393.2 371.3L392.9 373.0L387.7 369.7ZM392.6 375.1L386.7 374.3L387.1 371.9ZM392.9 373.0L392.6 375.1L387.1 371.9ZM392.3 377.3L386.4 376.8L386.7 374.3ZM392.6 375.1L392.3 377.3L386.7 374.3ZM392.2 379.7L386.2 379.3L386.4 376.8ZM392.3 377.3L392.2 379.7L386.4 376.8ZM392.0 381.9L386.1 381.7L386.2 379.3ZM392.2 379.7L392.0 381.9L386.2 379.3ZM392.0 384.0L386.0 384.0L386.1 381.7ZM392.0 381.9L392.0 384.0L386.1 381.7ZM392.0 386.0L386.0 386.1L386.0 384.0ZM392.0 384.0L392.0 386.0L386.0 384.0ZM392.0 387.9L386.1 388.1L386.0 386.1ZM392.0 386.0L392.0 387.9L386.0 386.1ZM392.2 389.7L386.2 390.2L386.1 388.1ZM392.0 387.9L392.2 389.7L386.1 388.1ZM392.3 391.5L386.4 392.3L386.2 390.2ZM392.2 389.7L392.3 391.5L386.2 390.2ZM392.6 393.2L386.8 394.4L386.4 392.3ZM392.3 391.5L392.6 393.2L386.4 392.3ZM393.0 394.9L387.4 396.5L386.8 394.4ZM392.6 393.2L393.0 394.9L386.8 394.4ZM393.5 396.5L388.1 398.5L387.4 396.5ZM393.0 394.9L393.5 396.5L387.4 396.5ZM394.2 398.3L389.1 400.7L388.1 398.5ZM393.5 396.5L394.2 398.3L388.1 398.5ZM395.2 400.4L390.3 402.9L389.1 400.7ZM394.2 398.3L395.2 400.4L389.1 400.7ZM396.3 402.5L391.6 405.2L390.3 402.9ZM395.2 400.4L396.3 402.5L390.3 402.9ZM397.4 404.4L393.1 407.4L391.6 405.2ZM396.3 402.5L397.4 404.4L391.6 405.2ZM398.4 406.0L394.7 409.2L393.1 407.4ZM397.4 404.4L398.4 406.0L393.1 407.4ZM399.1 407.1L396.6 410.5L394.7 409.2ZM398.4 406.0L399.1 407.1L394.7 409.2ZM399.1 407.6L398.7 411.1L396.6 410.5ZM399.1 407.1L399.1 407.6L396.6 410.5ZM399.1 407.8L400.6 410.4L398.7 411.1ZM399.1 407.6L399.1 407.8L398.7 411.1ZM399.8 407.3L401.9 409.2L400.6 410.4ZM399.1 407.8L399.8 407.3L400.6 410.4ZM400.6 406.2L403.0 407.6L401.9 409.2ZM399.8 407.3L400.6 406.2L401.9 409.2ZM401.4 404.6L403.9 405.8L403.0 407.6ZM400.6 406.2L401.4 404.6L403.0 407.6ZM402.1 402.7L404.8 403.7L403.9 405.8ZM401.4 404.6L402.1 402.7L403.9 405.8ZM402.8 400.7L405.5 401.6L404.8 403.7ZM402.1 402.7L402.8 400.7L404.8 403.7ZM403.4 398.6L406.2 399.4L405.5 401.6ZM402.8 400.7L403.4 398.6L405.5 401.6ZM404.0 396.4L406.7 397.0L406.2 399.4ZM403.4 398.6L404.0 396.4L406.2 399.4ZM404.5 393.7L407.2 394.2L406.7 397.0ZM404.0 396.4L404.5 393.7L406.7 397.0ZM404.9 390.9L407.7 391.2L407.2 394.2ZM404.5 393.7L404.9 390.9L407.2 394.2ZM405.2 387.9L408.0 388.2L407.7 391.2ZM404.9 390.9L405.2 387.9L407.7 391.2ZM405.5 385.0L408.3 385.2L408.0 388.2ZM405.2 387.9L405.5 385.0L408.0 388.2ZM405.6 382.3L408.4 382.4L408.3 385.2ZM405.5 385.0L405.6 382.3L408.3 385.2ZM405.6 380.0L408.4 380.0L408.4 382.4ZM405.6 382.3L405.6 380.0L408.4 382.4ZM405.5 378.1L408.3 377.8L408.4 380.0ZM405.6 380.0L405.5 378.1L408.4 380.0ZM405.2 376.3L408.0 375.8L408.3 377.8ZM405.5 378.1L405.2 376.3L408.3 377.8ZM404.9 374.7L407.6 374.0L408.0 375.8ZM405.2 376.3L404.9 374.7L408.0 375.8ZM404.5 373.2L407.1 372.3L407.6 374.0ZM404.9 374.7L404.5 373.2L407.6 374.0ZM404.0 371.9L406.5 370.8L407.1 372.3ZM404.5 373.2L404.0 371.9L407.1 372.3ZM403.4 370.8L405.9 369.4L406.5 370.8ZM404.0 371.9L403.4 370.8L406.5 370.8ZM402.9 369.8L405.1 368.2L405.9 369.4ZM403.4 370.8L402.9 369.8L405.9 369.4ZM402.3 369.2L404.1 367.1L405.1 368.2ZM402.9 369.8L402.3 369.2L405.1 368.2ZM401.5 368.6L402.9 366.2L404.1 367.1ZM402.3 369.2L401.5 368.6L404.1 367.1ZM400.6 368.2L401.6 365.6L402.9 366.2ZM401.5 368.6L400.6 368.2L402.9 366.2ZM399.6 367.9L400.4 365.2L401.6 365.6ZM400.6 368.2L399.6 367.9L401.6 365.6ZM398.6 367.6L399.4 364.9L400.4 365.2ZM399.6 367.9L398.6 367.6L400.4 365.2ZM397.7 367.4L398.5 364.7L399.4 364.9ZM398.6 367.6L397.7 367.4L399.4 364.9ZM397.0 367.1L398.0 364.5L398.5 364.7ZM397.7 367.4L397.0 367.1L398.5 364.7ZM395.8 365.8a1.7 1.7 0 1 1 3.4 0a1.7 1.7 0 1 1 -3.4 0ZM396.1 365.8a1.4 1.4 0 1 1 2.8 0a1.4 1.4 0 1 1 -2.8 0ZM397.1 409.4a1.8 1.8 0 1 1 3.5 0a1.8 1.8 0 1 1 -3.5 0ZM398.4 409.1a1.5 1.5 0 1 1 3.1 0a1.5 1.5 0 1 1 -3.1 0ZM397.9 381.1L399.1 383.6L398.1 384.1ZM396.9 381.5L397.9 381.1L398.1 384.1ZM399.2 380.4L400.4 383.0L399.1 383.6ZM397.9 381.1L399.2 380.4L399.1 383.6ZM400.9 379.7L402.0 382.2L400.4 383.0ZM399.2 380.4L400.9 379.7L400.4 383.0ZM402.6 378.9L403.8 381.4L402.0 382.2ZM400.9 379.7L402.6 378.9L402.0 382.2ZM404.4 378.1L405.5 380.6L403.8 381.4ZM402.6 378.9L404.4 378.1L403.8 381.4ZM406.0 377.3L407.2 379.9L405.5 380.6ZM404.4 378.1L406.0 377.3L405.5 380.6ZM407.4 376.7L408.6 379.3L407.2 379.9ZM406.0 377.3L407.4 376.7L407.2 379.9ZM408.5 376.2L409.9 378.5L408.6 379.3ZM407.4 376.7L408.5 376.2L408.6 379.3ZM409.5 375.4L411.2 377.7L409.9 378.5ZM408.5 376.2L409.5 375.4L409.9 378.5ZM410.6 374.6L412.2 376.9L411.2 377.7ZM409.5 375.4L410.6 374.6L411.2 377.7ZM411.7 373.8L413.1 376.4L412.2 376.9ZM410.6 374.6L411.7 373.8L412.2 376.9ZM413.0 373.1L413.6 376.3L413.1 376.4ZM411.7 373.8L413.0 373.1L413.1 376.4ZM413.6 376.3L413.4 376.6L414.9 372.9ZM413.0 373.1L414.9 372.9L413.6 376.3ZM416.9 373.9L413.1 376.9L413.4 376.6ZM414.9 372.9L416.9 373.9L413.4 376.6ZM418.3 375.8L413.2 377.8L413.1 376.9ZM416.9 373.9L418.3 375.8L413.1 376.9ZM419.2 378.3L413.6 379.7L413.2 377.8ZM418.3 375.8L419.2 378.3L413.2 377.8ZM419.9 381.0L414.2 382.3L413.6 379.7ZM419.2 378.3L419.9 381.0L413.6 379.7ZM420.5 383.9L414.7 385.1L414.2 382.3ZM419.9 381.0L420.5 383.9L414.2 382.3ZM421.0 386.7L415.3 387.9L414.7 385.1ZM420.5 383.9L421.0 386.7L414.7 385.1ZM421.6 389.0L416.0 390.6L415.3 387.9ZM421.0 386.7L421.6 389.0L415.3 387.9ZM422.1 390.6L416.7 392.8L416.0 390.6ZM421.6 389.0L422.1 390.6L416.0 390.6ZM422.6 391.9L417.6 394.4L416.7 392.8ZM422.1 390.6L422.6 391.9L416.7 392.8ZM423.1 393.1L418.4 395.8L417.6 394.4ZM422.6 391.9L423.1 393.1L417.6 394.4ZM423.5 394.1L419.4 397.1L418.4 395.8ZM423.1 393.1L423.5 394.1L418.4 395.8ZM423.7 394.7L420.6 398.1L419.4 397.1ZM423.5 394.1L423.7 394.7L419.4 397.1ZM423.7 395.1L422.2 398.7L420.6 398.1ZM423.7 394.7L423.7 395.1L420.6 398.1ZM423.6 395.4L423.8 398.7L422.2 398.7ZM423.7 395.1L423.6 395.4L422.2 398.7ZM423.9 395.5L425.3 398.1L423.8 398.7ZM423.6 395.4L423.9 395.5L423.8 398.7ZM424.6 395.0L426.6 397.0L425.3 398.1ZM423.9 395.5L424.6 395.0L425.3 398.1ZM425.5 393.9L427.8 395.6L426.6 397.0ZM424.6 395.0L425.5 393.9L426.6 397.0ZM426.5 392.3L428.9 393.8L427.8 395.6ZM425.5 393.9L426.5 392.3L427.8 395.6ZM427.7 390.4L430.1 391.8L428.9 393.8ZM426.5 392.3L427.7 390.4L428.9 393.8ZM428.7 388.4L431.2 389.7L430.1 391.8ZM427.7 390.4L428.7 388.4L430.1 391.8ZM429.8 386.3L432.3 387.6L431.2 389.7ZM428.7 388.4L429.8 386.3L431.2 389.7ZM430.7 384.4L433.3 385.6L432.3 387.6ZM429.8 386.3L430.7 384.4L432.3 387.6ZM431.5 382.4L434.2 383.3L433.3 385.6ZM430.7 384.4L431.5 382.4L433.3 385.6ZM432.3 379.8L435.0 380.5L434.2 383.3ZM431.5 382.4L432.3 379.8L434.2 383.3ZM433.0 377.0L435.7 377.7L435.0 380.5ZM432.3 379.8L433.0 377.0L435.0 380.5ZM433.7 374.3L436.4 375.1L435.7 377.7ZM433.0 377.0L433.7 374.3L435.7 377.7ZM434.4 372.0L437.2 373.1L436.4 375.1ZM433.7 374.3L434.4 372.0L436.4 375.1ZM435.1 370.0L437.7 372.4L437.2 373.1ZM434.4 372.0L435.1 370.0L437.2 373.1ZM437.7 372.4L435.9 372.8L438.3 369.2ZM435.1 370.0L438.3 369.2L437.7 372.4ZM440.2 371.2L435.4 373.1L435.9 372.8ZM438.3 369.2L440.2 371.2L435.9 372.8ZM441.2 373.7L435.6 375.0L435.4 373.1ZM440.2 371.2L441.2 373.7L435.4 373.1ZM441.9 376.9L436.1 378.0L435.6 375.0ZM441.2 373.7L441.9 376.9L435.6 375.0ZM442.6 380.5L436.7 381.5L436.1 378.0ZM441.9 376.9L442.6 380.5L436.1 378.0ZM443.2 384.2L437.4 385.2L436.7 381.5ZM442.6 380.5L443.2 384.2L436.7 381.5ZM443.8 387.9L438.0 389.0L437.4 385.2ZM443.2 384.2L443.8 387.9L437.4 385.2ZM444.5 391.1L438.7 392.3L438.0 389.0ZM443.8 387.9L444.5 391.1L438.0 389.0ZM445.2 394.5L439.4 395.6L438.7 392.3ZM444.5 391.1L445.2 394.5L438.7 392.3ZM445.9 398.4L440.0 399.4L439.4 395.6ZM445.2 394.5L445.9 398.4L439.4 395.6ZM446.5 402.3L440.7 403.4L440.0 399.4ZM445.9 398.4L446.5 402.3L440.0 399.4ZM447.2 406.0L441.5 407.2L440.7 403.4ZM446.5 402.3L447.2 406.0L440.7 403.4ZM447.7 409.0L442.4 410.5L441.5 407.2ZM447.2 406.0L447.7 409.0L441.5 407.2ZM448.0 410.9L443.7 413.1L442.4 410.5ZM447.7 409.0L448.0 410.9L442.4 410.5ZM447.2 411.1L446.2 414.9L443.7 413.1ZM443.7 413.1L447.2 411.1L448.0 410.9ZM446.4 411.4L448.9 413.5L446.2 414.9ZM446.2 414.9L446.4 411.4L447.2 411.1ZM447.4 410.0L450.0 411.2L448.9 413.5ZM446.4 411.4L447.4 410.0L448.9 413.5ZM448.5 407.3L451.2 408.3L450.0 411.2ZM447.4 410.0L448.5 407.3L450.0 411.2ZM449.7 404.0L452.3 404.9L451.2 408.3ZM448.5 407.3L449.7 404.0L451.2 408.3ZM450.8 400.6L453.4 401.4L452.3 404.9ZM449.7 404.0L450.8 400.6L452.3 404.9ZM451.8 397.4L454.5 398.3L453.4 401.4ZM450.8 400.6L451.8 397.4L453.4 401.4ZM452.8 394.8L455.4 395.9L454.5 398.3ZM451.8 397.4L452.8 394.8L454.5 398.3ZM453.7 392.8L456.2 394.0L455.4 395.9ZM452.8 394.8L453.7 392.8L455.4 395.9ZM454.6 391.0L457.1 392.2L456.2 394.0ZM453.7 392.8L454.6 391.0L456.2 394.0ZM455.4 389.3L457.9 390.5L457.1 392.2ZM454.6 391.0L455.4 389.3L457.1 392.2ZM456.1 387.7L458.6 388.9L457.9 390.5ZM455.4 389.3L456.1 387.7L457.9 390.5ZM456.8 386.4L459.3 387.6L458.6 388.9ZM456.1 387.7L456.8 386.4L458.6 388.9ZM457.3 385.3L459.8 386.5L459.3 387.6ZM456.8 386.4L457.3 385.3L459.3 387.6ZM457.7 384.4L460.3 385.6L459.8 386.5ZM457.3 385.3L457.7 384.4L459.8 386.5ZM396.1 382.8a1.4 1.4 0 1 1 2.8 0a1.4 1.4 0 1 1 -2.8 0ZM457.6 385.0a1.4 1.4 0 1 1 2.8 0a1.4 1.4 0 1 1 -2.8 0ZM411.6 374.7a1.7 1.7 0 1 1 3.3 0a1.7 1.7 0 1 1 -3.3 0ZM412.2 374.8a2.0 2.0 0 1 1 4.0 0a2.0 2.0 0 1 1 -4.0 0ZM412.6 375.4a2.4 2.4 0 1 1 4.8 0a2.4 2.4 0 1 1 -4.8 0ZM421.0 396.9a1.9 1.9 0 1 1 3.9 0a1.9 1.9 0 1 1 -3.9 0ZM422.1 397.1a1.6 1.6 0 1 1 3.3 0a1.6 1.6 0 1 1 -3.3 0ZM423.1 396.8a1.5 1.5 0 1 1 2.9 0a1.5 1.5 0 1 1 -2.9 0ZM434.7 371.2a1.8 1.8 0 1 1 3.5 0a1.8 1.8 0 1 1 -3.5 0ZM434.9 371.0a2.2 2.2 0 1 1 4.3 0a2.2 2.2 0 1 1 -4.3 0ZM435.2 372.1a2.6 2.6 0 1 1 5.2 0a2.6 2.6 0 1 1 -5.2 0ZM443.4 412.0a2.4 2.4 0 1 1 4.9 0a2.4 2.4 0 1 1 -4.9 0ZM444.7 413.0a2.0 2.0 0 1 1 4.0 0a2.0 2.0 0 1 1 -4.0 0ZM446.0 412.5a1.6 1.6 0 1 1 3.3 0a1.6 1.6 0 1 1 -3.3 0ZM478.3 370.2L479.8 367.8L480.7 368.3ZM479.3 370.7L478.3 370.2L480.7 368.3ZM477.0 369.4L478.5 367.0L479.8 367.8ZM478.3 370.2L477.0 369.4L479.8 367.8ZM475.5 368.4L476.9 366.0L478.5 367.0ZM477.0 369.4L475.5 368.4L478.5 367.0ZM473.8 367.5L475.2 365.0L476.9 366.0ZM475.5 368.4L473.8 367.5L476.9 366.0ZM472.2 366.6L473.3 364.1L475.2 365.0ZM473.8 367.5L472.2 366.6L475.2 365.0ZM470.7 366.1L471.5 363.4L473.3 364.1ZM472.2 366.6L470.7 366.1L473.3 364.1ZM469.4 365.8L469.8 363.0L471.5 363.4ZM470.7 366.1L469.4 365.8L471.5 363.4ZM468.3 365.9L468.1 362.9L469.8 363.0ZM469.4 365.8L468.3 365.9L469.8 363.0ZM467.2 366.3L466.4 363.0L468.1 362.9ZM468.3 365.9L467.2 366.3L468.1 362.9ZM466.0 366.8L464.8 363.3L466.4 363.0ZM467.2 366.3L466.0 366.8L466.4 363.0ZM465.0 367.4L463.2 363.8L464.8 363.3ZM466.0 366.8L465.0 367.4L464.8 363.3ZM464.0 368.2L461.7 364.5L463.2 363.8ZM465.0 367.4L464.0 368.2L463.2 363.8ZM463.2 368.9L460.3 365.3L461.7 364.5ZM464.0 368.2L463.2 368.9L461.7 364.5ZM462.6 369.7L459.0 366.3L460.3 365.3ZM463.2 368.9L462.6 369.7L460.3 365.3ZM462.2 370.5L457.8 367.5L459.0 366.3ZM462.6 369.7L462.2 370.5L459.0 366.3ZM461.9 371.3L456.9 368.9L457.8 367.5ZM462.2 370.5L461.9 371.3L457.8 367.5ZM461.6 372.3L456.2 370.4L456.9 368.9ZM461.9 371.3L461.6 372.3L456.9 368.9ZM461.3 373.4L455.6 372.0L456.2 370.4ZM461.6 372.3L461.3 373.4L456.2 370.4ZM461.1 374.6L455.3 373.6L455.6 372.0ZM461.3 373.4L461.1 374.6L455.6 372.0ZM460.9 375.9L455.0 375.1L455.3 373.6ZM461.1 374.6L460.9 375.9L455.3 373.6ZM460.8 377.1L454.8 376.7L455.0 375.1ZM460.9 375.9L460.8 377.1L455.0 375.1ZM460.7 378.4L454.7 378.3L454.8 376.7ZM460.8 377.1L460.7 378.4L454.8 376.7ZM460.7 379.8L454.7 380.0L454.7 378.3ZM460.7 378.4L460.7 379.8L454.7 378.3ZM460.8 381.3L454.8 381.8L454.7 380.0ZM460.7 379.8L460.8 381.3L454.7 380.0ZM460.9 382.7L455.1 383.6L454.8 381.8ZM460.8 381.3L460.9 382.7L454.8 381.8ZM461.1 383.9L455.5 385.3L455.1 383.6ZM460.9 382.7L461.1 383.9L455.1 383.6ZM461.4 385.0L456.1 387.0L455.5 385.3ZM461.1 383.9L461.4 385.0L455.5 385.3ZM461.7 385.8L456.9 388.6L456.1 387.0ZM461.4 385.0L461.7 385.8L456.1 387.0ZM462.1 386.6L458.0 389.9L456.9 388.6ZM461.7 385.8L462.1 386.6L456.9 388.6ZM462.6 387.5L459.2 391.0L458.0 389.9ZM462.1 386.6L462.6 387.5L458.0 389.9ZM463.3 388.4L460.6 391.9L459.2 391.0ZM462.6 387.5L463.3 388.4L459.2 391.0ZM464.1 389.1L462.1 392.7L460.6 391.9ZM463.3 388.4L464.1 389.1L460.6 391.9ZM464.9 389.7L463.7 393.2L462.1 392.7ZM464.1 389.1L464.9 389.7L462.1 392.7ZM465.7 390.1L465.4 393.3L463.7 393.2ZM464.9 389.7L465.7 390.1L463.7 393.2ZM466.5 390.2L466.9 393.2L465.4 393.3ZM465.7 390.1L466.5 390.2L465.4 393.3ZM467.4 390.0L468.5 392.6L466.9 393.2ZM466.5 390.2L467.4 390.0L466.9 393.2ZM468.5 389.5L470.0 391.9L468.5 392.6ZM467.4 390.0L468.5 389.5L468.5 392.6ZM469.8 388.6L471.4 390.9L470.0 391.9ZM468.5 389.5L469.8 388.6L470.0 391.9ZM471.0 387.6L472.9 389.6L471.4 390.9ZM469.8 388.6L471.0 387.6L471.4 390.9ZM472.2 386.4L474.3 388.2L472.9 389.6ZM471.0 387.6L472.2 386.4L472.9 389.6ZM473.3 385.0L475.6 386.7L474.3 388.2ZM472.2 386.4L473.3 385.0L474.3 388.2ZM474.3 383.6L476.7 385.0L475.6 386.7ZM473.3 385.0L474.3 383.6L475.6 386.7ZM475.1 381.9L477.7 383.0L476.7 385.0ZM474.3 383.6L475.1 381.9L476.7 385.0ZM475.9 379.7L478.6 380.6L477.7 383.0ZM475.1 381.9L475.9 379.7L477.7 383.0ZM476.6 377.3L479.3 378.1L478.6 380.6ZM475.9 379.7L476.6 377.3L478.6 380.6ZM477.3 374.9L480.0 375.5L479.3 378.1ZM476.6 377.3L477.3 374.9L479.3 378.1ZM477.8 372.5L480.5 373.2L480.0 375.5ZM477.3 374.9L477.8 372.5L480.0 375.5ZM478.3 370.6L481.0 371.2L480.5 373.2ZM477.8 372.5L478.3 370.6L480.5 373.2ZM478.6 369.1L481.4 369.9L481.0 371.2ZM478.3 370.6L478.6 369.1L481.0 371.2ZM478.6 369.5a1.4 1.4 0 1 1 2.8 0a1.4 1.4 0 1 1 -2.8 0ZM478.6 369.5a1.4 1.4 0 1 1 2.8 0a1.4 1.4 0 1 1 -2.8 0ZM484.3 369.7L478.3 369.4L478.4 367.8ZM484.4 368.2L484.3 369.7L478.4 367.8ZM484.2 371.9L478.2 371.5L478.3 369.4ZM484.3 369.7L484.2 371.9L478.3 369.4ZM484.0 374.4L478.1 374.1L478.2 371.5ZM484.2 371.9L484.0 374.4L478.2 371.5ZM483.9 377.2L477.9 376.9L478.1 374.1ZM484.0 374.4L483.9 377.2L478.1 374.1ZM483.7 380.0L477.8 379.7L477.9 376.9ZM483.9 377.2L483.7 380.0L477.9 376.9ZM483.6 382.7L477.6 382.4L477.8 379.7ZM483.7 380.0L483.6 382.7L477.8 379.7ZM483.5 385.1L477.5 384.9L477.6 382.4ZM483.6 382.7L483.5 385.1L477.6 382.4ZM483.4 387.2L477.4 387.1L477.5 384.9ZM483.5 385.1L483.4 387.2L477.5 384.9ZM483.4 389.2L477.4 389.3L477.4 387.1ZM483.4 387.2L483.4 389.2L477.4 387.1ZM483.4 391.3L477.4 391.3L477.4 389.3ZM483.4 389.2L483.4 391.3L477.4 389.3ZM483.4 393.3L477.4 393.2L477.4 391.3ZM483.4 391.3L483.4 393.3L477.4 391.3ZM483.4 395.3L477.4 395.0L477.4 393.2ZM483.4 393.3L483.4 395.3L477.4 393.2ZM483.2 397.4L477.3 396.8L477.4 395.0ZM483.4 395.3L483.2 397.4L477.4 395.0ZM482.9 399.5L477.1 398.5L477.3 396.8ZM483.2 397.4L482.9 399.5L477.3 396.8ZM482.5 401.6L476.7 400.3L477.1 398.5ZM482.9 399.5L482.5 401.6L477.1 398.5ZM481.9 403.7L476.3 402.2L476.7 400.3ZM482.5 401.6L481.9 403.7L476.7 400.3ZM481.3 405.8L475.7 404.0L476.3 402.2ZM481.9 403.7L481.3 405.8L476.3 402.2ZM480.6 407.8L475.1 405.9L475.7 404.0ZM481.3 405.8L480.6 407.8L475.7 404.0ZM479.9 409.7L474.5 407.7L475.1 405.9ZM480.6 407.8L479.9 409.7L475.1 405.9ZM479.3 411.4L473.9 409.4L474.5 407.7ZM479.9 409.7L479.3 411.4L474.5 407.7ZM478.7 412.9L473.3 411.1L473.9 409.4ZM479.3 411.4L478.7 412.9L473.9 409.4ZM478.3 414.3L472.7 412.7L473.3 411.1ZM478.7 412.9L478.3 414.3L473.3 411.1ZM477.9 415.8L472.3 414.2L472.7 412.7ZM478.3 414.3L477.9 415.8L472.7 412.7ZM477.5 417.2L471.9 415.6L472.3 414.2ZM477.9 415.8L477.5 417.2L472.3 414.2ZM476.9 418.6L471.7 416.6L471.9 415.6ZM477.5 417.2L476.9 418.6L471.9 415.6ZM476.1 419.9L471.6 417.3L471.7 416.6ZM476.9 418.6L476.1 419.9L471.7 416.6ZM474.7 421.0L471.9 417.7L471.6 417.3ZM476.1 419.9L474.7 421.0L471.6 417.3ZM471.9 417.7L472.3 417.9L472.9 421.5ZM474.7 421.0L472.9 421.5L471.9 417.7ZM471.3 421.1L472.0 418.1L472.3 417.9ZM472.9 421.5L471.3 421.1L472.3 417.9ZM469.8 420.5L471.0 417.9L472.0 418.1ZM471.3 421.1L469.8 420.5L472.0 418.1ZM468.3 419.6L469.8 417.2L471.0 417.9ZM469.8 420.5L468.3 419.6L471.0 417.9ZM466.8 418.5L468.6 416.3L469.8 417.2ZM468.3 419.6L466.8 418.5L469.8 417.2ZM465.5 417.2L467.6 415.3L468.6 416.3ZM466.8 418.5L465.5 417.2L468.6 416.3ZM464.4 415.7L466.9 414.4L467.6 415.3ZM465.5 417.2L464.4 415.7L467.6 415.3ZM463.8 414.1L466.6 413.5L466.9 414.4ZM464.4 415.7L463.8 414.1L466.9 414.4ZM463.8 412.4L466.6 412.6L466.6 413.5ZM463.8 414.1L463.8 412.4L466.6 413.5ZM464.0 410.7L466.7 411.4L466.6 412.6ZM463.8 412.4L464.0 410.7L466.6 412.6ZM464.5 409.0L467.2 410.0L466.7 411.4ZM464.0 410.7L464.5 409.0L466.7 411.4ZM465.3 407.2L467.8 408.5L467.2 410.0ZM464.5 409.0L465.3 407.2L467.2 410.0ZM466.4 405.4L468.8 406.9L467.8 408.5ZM465.3 407.2L466.4 405.4L467.8 408.5ZM467.8 403.5L469.9 405.3L468.8 406.9ZM466.4 405.4L467.8 403.5L468.8 406.9ZM469.4 401.7L471.4 403.7L469.9 405.3ZM467.8 403.5L469.4 401.7L469.9 405.3ZM471.5 399.9L473.3 402.1L471.4 403.7ZM469.4 401.7L471.5 399.9L471.4 403.7ZM474.1 398.0L475.7 400.3L473.3 402.1ZM471.5 399.9L474.1 398.0L473.3 402.1ZM477.0 396.1L478.5 398.4L475.7 400.3ZM474.1 398.0L477.0 396.1L475.7 400.3ZM480.1 394.2L481.5 396.6L478.5 398.4ZM477.0 396.1L480.1 394.2L478.5 398.4ZM483.0 392.4L484.5 394.8L481.5 396.6ZM480.1 394.2L483.0 392.4L481.5 396.6ZM485.7 390.7L487.3 393.0L484.5 394.8ZM483.0 392.4L485.7 390.7L484.5 394.8ZM488.0 389.1L489.6 391.3L487.3 393.0ZM485.7 390.7L488.0 389.1L487.3 393.0ZM489.9 387.6L491.6 389.9L489.6 391.3ZM488.0 389.1L489.9 387.6L489.6 391.3ZM491.5 386.4L493.3 388.6L491.6 389.9ZM489.9 387.6L491.5 386.4L491.6 389.9ZM493.0 385.2L494.8 387.4L493.3 388.6ZM491.5 386.4L493.0 385.2L493.3 388.6ZM494.3 384.1L496.2 386.1L494.8 387.4ZM493.0 385.2L494.3 384.1L494.8 387.4ZM495.6 382.9L497.6 384.9L496.2 386.1ZM494.3 384.1L495.6 382.9L496.2 386.1ZM496.7 381.6L498.9 383.4L497.6 384.9ZM495.6 382.9L496.7 381.6L497.6 384.9ZM497.9 380.2L500.1 381.8L498.9 383.4ZM496.7 381.6L497.9 380.2L498.9 383.4ZM499.0 378.5L501.4 380.0L500.1 381.8ZM497.9 380.2L499.0 378.5L500.1 381.8ZM500.1 376.6L502.6 378.0L501.4 380.0ZM499.0 378.5L500.1 376.6L501.4 380.0ZM501.1 374.6L503.6 375.9L502.6 378.0ZM500.1 376.6L501.1 374.6L502.6 378.0ZM502.1 372.5L504.7 373.7L503.6 375.9ZM501.1 374.6L502.1 372.5L503.6 375.9ZM503.0 370.4L505.6 371.5L504.7 373.7ZM502.1 372.5L503.0 370.4L504.7 373.7ZM503.9 368.4L506.5 369.5L505.6 371.5ZM503.0 370.4L503.9 368.4L505.6 371.5ZM504.7 366.5L507.3 367.5L506.5 369.5ZM503.9 368.4L504.7 366.5L506.5 369.5ZM505.4 364.6L508.1 365.6L507.3 367.5ZM504.7 366.5L505.4 364.6L507.3 367.5ZM506.1 362.8L508.8 363.8L508.1 365.6ZM505.4 364.6L506.1 362.8L508.1 365.6ZM506.7 361.0L509.4 361.9L508.8 363.8ZM506.1 362.8L506.7 361.0L508.8 363.8ZM507.3 359.3L510.0 360.1L509.4 361.9ZM506.7 361.0L507.3 359.3L509.4 361.9ZM507.8 357.7L510.5 358.4L510.0 360.1ZM507.3 359.3L507.8 357.7L510.0 360.1ZM508.1 356.1L510.9 356.8L510.5 358.4ZM507.8 357.7L508.1 356.1L510.5 358.4ZM508.4 354.8L511.2 355.2L510.9 356.8ZM508.1 356.1L508.4 354.8L510.9 356.8ZM508.6 353.5L511.4 353.8L511.2 355.2ZM508.4 354.8L508.6 353.5L511.2 355.2ZM508.7 352.3L511.5 352.4L511.4 353.8ZM508.6 353.5L508.7 352.3L511.4 353.8ZM508.7 351.2L511.5 351.1L511.5 352.4ZM508.7 352.3L508.7 351.2L511.5 352.4ZM508.6 350.2L511.4 349.9L511.5 351.1ZM508.7 351.2L508.6 350.2L511.5 351.1ZM508.5 349.3L511.3 348.8L511.4 349.9ZM508.6 350.2L508.5 349.3L511.4 349.9ZM508.4 348.5L511.1 347.8L511.3 348.8ZM508.5 349.3L508.4 348.5L511.3 348.8ZM508.2 348.0L510.8 347.0L511.1 347.8ZM508.4 348.5L508.2 348.0L511.1 347.8ZM508.0 347.6L510.4 346.2L510.8 347.0ZM508.2 348.0L508.0 347.6L510.8 347.0ZM507.8 347.4L509.9 345.5L510.4 346.2ZM508.0 347.6L507.8 347.4L510.4 346.2ZM507.6 347.3L509.2 344.9L509.9 345.5ZM507.8 347.4L507.6 347.3L509.9 345.5ZM507.6 347.4L508.3 344.4L509.2 344.9ZM507.8 347.6L507.1 344.1L508.3 344.4ZM508.3 344.4L507.8 347.6L507.6 347.4ZM508.2 347.8L505.8 344.3L507.1 344.1ZM507.1 344.1L508.2 347.8L507.8 347.6ZM508.4 348.0L504.6 345.0L505.8 344.3ZM505.8 344.3L508.4 348.0L508.2 347.8ZM508.4 348.5L503.7 346.0L504.6 345.0ZM508.4 348.0L508.4 348.5L504.6 345.0ZM508.1 349.4L503.0 347.1L503.7 346.0ZM508.4 348.5L508.1 349.4L503.7 346.0ZM507.7 350.5L502.4 348.5L503.0 347.1ZM508.1 349.4L507.7 350.5L503.0 347.1ZM507.3 351.9L501.8 350.0L502.4 348.5ZM507.7 350.5L507.3 351.9L502.4 348.5ZM506.8 353.4L501.2 351.6L501.8 350.0ZM507.3 351.9L506.8 353.4L501.8 350.0ZM506.3 355.0L500.7 353.4L501.2 351.6ZM506.8 353.4L506.3 355.0L501.2 351.6ZM505.8 356.8L500.2 355.2L500.7 353.4ZM506.3 355.0L505.8 356.8L500.7 353.4ZM505.3 358.7L499.6 357.2L500.2 355.2ZM505.8 356.8L505.3 358.7L500.2 355.2ZM504.8 360.7L499.1 359.3L499.6 357.2ZM505.3 358.7L504.8 360.7L499.6 357.2ZM504.3 362.9L498.6 361.5L499.1 359.3ZM504.8 360.7L504.3 362.9L499.1 359.3ZM503.8 365.2L498.0 363.9L498.6 361.5ZM504.3 362.9L503.8 365.2L498.6 361.5ZM503.3 367.5L497.5 366.4L498.0 363.9ZM503.8 365.2L503.3 367.5L498.0 363.9ZM502.9 370.0L497.0 368.9L497.5 366.4ZM503.3 367.5L502.9 370.0L497.5 366.4ZM502.4 372.5L496.6 371.5L497.0 368.9ZM502.9 370.0L502.4 372.5L497.0 368.9ZM502.0 375.1L496.1 374.2L496.6 371.5ZM502.4 372.5L502.0 375.1L496.6 371.5ZM501.7 377.8L495.8 377.1L496.1 374.2ZM502.0 375.1L501.7 377.8L496.1 374.2ZM501.3 380.7L495.4 380.0L495.8 377.1ZM501.7 377.8L501.3 380.7L495.8 377.1ZM501.0 383.6L495.1 382.9L495.4 380.0ZM501.3 380.7L501.0 383.6L495.4 380.0ZM500.7 386.5L494.8 385.9L495.1 382.9ZM501.0 383.6L500.7 386.5L495.1 382.9ZM500.4 389.3L494.5 388.7L494.8 385.9ZM500.7 386.5L500.4 389.3L494.8 385.9ZM500.2 392.0L494.2 391.4L494.5 388.7ZM500.4 389.3L500.2 392.0L494.5 388.7ZM499.9 394.9L493.9 394.3L494.2 391.4ZM500.2 392.0L499.9 394.9L494.2 391.4ZM499.6 398.2L493.6 397.6L493.9 394.3ZM499.9 394.9L499.6 398.2L493.9 394.3ZM499.2 401.6L493.3 401.0L493.6 397.6ZM499.6 398.2L499.2 401.6L493.6 397.6ZM498.9 404.6L493.0 404.2L493.3 401.0ZM499.2 401.6L498.9 404.6L493.3 401.0ZM498.6 406.9L493.0 406.8L493.0 404.2ZM498.9 404.6L498.6 406.9L493.0 404.2ZM498.3 407.9L493.5 408.9L493.0 406.8ZM498.6 406.9L498.3 407.9L493.0 406.8ZM494.6 407.4L497.8 409.8L493.5 408.9ZM493.5 408.9L494.6 407.4L498.3 407.9ZM495.3 406.6L498.3 407.6L497.8 409.8ZM494.6 407.4L495.3 406.6L497.8 409.8ZM496.3 403.8L499.1 404.5L498.3 407.6ZM495.3 406.6L496.3 403.8L498.3 407.6ZM497.4 399.8L500.1 400.5L499.1 404.5ZM496.3 403.8L497.4 399.8L499.1 404.5ZM498.6 395.3L501.3 396.1L500.1 400.5ZM497.4 399.8L498.6 395.3L500.1 400.5ZM499.8 390.8L502.5 391.6L501.3 396.1ZM498.6 395.3L499.8 390.8L501.3 396.1ZM501.1 386.8L503.8 387.7L502.5 391.6ZM499.8 390.8L501.1 386.8L502.5 391.6ZM502.3 383.7L504.9 384.9L503.8 387.7ZM501.1 386.8L502.3 383.7L503.8 387.7ZM503.5 381.5L505.9 382.9L504.9 384.9ZM502.3 383.7L503.5 381.5L504.9 384.9ZM504.8 379.6L507.1 381.3L505.9 382.9ZM503.5 381.5L504.8 379.6L505.9 382.9ZM506.2 378.0L508.2 380.0L507.1 381.3ZM504.8 379.6L506.2 378.0L507.1 381.3ZM507.6 376.8L509.2 379.0L508.2 380.0ZM506.2 378.0L507.6 376.8L508.2 380.0ZM509.0 375.9L510.2 378.5L509.2 379.0ZM507.6 376.8L509.0 375.9L509.2 379.0ZM510.5 375.2L510.9 378.4L510.2 378.5ZM509.0 375.9L510.5 375.2L510.2 378.5ZM512.3 375.1L511.1 378.7L510.9 378.4ZM510.5 375.2L512.3 375.1L510.9 378.4ZM514.1 375.8L511.0 379.1L511.1 378.7ZM512.3 375.1L514.1 375.8L511.1 378.7ZM515.6 377.1L511.2 379.8L511.0 379.1ZM514.1 375.8L515.6 377.1L511.0 379.1ZM516.6 378.8L511.5 381.0L511.2 379.8ZM515.6 377.1L516.6 378.8L511.2 379.8ZM517.5 380.7L512.1 382.6L511.5 381.0ZM516.6 378.8L517.5 380.7L511.5 381.0ZM518.2 382.8L512.7 384.5L512.1 382.6ZM517.5 380.7L518.2 382.8L512.1 382.6ZM518.9 384.9L513.3 386.7L512.7 384.5ZM518.2 382.8L518.9 384.9L512.7 384.5ZM519.6 387.1L514.0 388.9L513.3 386.7ZM518.9 384.9L519.6 387.1L513.3 386.7ZM520.4 389.8L514.7 391.3L514.0 388.9ZM519.6 387.1L520.4 389.8L514.0 388.9ZM521.2 392.9L515.5 394.3L514.7 391.3ZM520.4 389.8L521.2 392.9L514.7 391.3ZM522.0 396.2L516.3 397.6L515.5 394.3ZM521.2 392.9L522.0 396.2L515.5 394.3ZM522.8 399.5L517.1 400.9L516.3 397.6ZM522.0 396.2L522.8 399.5L516.3 397.6ZM523.6 402.6L517.9 404.0L517.1 400.9ZM522.8 399.5L523.6 402.6L517.1 400.9ZM524.2 405.2L518.6 406.7L517.9 404.0ZM523.6 402.6L524.2 405.2L517.9 404.0ZM524.8 407.0L519.2 408.8L518.6 406.7ZM524.2 405.2L524.8 407.0L518.6 406.7ZM525.1 408.3L519.7 410.1L519.2 408.8ZM524.8 407.0L525.1 408.3L519.2 408.8ZM525.3 409.2L520.3 411.1L519.7 410.1ZM525.1 408.3L525.3 409.2L519.7 410.1ZM524.9 409.4L521.1 411.9L520.3 411.1ZM525.3 409.2L524.9 409.4L520.3 411.1ZM523.2 408.9L523.2 412.7L521.1 411.9ZM521.1 411.9L523.2 408.9L524.9 409.4ZM522.3 409.6L524.6 411.6L523.2 412.7ZM523.2 412.7L522.3 409.6L523.2 408.9ZM522.5 409.4L525.0 410.9L524.6 411.6ZM522.3 409.6L522.5 409.4L524.6 411.6ZM523.0 408.8L525.4 410.0L525.0 410.9ZM522.5 409.4L523.0 408.8L525.0 410.9ZM523.5 407.5L526.1 408.6L525.4 410.0ZM523.0 408.8L523.5 407.5L525.4 410.0ZM524.3 405.6L526.9 406.6L526.1 408.6ZM523.5 407.5L524.3 405.6L526.1 408.6ZM525.2 403.3L527.8 404.2L526.9 406.6ZM524.3 405.6L525.2 403.3L526.9 406.6ZM526.1 400.7L528.7 401.7L527.8 404.2ZM525.2 403.3L526.1 400.7L527.8 404.2ZM526.9 398.3L529.5 399.2L528.7 401.7ZM526.1 400.7L526.9 398.3L528.7 401.7ZM527.6 396.3L530.2 397.2L529.5 399.2ZM526.9 398.3L527.6 396.3L529.5 399.2ZM528.1 394.9L530.7 395.8L530.2 397.2ZM527.6 396.3L528.1 394.9L530.2 397.2ZM478.4 368.0a3.0 3.0 0 1 1 6.0 0a3.0 3.0 0 1 1 -6.0 0ZM528.0 395.4a1.4 1.4 0 1 1 2.8 0a1.4 1.4 0 1 1 -2.8 0ZM471.1 419.4a2.2 2.2 0 1 1 4.4 0a2.2 2.2 0 1 1 -4.4 0ZM470.8 419.7a1.8 1.8 0 1 1 3.6 0a1.8 1.8 0 1 1 -3.6 0ZM506.4 345.9a1.5 1.5 0 1 1 3.1 0a1.5 1.5 0 1 1 -3.1 0ZM505.7 345.8a1.8 1.8 0 1 1 3.6 0a1.8 1.8 0 1 1 -3.6 0ZM493.5 408.4a2.4 2.4 0 1 1 4.9 0a2.4 2.4 0 1 1 -4.9 0ZM494.3 408.6a1.9 1.9 0 1 1 3.9 0a1.9 1.9 0 1 1 -3.9 0ZM509.1 376.8a1.6 1.6 0 1 1 3.2 0a1.6 1.6 0 1 1 -3.2 0ZM509.8 376.9a1.9 1.9 0 1 1 3.8 0a1.9 1.9 0 1 1 -3.8 0ZM520.7 410.6a2.3 2.3 0 1 1 4.6 0a2.3 2.3 0 1 1 -4.6 0ZM521.3 410.8a1.9 1.9 0 1 1 3.7 0a1.9 1.9 0 1 1 -3.7 0ZM521.9 410.6a1.5 1.5 0 1 1 3.1 0a1.5 1.5 0 1 1 -3.1 0Z"/>
<path d="M304 262.5C304.6 300 305.8 380 305.5 434.8C380 435.5 470 434.5 545.3 433.6C545.8 380 545.2 300 545.1 262" fill="none" stroke="#000" stroke-width="3.3" stroke-linecap="round" stroke-linejoin="round"/>
</g></mask>
</defs>
<path id="dL" d="M186 161C240 161 270 190 270 240L270 385A84 93 0 0 1 186 478A84 93 0 0 1 102 385L101.5 240C101.5 190 132 161 186 161Z" fill="#1b1b1b" mask="url(#mL)"/>
<path id="dR" d="M287 438V270A20.6 20.6 0 0 1 292.5 248.0A20.8 20.8 0 0 1 314.5 216.3A17.9 17.9 0 0 1 330.7 196.8A20.9 20.9 0 0 1 349.8 184.8A25.6 25.6 0 0 1 378.5 180.0A18.4 18.4 0 0 1 401.4 169.0A77.5 77.5 0 0 1 465.8 176.2C490 170 520 190 535.6 209.7A21.2 21.2 0 0 1 548.0 244.0A19.3 19.3 0 0 1 562.5 270.0V438Q562.5 452.5 548 452.5H301Q287 452.5 287 438Z" fill="#000" mask="url(#mR)"/>
<rect x="285.5" y="165.5" width="278" height="288" fill="none" stroke="#8c8c8c" stroke-width="1"/>
<path d="M424.5 290V329 M405 309.5H444" stroke="#9a9a9a" stroke-width="0.8"/>
<circle cx="274" cy="154" r="10.5" fill="#5f6367"/>
<circle cx="575" cy="154" r="10.5" fill="#5f6367"/>
<circle cx="274" cy="466" r="10.5" fill="#5f6367"/>
<circle cx="575" cy="466" r="10.5" fill="#5f6367"/>
<path d="M269.5 149.5L278.5 158.5M278.5 149.5L269.5 158.5" stroke="#fff" stroke-width="1.4"/>
<path d="M579 154A4.5 4.5 0 1 1 577.5 150.5" fill="none" stroke="#fff" stroke-width="1.3"/><path d="M576 148.5L579 150.5L576.5 153" fill="none" stroke="#fff" stroke-width="1.2"/>
<rect x="270" y="464" width="8" height="6.5" rx="1" fill="none" stroke="#fff" stroke-width="1.2"/><path d="M271.8 464V462C271.8 459.5 276.2 459.5 276.2 462V464" fill="none" stroke="#fff" stroke-width="1.2"/><circle cx="274" cy="467.2" r="0.9" fill="#fff"/>
<path d="M570 461L580 471 M570 461V465.5 M570 461H574.5 M580 471V466.5 M580 471H575.5" fill="none" stroke="#fff" stroke-width="1.3"/>
</svg>
<div class="a" style="left:411px;top:141px;width:27px;height:17px;background:#fff"></div><div class="t" style="left:411px;top:145.5px;width:27px;text-align:center;font-size:10px;letter-spacing:-0.3px;color:#555">4.81"</div>
<div class="a" style="left:585px;top:297px;width:13px;height:17px;background:#fff"></div><div class="t" style="left:585px;top:301.5px;width:13px;text-align:center;font-size:10px;color:#555">5"</div>
<!-- right panel -->
<div class="a" style="left:1834px;top:80px;width:1px;height:1028px;background:#d9d9d9"></div>
<div class="a" style="left:1835px;top:80px;width:207px;height:58px;background:#dcdcdc"></div>
<div class="a" style="left:1835px;top:96px;width:207px;height:2px;background:#cbcbcb"></div>
<div class="a" style="left:1835px;top:96px;width:104px;height:2px;background:#5e6266"></div>
<div class="t" style="left:1835px;top:83px;width:104px;text-align:center;font-size:9.5px;color:#333">Layers</div>
<div class="t" style="left:1939px;top:84px;width:103px;text-align:center;font-size:10px;color:#444">Color Sync</div>
<div class="a" style="left:1835px;top:138px;width:207px;height:1px;background:#d0d0d0"></div>
<svg style="left:0;top:0" width="2048" height="1152" fill="none" stroke-width="1">
<!-- group disabled -->
<g stroke="#bdbdbd">
<rect x="1851.5" y="103.5" width="13" height="12"/>
<rect x="1854.5" y="106" width="6" height="5"/><rect x="1857" y="108.5" width="5.5" height="5"/>
<rect x="1905.5" y="104.5" width="5" height="5"/><rect x="1908.5" y="107.5" width="6" height="7"/>
</g>
<g stroke="#4d4d4d">
<rect x="1961.5" y="103.5" width="8" height="10"/><rect x="1964.5" y="106.5" width="8" height="10"/>
<path d="M1968.5 108.5L1969.5 110.5L1971.5 110.8L1970 112.2L1970.3 114.3L1968.5 113.3L1966.7 114.3L1967 112.2L1965.5 110.8L1967.5 110.5Z" stroke-width="0.8"/>
<path d="M2013.5 105.5H2025.5 M2017 105.5V103.5H2022V105.5 M2014.5 105.5L2015.5 116.5H2023.5L2024.5 105.5 M2017.5 108V114 M2019.5 108V114 M2021.5 108V114"/>
</g>
<!-- layer rows -->
<rect x="1835" y="139" width="194" height="59" fill="#dcdcdc" stroke="none"/>
<path d="M1843 149.5H1849.5L1846.25 153Z M1843 209.5H1849.5L1846.25 213Z" fill="#222" stroke="none"/>
<g fill="#222" stroke="none">
<path d="M2005.5 152C2007.5 148.5 2011.5 148 2012 148C2012.5 148 2016.5 148.5 2018.5 152C2016.5 155.5 2012.5 156 2012 156C2011.5 156 2007.5 155.5 2005.5 152Z"/>
<path d="M2005.5 212C2007.5 208.5 2011.5 208 2012 208C2012.5 208 2016.5 208.5 2018.5 212C2016.5 215.5 2012.5 216 2012 216C2011.5 216 2007.5 215.5 2005.5 212Z"/>
</g>
<circle cx="2012" cy="152" r="2.2" fill="#fff" stroke="none"/><circle cx="2012" cy="152" r="1.3" fill="#222" stroke="none"/>
<circle cx="2012" cy="212" r="2.2" fill="#fff" stroke="none"/><circle cx="2012" cy="212" r="1.3" fill="#222" stroke="none"/>
<!-- thumbnails -->
<use href="#dR" transform="translate(1834.05 153.94) scale(0.0817)"/>
<use href="#dL" transform="translate(1855.67 216.4) scale(0.0703)"/>
<!-- scroll arrows -->
<path d="M2032 149H2039L2035.5 145.5Z" fill="#c4c4c4" stroke="none"/>
<path d="M2032 1019.5H2039L2035.5 1023Z" fill="#9a9a9a" stroke="none"/>
</svg>
<div class="t" style="left:1857px;top:144px;font-size:13px;color:#222">I Am And Will Always ...</div>
<div class="t" style="left:1889px;top:174px;font-size:9.8px;color:#333">Basic Cut</div>
<div class="t" style="left:1857px;top:204px;font-size:13px;color:#222">I Am Loved I Am Eno...</div>
<div class="t" style="left:1889px;top:234px;font-size:9.8px;color:#333">Basic Cut</div>
<div class="t" style="left:1832px;top:123px;width:52px;text-align:center;font-size:8.4px;color:#b3b3b3">Group</div>
<div class="t" style="left:1883px;top:123px;width:52px;text-align:center;font-size:8.4px;color:#b3b3b3">UnGroup</div>
<div class="t" style="left:1941px;top:123px;width:52px;text-align:center;font-size:8.5px;color:#333">Duplicate</div>
<div class="t" style="left:1993px;top:123px;width:52px;text-align:center;font-size:8.3px;color:#333">Delete</div>
<!-- bottom -->
<div class="a" style="left:1835px;top:1027px;width:194px;height:1px;background:#e2e2e2"></div>
<div class="a" style="left:1842px;top:1033px;width:44px;height:29px;border:1px solid #b8b8b8;border-radius:2px;background:#fff"></div>
<div class="t" style="left:1893px;top:1042px;font-size:8.5px;color:#333">Blank Canvas</div>
<div class="a" style="left:1835px;top:1067px;width:207px;height:41px;background:#dcdcdc;border-radius:0 0 8px 0"></div>
<svg style="left:0;top:0" width="2048" height="1152" fill="none" stroke-width="1">
<g stroke="#bdbdbd">
<path d="M1846.5 1081V1073.5H1852.5"/><circle cx="1852" cy="1080" r="4.5"/><circle cx="1853.5" cy="1081" r="2.5"/>
<path d="M1883.5 1082V1073.5H1890V1079"/><circle cx="1891" cy="1081" r="4.5"/>
<g transform="rotate(-38 1929 1079)"><path d="M1928 1083V1074.5A1.5 1.5 0 0 1 1931 1074.5V1084.5A2.8 2.8 0 0 1 1925.4 1084.5V1073A4.2 4.2 0 0 1 1933.8 1073V1082"/></g>
<path d="M1972 1072.5V1080 M1969.5 1077.5L1972 1080L1974.5 1077.5 M1968 1078L1965.5 1080L1972 1083.5L1978.5 1080L1976 1078 M1965.5 1082.5L1972 1086L1978.5 1082.5"/>
</g>
<g stroke="#444">
<rect x="2011.5" y="1073.5" width="13" height="12" rx="1"/>
<rect x="2014.5" y="1076.5" width="7" height="6" rx="3" stroke-dasharray="1.5 1.2"/>
</g>
</svg>
<div class="t" style="left:1833px;top:1092px;width:40px;text-align:center;font-size:8.5px;color:#b3b3b3">Slice</div>
<div class="t" style="left:1869px;top:1092px;width:40px;text-align:center;font-size:8.5px;color:#b3b3b3">Weld</div>
<div class="t" style="left:1909px;top:1092px;width:40px;text-align:center;font-size:8.5px;color:#b3b3b3">Attach</div>
<div class="t" style="left:1952px;top:1092px;width:40px;text-align:center;font-size:8.5px;color:#b3b3b3">Flatten</div>
<div class="t" style="left:1998px;top:1092px;width:40px;text-align:center;font-size:8.5px;color:#333">Contour</div>

<!-- taskbar -->
<div class="a" style="left:0;top:1114px;width:2048px;height:38px;background:linear-gradient(90deg,#741540 0%,#7b1a44 18%,#6c1240 39%,#661139 50%,#6b123c 60%,#7a1844 70%,#7a1844 82%,#6d1233 88%,#6e1234 100%)"></div>
<svg style="left:0;top:0" width="2048" height="1152">
<defs>
<linearGradient id="gw" x1="0" y1="0" x2="1" y2="1"><stop offset="0" stop-color="#6fd3ff"/><stop offset="1" stop-color="#1b8fe6"/></linearGradient>
</defs>
<!-- windows -->
<g fill="url(#gw)"><rect x="804" y="1124.5" width="8.7" height="8.7"/><rect x="813.6" y="1124.5" width="8.7" height="8.7"/><rect x="804" y="1134.2" width="8.7" height="8.7"/><rect x="813.6" y="1134.2" width="8.7" height="8.7"/></g>
<!-- search -->
<circle cx="849.5" cy="1131.8" r="6.8" fill="#8a3a62" stroke="#eee" stroke-width="1.6"/>
<path d="M845 1136.5L841 1141" stroke="#eee" stroke-width="1.8" stroke-linecap="round"/>
<!-- task view -->
<rect x="874.7" y="1129.6" width="13.5" height="12" rx="1.5" fill="#5a5a5a"/>
<rect x="879.1" y="1124.4" width="14" height="12.8" rx="1.5" fill="#f2f2f2"/>
<rect x="879.1" y="1129.6" width="9" height="7.6" fill="#bdbdbd"/>
<!-- widgets -->
<rect x="909.3" y="1124.6" width="19.3" height="17.4" rx="1" fill="#1565c0"/>
<rect x="911" y="1126" width="7" height="14.5" fill="#f4f4f4"/>
<rect x="919.6" y="1126" width="7.4" height="7" fill="#5ad1ff"/>
<rect x="919.6" y="1133.5" width="7.4" height="7" fill="#1e9af0"/>
<!-- teams chat -->
<circle cx="954" cy="1133" r="8.8" fill="#6b6ed6"/>
<path d="M946 1138L945.5 1142.5L950 1140Z" fill="#6b6ed6"/>
<rect x="949.5" y="1129.5" width="6.5" height="6" rx="1" fill="#fff"/><path d="M956 1132.5L959.5 1130V1135Z" fill="#fff"/>
<!-- store -->
<path d="M980 1127H998.7V1141.5C998.7 1142.5 998 1143 997 1143H981.7C980.7 1143 980 1142.5 980 1141.5Z" fill="#f5f5f5"/>
<path d="M985.5 1127V1124.7H993.2V1127" fill="none" stroke="#2ea8e6" stroke-width="1.2"/>
<rect x="985.5" y="1130.5" width="3.6" height="3.6" fill="#f25022"/><rect x="989.7" y="1130.5" width="3.6" height="3.6" fill="#7fba00"/>
<rect x="985.5" y="1134.7" width="3.6" height="3.6" fill="#00a4ef"/><rect x="989.7" y="1134.7" width="3.6" height="3.6" fill="#ffb900"/>
<!-- explorer -->
<path d="M1014.7 1126C1014.7 1125.4 1015.2 1125 1015.8 1125H1021.5L1023.5 1127H1032.9C1033.5 1127 1034 1127.5 1034 1128V1141C1034 1141.6 1033.5 1142 1032.9 1142H1015.8C1015.2 1142 1014.7 1141.6 1014.7 1141Z" fill="#f7c948"/>
<rect x="1014.7" y="1128.5" width="19.3" height="2" fill="#e6ae2e"/>
<rect x="1019.5" y="1136" width="10" height="6" rx="1.5" fill="#1976d2"/>
<rect x="1022" y="1137.8" width="5" height="1.2" fill="#7cc4ff"/>
<rect x="1023" y="1146.8" width="3.5" height="1.6" rx="0.8" fill="#bbb"/>
<!-- chrome -->
<circle cx="1059.8" cy="1133.2" r="8.8" fill="#db4437"/>
<path d="M1059.8 1133.2L1067.4 1128.8A8.8 8.8 0 0 1 1063.2 1141.3Z" fill="#f4b400"/>
<path d="M1059.8 1133.2L1063.2 1141.3A8.8 8.8 0 0 1 1051 1133.2L1052.2 1128.8Z" fill="#0f9d58"/>
<circle cx="1059.8" cy="1133.2" r="4" fill="#fff"/><circle cx="1059.8" cy="1133.2" r="3.1" fill="#4285f4"/>
<circle cx="1067.5" cy="1126" r="6" fill="#a08a78"/><circle cx="1066" cy="1127" r="3" fill="#6b5548"/><circle cx="1069.5" cy="1124.5" r="2.5" fill="#d8d0c8"/>
<rect x="1058" y="1146.8" width="3.5" height="1.6" rx="0.8" fill="#bbb"/>
<!-- gmail -->
<path d="M1085.5 1128.5V1139.7H1089V1131.5L1094.9 1136L1100.7 1131.5V1139.7H1104.2V1128.5L1101.5 1126.5L1094.9 1131.5L1088.2 1126.5Z" fill="#ea4335"/>
<path d="M1085.5 1128.5V1139.7H1089V1131.5Z" fill="#4285f4"/><path d="M1104.2 1128.5V1139.7H1100.7V1131.5Z" fill="#34a853"/>
<path d="M1101.5 1126.5L1104.2 1128.5V1131L1100.7 1133.5V1131.5Z" fill="#fbbc04"/>
<!-- google chat -->
<rect x="1126" y="1124.3" width="12.8" height="11" rx="1.2" fill="#5bb974"/>
<path d="M1121.3 1128.5C1121.3 1127.7 1121.9 1127 1122.7 1127H1132.5C1133.3 1127 1134 1127.7 1134 1128.5V1136.5C1134 1137.3 1133.3 1138 1132.5 1138H1124.5L1121.3 1142Z" fill="#00ac47"/>
<rect x="1124.5" y="1128.5" width="8" height="6" rx="1" fill="#008f3a"/>
<!-- word -->
<rect x="1160" y="1124.9" width="15.1" height="17.1" rx="1.2" fill="#2b7cd3"/>
<rect x="1160" y="1130.5" width="15.1" height="5.7" fill="#185abd"/>
<rect x="1160" y="1136.2" width="15.1" height="5.8" rx="1" fill="#103f91"/>
<rect x="1155.9" y="1128.8" width="10" height="9.5" rx="1" fill="#185abd"/>
<text x="1160.9" y="1136.3" font-family="Liberation Sans" font-size="7.5" font-weight="bold" fill="#fff" text-anchor="middle">W</text>
<rect x="1163.5" y="1146.8" width="3.5" height="1.6" rx="0.8" fill="#bbb"/>
<!-- photos -->
<rect x="1192.1" y="1124.9" width="17.1" height="17.1" rx="1.2" fill="#2aa0f0"/>
<path d="M1192.1 1142V1136L1199 1130.5L1209.2 1139V1142Z" fill="#1f4fa8"/>
<path d="M1199 1136L1209.2 1134V1142H1202Z" fill="#3a6fd8"/>
<circle cx="1203.4" cy="1129" r="1.6" fill="#e8f6ff"/>
<rect x="1198.7" y="1146.8" width="3.5" height="1.6" rx="0.8" fill="#bbb"/>
<!-- cricut -->
<rect x="1220.2" y="1117.2" width="31.3" height="31.8" rx="3" fill="#ffffff" fill-opacity="0.08"/>
<rect x="1226.2" y="1123.8" width="18.7" height="18.7" rx="4" fill="#fff"/>
<text x="1235.5" y="1135" font-family="Liberation Sans" font-size="6" font-weight="bold" fill="#1aa56f" text-anchor="middle" letter-spacing="-0.3">cricut</text>
<rect x="1229" y="1146.6" width="13" height="2" rx="1" fill="#f48fbf"/>
<!-- tray -->
<path d="M1905.5 1134.5L1909.5 1130.5L1913.5 1134.5" fill="none" stroke="#eee" stroke-width="1"/>
<path d="M1925.5 1130.5A9 9 0 0 1 1938.5 1130.5 M1927.5 1132.7A6 6 0 0 1 1936.5 1132.7 M1929.6 1134.8A3 3 0 0 1 1934.4 1134.8" fill="none" stroke="#eee" stroke-width="1.1"/>
<circle cx="1932" cy="1136.5" r="0.9" fill="#eee"/>
<path d="M1944.5 1131V1135.5H1947L1950.5 1138.5V1128L1947 1131Z" fill="none" stroke="#eee" stroke-width="1"/>
<path d="M1952.5 1131L1956 1134.5M1956 1131L1952.5 1134.5" stroke="#eee" stroke-width="1"/>
<circle cx="2025.6" cy="1132.6" r="6.6" fill="#f48fc0"/>
<text x="2025.6" y="1135.8" font-family="Liberation Sans" font-size="8.5" fill="#3a1020" text-anchor="middle">7</text>
</svg>
<div class="t" style="left:1973px;top:1122px;font-size:9px;color:#fff">12:13 PM</div>
<div class="t" style="left:1971px;top:1134px;font-size:9px;color:#fff">2/7/2022</div>

</body></html>
